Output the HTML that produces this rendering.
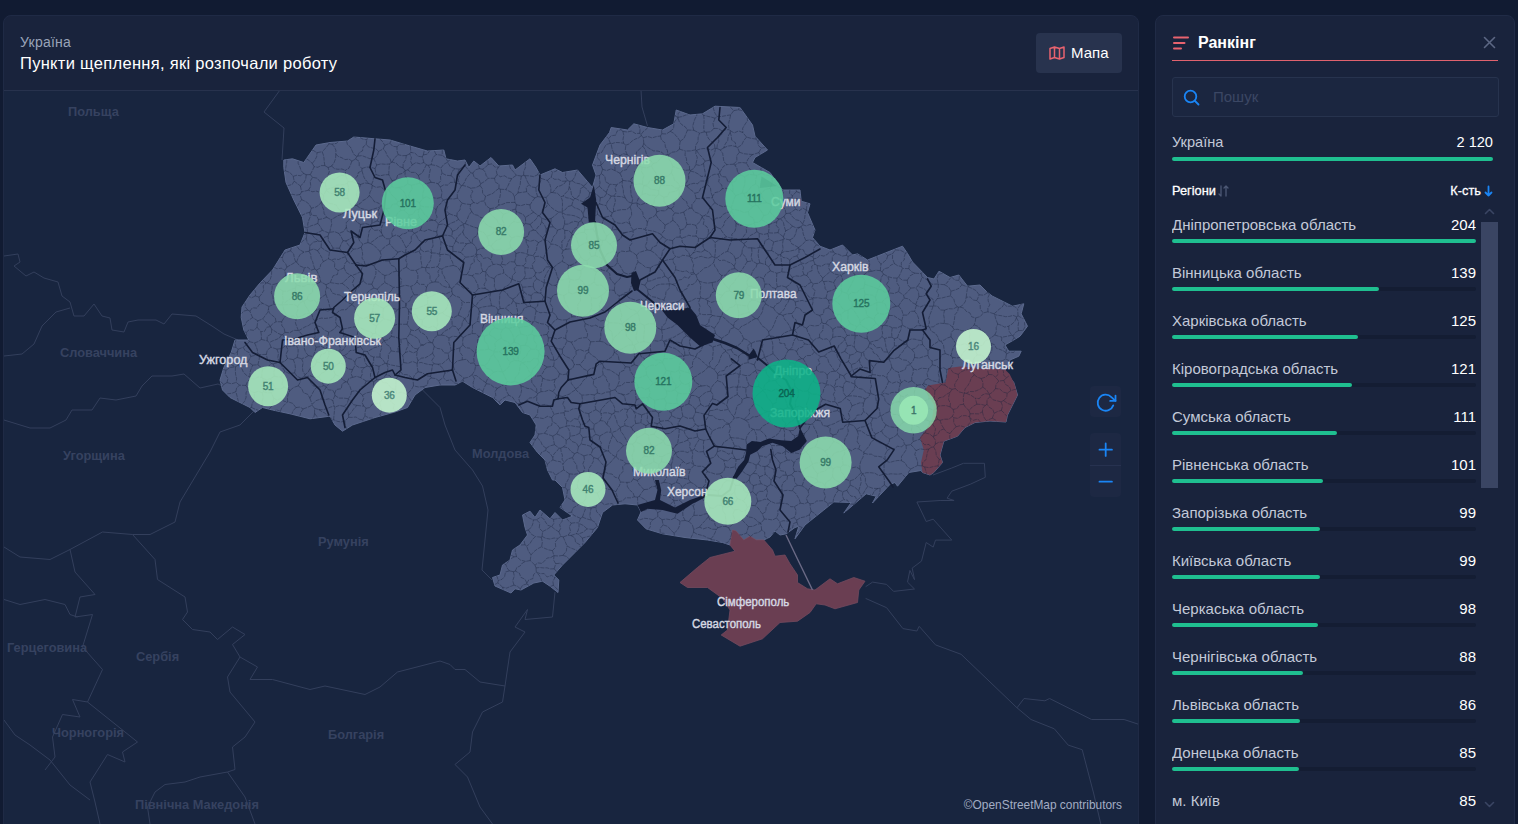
<!DOCTYPE html>
<html lang="uk"><head><meta charset="utf-8"><title>Пункти щеплення</title>
<style>
*{box-sizing:border-box;margin:0;padding:0}
html,body{width:1518px;height:824px;overflow:hidden;background:#111b32;font-family:"Liberation Sans",sans-serif;color:#fff}
.card{position:absolute;left:3px;top:15px;width:1136px;height:830px;background:#19233c;border:1px solid #1f2a45;border-radius:8px 8px 0 0;overflow:hidden}
.hdr{position:absolute;left:0;top:0;width:100%;height:75px;border-bottom:1px solid #27324d}
.hdr .sub{position:absolute;left:16px;top:17px;font-size:14px;letter-spacing:.25px;color:#9aa3b9;line-height:18px}
.hdr .ttl{position:absolute;left:16px;top:37px;font-size:16.5px;letter-spacing:.3px;color:#fff;line-height:20px}
.btn{position:absolute;left:1032px;top:17px;width:86px;height:40px;background:#28334e;border-radius:4px}
.btn svg{position:absolute;left:13px;top:13px}
.btn span{position:absolute;left:35px;top:11px;font-size:15px;line-height:18px;color:#fff}
.mapw{position:absolute;left:-1px;top:75px;width:1136px;height:734px;background:#18253f}
svg.map{position:absolute;left:0;top:0}
.map text{font-family:"Liberation Sans",sans-serif}
.ctry text{font-size:12.8px;font-weight:bold;fill:#364260}
.city text{font-size:12.3px;fill:#d6d9e3;stroke:#d6d9e3;stroke-width:.4px}
.bub text{font-size:10px;letter-spacing:-.15px;fill:#3b7468;stroke:#3b7468;stroke-width:.4px}
.attr{font-size:11.9px;fill:#a3adc4}
.ctl{position:absolute;left:1086px;width:31px;background:#1d2843;border-radius:4px}
.panel{position:absolute;left:1155px;top:15px;width:360px;height:830px;background:#19233c;border:1px solid #202b46;border-radius:8px 8px 0 0}
.panel .pt{position:absolute;left:42px;top:17px;font-size:16px;font-weight:bold;line-height:20px}
.panel .ul{position:absolute;left:16px;top:44px;width:326px;height:1.3px;background:#e0626e}
.search{position:absolute;left:16px;top:61px;width:327px;height:40px;border:1px solid #27334e;border-radius:3px;background:#1b2640}
.search span{position:absolute;left:40px;top:10px;font-size:15px;color:#3b4764;line-height:18px}
.tot{position:absolute;left:16px;top:117px;width:321px;font-size:14.6px;line-height:18px;color:#c3c9d8}
.tot b{position:absolute;right:0;top:0;font-weight:normal;color:#fff}
.totbar{position:absolute;left:16px;top:141px;width:321px;height:4px;border-radius:2px;background:#1fbf90}
.th{position:absolute;left:16px;top:167px;width:321px;font-size:12.8px;line-height:16px;color:#fff;-webkit-text-stroke:.3px #fff}
.th .r{position:absolute;right:12px;top:0}
.list{position:absolute;left:16px;top:199px;width:304px;height:598px;overflow:hidden}
.row{height:48px;position:relative}
.rl{position:absolute;left:0;top:0;width:304px;font-size:15px;line-height:18px;color:#c3c9d8}
.rn{position:absolute;left:0;top:1px;white-space:nowrap}
.rv{position:absolute;right:0;top:1px;color:#fff}
.bar{position:absolute;left:0;top:24px;width:304px;height:4px;border-radius:2px;background:#141d33}
.bar i{display:block;height:4px;border-radius:2px;background:#1fbf90}
.sb{position:absolute;left:325px;top:206px;width:17px;height:266px;background:#3a4563}
</style></head><body>
<div class="card">
 <div class="hdr">
  <div class="sub">Україна</div>
  <div class="ttl">Пункти щеплення, які розпочали роботу</div>
  <div class="btn"><svg width="16" height="14" viewBox="0 0 16 14" fill="none" stroke="#e8636f" stroke-width="1.5" stroke-linejoin="round"><path d="M1 2.5 L5.5 1 L10.5 2.5 L15 1 V11.5 L10.5 13 L5.5 11.5 L1 13 Z M5.5 1 V11.5 M10.5 2.5 V13"/></svg><span>Мапа</span></div>
 </div>
 <div class="mapw">
<svg class="map" width="1136" height="734" viewBox="3 91 1136 734">
<g fill="none" stroke="#333f5c" stroke-width="1" stroke-linejoin="round">
<path d="M280.0 90.0 L264.0 112.0 L284.0 128.0 L282.0 160.0"/>
<path d="M4.0 256.0 L18.0 254.0 L20.0 262.0 L14.0 266.0 L26.0 276.0 L34.0 272.0 L44.0 278.0 L58.0 282.0 L62.0 296.0 L70.0 302.0 L74.0 316.0 L84.0 316.0 L94.0 304.0 L102.0 316.0 L110.0 318.0 L112.0 330.0 L124.0 332.0 L128.0 322.0 L138.0 320.0 L156.0 320.0 L164.0 324.0 L172.0 314.0 L196.0 316.0 L212.0 326.0 L224.0 334.0 L238.0 340.0"/>
<path d="M70.0 308.0 L56.0 312.0 L42.0 326.0 L34.0 344.0 L22.0 354.0 L4.0 356.0"/>
<path d="M222.0 386.0 L218.0 384.0 L200.0 388.0 L184.0 374.0 L172.0 376.0 L152.0 376.0 L142.0 386.0 L136.0 396.0 L116.0 400.0 L100.0 398.0 L92.0 410.0 L72.0 410.0 L66.0 420.0 L50.0 428.0 L30.0 428.0 L4.0 420.0"/>
<path d="M253.0 412.0 L240.0 425.0 L220.0 432.0 L210.0 452.0 L195.0 477.0 L180.0 502.0 L175.0 522.0 L150.0 534.5 L132.5 534.5"/>
<path d="M132.5 534.5 L102.5 532.0 L70.0 549.5 L50.0 559.5 L20.0 557.0 L4.0 547.0"/>
<path d="M132.5 534.5 L155.0 559.5 L157.5 579.5 L185.0 597.0 L187.5 612.0 L182.5 619.5 L192.5 629.5 L210.0 632.0 L217.5 639.5 L232.5 627.0 L245.0 634.5 L232.5 644.5 L240.0 657.0"/>
<path d="M240.0 657.0 L257.5 667.0 L250.0 679.5 L272.5 679.5 L310.0 689.5 L325.0 686.0 L365.0 694.5 L380.0 687.0 L397.5 672.0 L440.0 661.0 L450.0 664.5 L455.0 669.5 L465.0 669.5 L480.0 682.0 L505.0 686.0"/>
<path d="M505.0 686.0 L510.0 652.0 L525.0 632.0 L515.0 627.0 L527.5 609.5 L525.0 619.5 L552.5 617.0 L555.0 592.0"/>
<path d="M505.0 686.0 L502.5 702.0 L482.5 712.0 L472.5 732.0 L470.0 752.0 L455.0 764.5 L467.5 777.0 L480.0 807.0 L492.5 824.0"/>
<path d="M240.0 657.0 L227.5 677.0 L230.0 692.0 L255.0 722.0 L245.0 737.0 L232.5 747.0 L235.0 769.5 L227.5 772.0"/>
<path d="M227.5 772.0 L200.0 777.0 L185.0 782.0 L165.0 784.5 L155.0 792.0 L147.5 807.0 L150.0 824.0"/>
<path d="M227.5 772.0 L245.0 797.0 L255.0 824.0"/>
<path d="M70.0 549.5 L75.0 572.0 L95.0 594.5 L80.0 597.0 L75.0 617.0 L92.5 614.5 L82.5 647.0 L102.5 669.5 L87.5 702.0 L72.5 699.5 L80.0 717.0 L62.5 714.5 L52.5 737.0 L55.0 757.0 L45.0 770.0"/>
<path d="M4.0 599.5 L20.0 604.5 L45.0 599.5 L65.0 604.5 L70.0 614.5 L77.5 617.0"/>
<path d="M87.5 702.0 L110.0 720.0 L137.5 742.0 L122.5 752.0 L125.0 762.0 L107.5 754.5 L90.0 782.0 L95.0 802.0 L100.0 824.0"/>
<path d="M4.0 720.0 L15.0 735.0 L30.0 745.0 L50.0 760.0 L70.0 785.0 L90.0 800.0"/>
<path d="M422.5 390.0 L440.0 407.5 L445.0 425.0 L455.0 450.0 L472.5 470.0 L482.5 486.0 L488.0 510.0 L485.0 540.0 L482.0 570.0 L492.0 580.0"/>
<path d="M641.0 90.0 L642.0 107.0 L647.5 126.0"/>
<path d="M933.0 475.0 L951.8 468.0 L963.4 463.3 L984.4 463.3 L985.3 477.3 L970.4 484.2 L951.8 491.2 L947.1 498.2 L954.1 500.5 L940.1 500.5 L916.9 502.0 L926.2 521.5 L933.2 519.2 L951.8 540.1 L935.5 540.1 L933.2 547.1 L926.2 542.5 L921.5 561.1 L912.2 568.1 L914.5 579.7 L909.9 570.4 L907.5 582.1 L914.5 589.0 L893.6 591.4 L886.6 584.4 L872.6 582.1 L865.6 586.7"/>
<path d="M865.6 598.4 L886.6 607.7 L902.9 628.6 L916.9 631.0 L919.2 626.3 L935.5 644.9 L961.1 654.3 L1017.0 707.8 L1024.0 698.5 L1044.9 700.8 L1049.6 698.5 L1091.5 719.5 L1124.1 719.5 L1138.0 724.1"/>
<path d="M1017.0 707.8 L1031.0 719.5 L1054.3 728.8 L1068.2 745.1 L1082.2 749.7 L1093.8 794.0 L1100.8 824.0"/>
</g>
<g class="ctry">
<text x="68" y="116">Польща</text>
<text x="60" y="357">Словаччина</text>
<text x="63" y="460">Угорщина</text>
<text x="318" y="546">Румунія</text>
<text x="472" y="458">Молдова</text>
<text x="136" y="661">Сербія</text>
<text x="328" y="739">Болгарія</text>
<text x="7" y="652">Герцеговина</text>
<text x="52" y="737">Чорногорія</text>
<text x="135" y="809">Північна Македонія</text>
</g>
<path d="M283.8 160.0 L292.5 158.8 L303.8 162.5 L316.0 145.0 L330.0 142.5 L347.5 141.0 L353.8 137.0 L375.0 138.8 L390.0 140.0 L410.0 146.0 L427.5 151.0 L443.8 150.0 L446.0 158.8 L457.5 161.0 L465.0 160.0 L468.8 167.5 L473.8 161.0 L480.0 166.0 L491.0 157.5 L498.8 166.0 L512.5 165.0 L515.0 170.0 L530.0 158.8 L536.0 167.5 L540.0 175.0 L555.0 168.8 L562.5 172.5 L577.5 170.0 L592.5 187.5 L596.0 175.0 L592.5 165.0 L600.0 145.0 L609.5 132.5 L611.2 127.5 L627.5 130.0 L633.8 123.8 L647.5 127.5 L662.5 130.0 L673.8 123.8 L676.2 110.0 L690.0 115.0 L702.5 113.8 L715.0 106.2 L740.0 107.5 L752.5 125.0 L755.0 136.2 L767.5 150.0 L755.0 157.5 L752.5 162.5 L770.0 172.5 L782.5 190.0 L800.0 190.0 L801.2 201.2 L810.0 203.8 L807.5 212.5 L815.0 230.0 L812.5 237.5 L820.0 246.2 L830.0 250.0 L842.5 245.0 L852.5 255.0 L857.5 253.8 L867.5 260.0 L902.5 246.2 L907.5 253.5 L912.5 262.0 L927.5 277.5 L934.0 279.0 L939.0 271.2 L950.0 277.5 L958.8 275.0 L967.5 286.2 L980.0 285.0 L987.5 292.5 L992.5 296.2 L1012.5 306.2 L1023.8 303.8 L1021.2 313.8 L1027.5 326.2 L1020.0 336.2 L1013.8 340.0 L1005.0 345.0 L1008.8 351.2 L1021.2 351.2 L1018.8 356.2 L1010.0 360.0 L1005.0 371.0 L1013.8 382.5 L1017.5 395.0 L1012.5 405.0 L1007.5 415.0 L1006.0 422.0 L990.0 421.0 L975.0 422.5 L965.0 427.5 L957.5 436.2 L943.8 441.2 L940.0 455.0 L942.5 462.5 L933.8 472.5 L930.0 475.0 L922.5 472.5 L921.0 470.5 L908.8 472.5 L897.5 486.2 L895.0 482.5 L890.0 484.4 L872.5 503.0 L876.2 496.2 L866.2 493.8 L843.8 513.0 L851.2 502.5 L833.8 501.9 L823.8 510.0 L805.0 525.0 L795.0 538.8 L798.8 526.2 L795.0 527.5 L786.2 533.8 L780.0 535.0 L775.0 531.0 L770.0 537.0 L763.8 540.0 L756.2 540.0 L750.0 536.2 L743.8 540.0 L736.0 531.0 L732.5 530.0 L730.0 545.0 L722.5 542.5 L707.5 540.0 L685.0 537.5 L662.5 533.8 L646.0 528.8 L637.5 520.0 L641.0 512.0 L637.5 505.0 L625.0 503.8 L612.5 505.0 L602.5 512.5 L597.5 527.5 L585.0 542.5 L575.0 552.5 L562.5 565.0 L553.8 575.0 L558.8 580.0 L558.0 592.5 L550.0 586.2 L542.5 581.2 L533.8 583.0 L521.0 590.0 L515.0 588.8 L511.0 593.0 L495.0 586.0 L492.5 577.5 L500.0 575.0 L502.5 565.0 L510.0 560.0 L512.5 550.0 L520.0 545.0 L527.5 535.0 L525.0 527.5 L522.5 515.0 L530.0 511.2 L535.0 517.5 L540.0 510.0 L550.0 518.8 L555.0 512.5 L562.5 520.0 L572.5 516.2 L560.0 507.5 L565.0 500.0 L562.5 487.5 L555.0 480.0 L552.5 480.0 L547.5 470.0 L545.0 460.0 L537.5 452.5 L530.0 442.5 L535.0 435.0 L536.2 425.0 L530.0 415.0 L522.5 412.5 L515.0 402.5 L505.0 400.0 L500.0 405.0 L492.5 397.5 L482.5 392.5 L472.5 387.5 L462.5 381.2 L455.0 385.0 L440.0 385.0 L425.0 387.5 L415.0 395.0 L407.5 407.5 L395.0 412.0 L375.0 417.5 L352.5 425.0 L342.5 431.2 L335.0 425.0 L330.0 416.2 L310.0 418.8 L290.0 413.8 L272.5 410.0 L262.5 407.5 L255.0 412.5 L250.0 407.5 L240.0 402.5 L230.0 397.5 L222.5 390.0 L220.0 380.0 L223.8 367.5 L231.2 352.5 L235.0 340.0 L248.8 340.0 L243.8 330.0 L241.2 317.5 L242.0 307.0 L250.0 295.0 L260.0 283.0 L272.5 270.0 L285.0 250.0 L300.0 245.0 L305.0 232.5 L302.5 217.5 L293.8 200.0 L286.0 182.5 L283.8 167.5Z" fill="#4f5c80" stroke="#5c6a8e" stroke-width="1" stroke-linejoin="round"/>
<path d="M1005.0 369.5 L1009.6 374.0 L1014.5 384.0 L1017.5 395.0 L1012.5 405.0 L1007.5 415.0 L1006.0 422.0 L990.0 421.0 L975.0 422.5 L965.0 427.5 L957.5 436.2 L943.8 441.2 L940.0 455.0 L942.5 462.5 L933.8 472.5 L930.0 475.0 L922.5 472.5 L921.0 462.5 L923.8 450.0 L920.0 437.5 L926.0 430.0 L932.0 420.0 L934.0 405.0 L925.0 390.0 L928.0 385.5 L945.5 382.6 L948.4 368.0 L960.0 366.5 L985.0 368.5Z" fill="#6a3e52"/>
<path d="M732.5 530.0 L736.0 531.0 L743.8 540.0 L750.0 536.2 L756.2 540.0 L763.8 540.0 L772.5 550.0 L775.0 556.2 L785.0 555.0 L790.0 563.8 L797.5 575.0 L797.5 582.5 L807.5 588.8 L815.0 590.0 L830.0 578.8 L837.5 583.8 L853.8 577.5 L865.0 581.2 L858.8 590.0 L857.5 602.5 L835.0 608.8 L825.0 605.0 L816.2 603.8 L810.0 612.5 L797.5 621.2 L780.0 622.5 L762.5 638.8 L740.0 646.2 L721.2 635.0 L727.5 630.0 L730.0 610.0 L722.0 598.0 L707.5 587.5 L687.5 587.5 L680.0 582.5 L697.5 567.5 L710.0 557.5 L735.0 551.2 L730.0 545.0Z" fill="#6a3e52" stroke="#744a5e" stroke-width="0.8"/>
<path d="M786 535 L797 558 L812.5 590" fill="none" stroke="#6b6a86" stroke-width="1.4"/>
<path d="M1015.9 389.6L1015.2 389.3L1010.9 390.7M1003.6 400.6L1006.7 397.5L1007.2 393.1M1003.6 400.6L1007.6 403.4L1012.0 405.0L1012.5 405.0M1010.9 390.7L1007.2 393.1M869.7 317.3L866.6 314.9L866.2 311.2L864.8 307.9M869.7 317.3L874.0 319.5M876.8 302.4L872.9 304.5L869.0 306.3L864.8 307.9M876.8 302.4L876.9 306.0L876.6 309.7L878.0 313.2M878.0 313.2L875.1 315.8L874.0 319.5M822.8 278.0L819.7 274.4L817.6 270.3L817.2 265.5M822.8 278.0L826.5 274.6L830.5 271.4M817.2 265.5L821.4 266.3L825.2 264.1L829.3 264.0M830.5 271.4L828.6 267.9L829.3 264.0M308.4 355.6L305.6 352.3L304.3 348.4L304.7 343.8L302.0 340.6M308.4 355.6L305.2 357.6L301.6 358.7M297.1 357.5L301.6 358.7M297.1 357.5L298.1 353.4L298.1 349.4L296.4 345.4M296.4 345.4L299.8 343.7L302.0 340.6M992.3 418.2L995.8 420.1L996.3 421.4M992.3 418.2L994.1 413.3M994.1 413.3L997.6 411.5L1001.3 410.4M1001.3 410.4L1003.9 412.8L1006.2 415.7L1007.3 416.0M1003.6 400.6L1001.0 401.9M1001.0 401.9L1002.6 406.1L1001.3 410.4M871.6 271.3L867.8 271.9L864.7 273.9L862.5 277.1M871.6 271.3L875.9 270.2L880.3 270.7M862.5 277.1L864.9 280.3L864.7 284.2M864.7 284.2L869.1 285.7L873.5 287.1L877.7 288.9M882.0 272.0L880.3 270.7M882.0 272.0L883.5 274.1M883.5 274.1L881.2 277.5L880.6 281.5L880.2 285.6L877.7 288.9M862.3 256.8L861.9 256.7L858.0 254.6L855.9 254.1M871.6 271.3L869.1 268.4L869.7 264.3L868.9 260.6L868.1 259.8M848.1 256.4L847.7 261.1L848.1 265.7L849.7 270.1M848.1 256.4L852.0 254.5M862.5 277.1L858.4 277.3L854.9 274.9M849.7 270.1L852.9 271.9L854.9 274.9M846.2 255.3L848.1 256.4M846.2 255.3L847.7 251.6L845.4 248.1L845.4 247.9M876.8 256.3L876.8 256.5M885.2 253.0L887.8 255.5M887.8 255.5L886.6 259.3L884.0 261.9L880.9 264.2M876.8 256.5L878.2 260.7L880.9 264.2M876.6 256.4L876.8 256.5M880.3 270.7L880.9 264.2M813.4 283.7L812.0 287.3L815.1 290.8L814.1 294.4L813.5 298.0M813.4 283.7L811.2 282.3M798.4 290.3L802.7 291.2L806.3 293.4L809.1 297.1L813.2 298.3M798.4 290.3L798.4 288.7M811.2 282.3L808.1 284.0L805.4 286.7L801.3 286.4L798.4 288.7M236.1 347.4L235.0 343.5L236.0 340.0M236.1 347.4L232.9 346.9M226.9 361.2L228.4 362.8L231.8 364.9L235.3 366.8M226.0 370.1L230.3 367.5L235.3 366.8M226.0 370.1L223.1 369.6M342.8 329.2L343.6 335.5M342.8 329.2L347.1 328.3L351.3 327.3L355.7 326.8M355.7 326.8L357.9 330.5L357.3 334.7L358.9 338.6L358.6 342.8M343.6 335.5L348.2 337.6L351.0 341.7M358.6 342.8L354.6 343.5L351.0 341.7M259.9 283.2L262.6 282.8L266.3 283.0M262.9 280.0L266.3 283.0M406.4 267.2L407.1 263.7L405.8 260.3L406.7 256.7L405.2 253.3M406.4 267.2L402.6 269.1L399.5 272.0M405.2 253.3L401.8 251.2L397.9 252.0M399.5 272.0L396.6 271.2M397.9 252.0L395.7 255.6L392.2 258.1L389.2 261.0M396.6 271.2L395.2 267.0L390.8 265.0L389.2 261.0M326.9 179.7L330.6 178.7L334.6 179.4L338.1 177.0L341.6 175.3L345.7 176.0M326.9 179.7L325.2 183.0M345.7 176.0L348.1 181.7M325.2 183.0L326.5 189.7M326.5 189.7L329.9 188.3L333.4 187.3L336.6 185.2L340.3 184.8L344.1 184.7L347.4 183.1M348.1 181.7L347.4 183.1M670.3 131.3L673.5 128.7L673.9 124.6L674.9 120.8L678.1 118.3M670.3 131.3L673.4 133.1L676.0 135.6L678.2 138.3L680.2 141.3M678.1 118.3L679.4 122.0L681.9 124.8L685.3 126.9L687.5 130.0M680.2 141.3L684.0 138.4L685.8 134.2L687.5 130.0M675.3 115.2L675.8 116.3M675.8 116.3L677.8 117.4M680.2 111.4L678.3 113.4L677.8 117.4M572.2 180.8L575.7 183.1L580.0 183.8L583.6 186.0M572.2 180.8L574.7 177.0L576.1 172.6L577.6 170.1M583.6 186.0L586.8 183.3L587.6 181.8M1020.2 304.5L1020.3 304.7M1022.3 304.1L1020.3 304.7M1004.1 304.0L1007.0 306.5L1011.1 306.0L1014.7 306.7L1017.7 308.9M1004.1 304.0L1003.8 301.9M1020.3 304.7L1017.7 308.9M994.0 313.8L996.7 311.5L999.3 309.1L1002.2 307.0L1004.1 304.0M994.0 313.8L994.6 314.6M1016.8 316.8L1013.2 315.4L1009.4 316.4L1005.6 316.7L1002.0 315.8L998.3 315.3L994.6 314.6M1016.8 316.8L1018.0 315.8M1018.0 315.8L1017.7 308.9M968.9 329.6L971.8 327.6L974.2 324.8M968.9 329.6L969.7 333.7L969.4 337.7L970.1 341.8L968.9 345.9M974.2 324.8L978.2 326.5L980.8 329.9L984.4 332.1L986.9 335.5L989.5 338.8M989.3 339.3L985.1 340.7L982.9 345.3L978.3 346.1L974.8 348.7M968.9 345.9L974.8 348.7M968.9 329.6L965.2 331.0L961.5 330.7L957.8 329.3L954.1 329.5M960.1 307.0L958.4 307.2M960.1 307.0L963.9 308.2L966.3 311.4L969.9 312.9L971.8 316.9L975.7 317.9M958.4 307.2L957.7 311.3L954.9 314.8L954.5 319.0L953.8 323.1L952.6 327.1M975.7 317.9L975.3 321.4L974.2 324.8M954.1 329.5L952.6 327.1M896.1 306.3L892.1 307.5L889.1 310.3M896.1 306.3L898.5 306.0M889.1 310.3L888.4 312.2M888.4 312.2L888.8 315.4M888.8 315.4L893.8 315.6L897.7 318.3L901.8 320.7M901.8 320.7L903.2 315.0M898.5 306.0L901.8 310.0L903.2 315.0M877.9 289.4L881.5 289.7L884.6 292.4L888.4 292.1M877.9 289.4L876.7 293.4L875.4 297.3M875.4 297.3L876.9 302.2M887.9 296.9L884.5 299.3L881.7 302.5M887.9 296.9L889.1 292.9M876.9 302.2L881.7 302.5M889.1 292.9L888.4 292.1M883.5 274.1L887.9 276.6M887.9 276.6L888.9 280.5L886.5 284.4L889.8 288.2L888.4 292.1M865.0 294.1L868.6 294.8L872.3 295.1L875.4 297.3M865.0 294.1L863.8 288.2M864.7 284.2L863.8 288.2M865.0 294.1L863.9 298.4L860.8 301.7L859.1 305.7M864.8 307.9L859.1 305.7M896.1 306.3L893.4 303.2L890.2 300.5L887.9 296.9M889.1 310.3L886.3 308.0L885.3 304.0L881.7 302.5M888.4 312.2L885.1 314.2L881.6 314.0L878.0 313.2M897.0 278.1L896.7 282.7L899.6 286.9L898.6 291.6M897.0 278.1L892.4 277.9L887.9 276.6M898.6 291.6L894.0 293.5L889.1 292.9M863.8 288.2L859.7 289.3L856.7 293.0L851.8 292.3L848.5 295.2M854.9 274.9L854.0 278.9L852.2 282.5L850.5 286.1L848.5 289.5L847.0 293.2M848.5 295.2L847.0 293.2M859.1 305.7L852.3 306.7M848.5 295.2L848.6 299.4L852.3 302.4L852.3 306.7M869.7 317.3L865.7 318.0L862.5 319.9L860.0 323.1M860.0 323.1L859.7 319.3L857.6 316.4L855.9 313.4L853.9 310.5L851.3 307.9M852.3 306.7L851.3 307.9M882.0 272.0L884.3 268.7L888.2 267.8L890.9 265.1L894.4 263.6M887.8 255.5L892.6 253.6M894.4 263.6L892.5 258.7L892.6 253.6M895.0 249.2L895.4 249.9M892.6 253.6L895.4 249.9M951.7 277.0L954.6 280.1L959.0 280.4M951.5 277.1L949.1 279.4L947.3 282.6L944.4 284.7M944.4 284.7L948.6 287.0L950.9 291.2M950.9 291.2L955.1 290.0L959.0 288.3L961.9 284.8M961.9 284.8L959.0 280.4M959.5 276.0L959.4 276.4L959.0 280.4M942.7 273.3L938.2 274.4M944.4 284.7L938.3 284.2M938.2 274.4L937.2 279.2L938.2 284.0M957.2 306.8L954.8 303.3L953.8 298.9L950.5 295.9M957.2 306.8L953.3 308.9L948.7 308.7L944.5 310.2M950.5 295.9L946.1 296.9L941.8 298.0L937.4 298.5M944.5 310.2L940.3 310.0L937.6 306.1L933.5 305.9M937.4 298.5L933.9 303.0M933.5 305.9L933.9 303.0M958.4 307.2L957.2 306.8M952.6 327.1L949.0 324.1L944.2 323.5M944.2 323.5L944.4 319.0L943.6 314.6L944.5 310.2M950.9 291.2L950.5 295.9M938.3 284.2L938.2 287.8L936.6 291.3L938.8 295.0L937.4 298.5M944.2 323.5L940.3 323.2L936.6 324.3L933.4 326.8L929.5 327.1M929.5 327.1L928.1 326.5M933.1 306.2L931.7 310.2L930.2 314.1L928.8 318.1L929.4 322.5L928.1 326.5M994.0 313.8L987.9 311.8M975.7 317.9L980.3 316.6L983.3 312.9M994.8 335.0L989.5 338.8M994.8 335.0L996.3 331.5L996.2 327.5L997.7 324.0M997.7 324.0L995.9 319.4L994.6 314.6M987.9 311.8L983.3 312.9M987.9 311.8L987.9 308.2L989.8 304.8L988.2 301.0L988.0 297.4L989.5 294.0M989.1 293.7L987.5 292.8M987.5 292.8L986.7 291.7M938.2 274.4L937.3 273.9M1016.8 316.8L1016.4 317.8M997.7 324.0L1001.3 325.3L1004.7 327.1L1008.7 326.2M1016.4 317.8L1014.8 321.5L1012.0 324.0L1008.7 326.2M1010.9 390.7L1009.4 386.7L1005.4 384.4L1003.8 380.4M1007.2 393.1L1003.1 392.1L999.8 389.0L995.5 388.6M995.5 388.6L996.0 384.4L998.8 381.1M1003.8 380.4L998.8 381.1M846.2 255.3L842.3 256.1L838.8 254.4L835.2 253.5M835.2 253.5L833.6 252.1M832.0 249.2L833.6 252.1M822.1 280.4L818.3 283.3L813.4 283.7M822.1 280.4L822.8 278.0M817.2 265.5L815.0 264.2M811.2 282.3L809.6 278.7L806.9 275.7M806.9 275.7L808.0 272.2L812.1 270.7L811.7 266.2L815.0 264.2M816.1 244.9L813.5 248.5L814.2 253.0L813.0 257.0M816.1 244.9L819.2 245.3M833.6 252.1L829.8 251.9L827.0 254.5L823.9 256.1L819.8 255.2L817.2 258.2L813.7 258.8M813.0 257.0L813.7 258.8M835.2 253.5L832.3 256.5L832.3 261.1L829.3 264.0M815.0 264.2L813.4 260.4M813.7 258.8L813.4 260.4M798.6 247.5L802.6 244.4L805.9 240.6M798.6 247.5L795.1 245.6L791.6 243.7L789.8 239.9M789.8 239.9L793.7 237.7L795.6 233.9L796.7 229.4L800.4 227.0M805.9 240.6L804.4 237.2L803.2 233.8L802.7 230.1L801.2 226.8M800.4 227.0L801.2 226.8M798.4 288.7L796.3 284.0L792.0 281.2M806.9 275.7L804.0 274.7M804.0 274.7L800.3 276.4L796.1 275.9L792.2 277.3M792.0 281.2L792.2 277.3M763.4 278.6L759.2 276.8L754.6 278.4L750.4 277.1M763.4 278.6L764.9 284.1M764.9 284.1L764.2 287.8L761.5 290.4M761.5 290.4L758.1 289.6L754.8 288.3L751.8 286.1L748.0 286.5M748.0 286.5L746.6 282.1L748.6 277.8M748.6 277.8L750.4 277.1M770.4 270.9L776.8 273.2M770.4 270.9L765.9 273.9L763.4 278.6M775.7 288.5L771.9 287.5L769.2 284.0L764.9 284.1M775.7 288.5L777.3 287.0M776.8 273.2L776.6 277.8L776.5 282.4L777.3 287.0M729.6 290.9L735.0 294.0M729.6 290.9L729.2 288.9M729.2 288.9L730.6 285.1L734.0 282.6L735.8 278.9L738.6 276.0L740.3 272.3M740.3 272.3L744.7 274.7L748.6 277.8M735.0 294.0L738.5 292.3L742.4 291.5L746.0 290.2M746.0 290.2L748.0 286.5M747.2 261.7L752.2 260.9M747.2 261.7L744.9 265.2L742.7 268.8L740.1 272.1M757.1 263.8L756.0 267.4L753.2 270.1L751.7 273.6L750.4 277.1M757.1 263.8L752.2 260.9M729.6 290.9L725.3 291.6L722.7 295.2M729.2 288.9L725.8 285.9L723.3 282.2L720.9 278.4M722.7 295.2L718.1 294.4L715.1 290.9M715.1 290.9L712.6 287.0L712.2 282.5M712.2 282.5L717.1 281.6L720.9 278.4M735.0 268.7L740.1 272.1M735.0 268.7L731.0 269.2L728.0 271.5L725.7 275.2L721.6 275.5M720.9 278.4L721.6 275.5M620.2 303.5L624.1 304.5L627.3 306.7L630.3 309.3L634.4 309.9L637.2 312.9M620.2 303.5L619.5 307.6L620.7 311.5L621.8 315.5L620.5 319.6L622.3 323.5M637.2 312.9L633.9 314.6L630.9 316.6L628.1 319.0L625.1 321.0L622.3 323.5M608.8 310.4L608.5 314.2L608.4 318.1L608.4 322.0M608.8 310.4L612.4 307.9L616.1 305.4L619.1 302.1M608.4 322.0L608.7 322.8M619.1 302.1L620.2 303.5M608.7 322.8L613.2 322.8L617.7 323.1L622.1 324.2M734.1 266.1L735.0 268.7M734.1 266.1L735.7 262.7L735.3 258.9M747.2 261.7L745.5 256.9L741.9 253.4M735.3 258.9L739.6 257.3L741.9 253.4M751.6 247.8L747.7 247.8L744.7 245.1M751.6 247.8L752.0 252.1L751.2 256.5L752.2 260.9M741.9 253.4L742.4 249.0L744.7 245.1M647.5 281.3L651.1 280.8L654.5 279.3L657.9 278.0L661.6 277.7L664.9 276.1M647.5 281.3L647.7 276.7L650.0 272.5L650.4 267.9M664.9 276.1L663.5 271.9L659.9 268.8L658.3 264.6M658.3 264.6L654.0 265.5L650.4 267.9M734.1 266.1L731.2 263.2L727.6 261.8L724.1 260.1L719.6 260.6L716.7 257.8M721.6 275.5L718.7 272.9L717.2 269.3L714.8 266.3L713.6 262.6M713.6 262.6L714.9 258.0M716.7 257.8L714.9 258.0M735.3 258.9L733.8 255.4L730.9 253.0L727.6 251.3M716.7 257.8L720.2 255.4L723.5 252.8L727.6 251.3M744.7 245.1L743.8 243.6M743.8 243.6L741.2 241.6M741.2 241.6L737.2 238.6L732.2 238.4M727.6 251.3L729.0 247.0L730.9 242.8L732.2 238.4M532.6 446.0L533.5 443.2L535.7 439.3M535.7 439.3L532.3 439.0M227.0 382.6L231.6 383.8L236.2 382.4M227.0 382.6L223.8 384.4M223.8 384.4L221.8 387.0M235.9 391.7L231.8 393.3L227.3 393.8L226.7 394.2M235.9 391.7L236.6 387.8L239.5 385.2M239.5 385.2L236.2 382.4M226.0 370.1L225.2 374.3L228.0 378.3L227.0 382.6M235.4 366.8L235.4 370.7L235.6 374.6L236.6 378.5L236.2 382.4M220.4 381.5L223.8 384.4M238.4 401.7L238.0 400.1L237.0 395.9L235.9 391.7M246.0 385.4L247.5 381.5L250.7 378.7M246.0 385.4L239.5 385.2M238.0 365.2L235.4 366.8M238.0 365.2L241.4 367.7L243.3 371.9L246.1 375.1L250.1 377.1M250.1 377.1L250.7 378.7M238.0 349.3L243.1 347.3M238.0 349.3L237.6 351.3M243.1 347.3L245.2 350.7L249.2 352.6L250.8 356.4M237.6 351.3L237.2 355.5L239.6 359.3L239.1 363.5M239.1 363.5L243.4 361.8L248.1 362.1M248.1 362.1L250.8 356.4M236.1 347.4L238.0 349.3M246.1 332.6L244.4 331.3M246.1 332.6L246.8 336.1M248.5 340.0L249.4 341.7M249.4 341.7L246.5 344.7L243.1 347.3M231.0 353.0L234.6 353.9L237.6 351.3M238.0 365.2L239.1 363.5M250.1 377.1L249.8 372.9L251.1 369.0L252.7 365.1M252.7 365.1L248.1 362.1M250.7 378.7L254.5 379.1L258.1 376.9L261.9 377.5M252.7 365.1L257.9 364.8M257.9 364.8L262.8 368.8M262.8 368.8L261.8 373.1L261.9 377.5M297.1 357.5L293.3 359.6M296.4 345.4L291.4 346.2L286.3 346.1M293.3 359.6L287.5 358.5M287.5 358.5L285.9 354.5L288.0 350.2L286.3 346.1M284.9 332.3L284.2 328.6L281.8 325.5L281.7 321.7M284.9 332.3L282.8 334.7M282.8 334.7L281.5 334.8M281.5 334.8L278.0 333.3L274.8 331.2L271.6 329.2M270.4 326.5L272.8 323.6L276.0 321.8M271.6 329.2L270.4 326.6M281.7 321.7L276.0 321.8M254.5 289.6L255.7 292.0L255.3 296.0M255.3 296.0L251.8 297.7L249.0 296.6M246.1 332.6L249.2 329.7L254.1 330.4L257.0 327.1M257.0 327.1L257.8 320.8M243.0 326.2L245.1 325.2L246.7 321.7L249.6 319.6L252.6 317.6M257.8 320.8L252.6 317.6M257.0 327.1L260.8 331.7M270.4 326.5L268.2 323.6L265.1 321.7L262.8 318.9M270.4 326.6L266.7 327.3L264.6 331.3L260.8 331.7M257.8 320.8L262.8 318.9M276.0 321.8L275.3 317.9L272.2 315.3L269.1 312.7L268.5 308.7M262.8 318.9L265.1 315.7L267.5 312.6L268.5 308.7M254.6 342.9L256.0 346.2L257.3 349.6L257.7 353.2M254.6 342.9L258.2 341.6L261.4 339.4M261.4 339.4L267.2 340.9M266.3 354.4L259.7 354.6M266.3 354.4L267.4 350.0L271.0 347.2M271.0 347.2L269.3 342.6M259.7 354.6L257.7 353.2M269.3 342.6L267.2 340.9M249.4 341.7L254.6 342.9M250.8 356.4L254.6 355.5L257.7 353.2M260.8 331.7L261.4 335.5L261.4 339.4M271.6 329.2L271.5 333.7L267.2 336.5L267.2 340.9M257.9 364.8L259.1 359.8L259.7 354.6M262.8 368.8L267.7 367.2L271.2 363.5M271.2 363.5L267.5 359.6L266.3 354.4M282.8 334.7L284.9 338.1L285.0 342.0L285.6 345.7M281.5 334.8L279.3 338.1L276.0 339.6L272.5 340.9L269.3 342.6M276.9 349.1L281.7 348.6L285.6 345.7M276.9 349.1L271.0 347.2M295.9 407.6L293.0 410.9L291.8 414.2M295.9 407.6L299.8 407.1L303.2 408.9M303.2 408.9L300.8 412.5L299.8 416.2M250.3 407.8L251.5 407.5M242.5 403.7L244.8 401.1L246.1 397.2L246.0 392.8L248.2 389.2M251.5 407.5L252.1 403.7L254.0 400.3L254.3 396.4L254.5 392.6M248.2 389.2L251.1 391.3L254.5 392.6M246.0 385.4L248.2 389.2M251.5 407.5L254.9 409.1L258.3 410.3M254.5 392.6L258.4 391.2L262.2 392.8M262.2 392.8L263.3 397.2L262.1 401.5L262.1 405.9L262.1 407.7M280.4 411.3L280.5 411.7M280.4 411.3L276.5 409.9L275.0 410.5M308.4 355.6L313.1 356.6M302.0 340.6L302.4 339.7M313.7 340.3L314.3 344.0L316.1 347.2M313.7 340.3L312.7 339.7M312.7 339.7L307.6 339.0L302.4 339.7M316.1 347.2L314.8 352.0L313.1 356.6M316.7 361.9L320.6 362.8L323.7 364.9L326.6 367.4M316.7 361.9L314.8 366.0L310.3 367.9L308.3 371.9L305.0 374.8M326.6 367.4L325.3 371.6L321.1 373.5L318.6 376.8M318.6 376.8L314.5 377.5L310.4 375.7L306.3 376.8M306.3 376.8L304.5 376.2M304.5 376.2L305.0 374.8M301.6 358.7L303.1 362.6L302.4 367.0L302.8 371.1L305.0 374.8M313.1 356.6L316.1 360.2M316.1 360.2L316.7 361.9M337.0 325.4L334.9 328.4L332.0 330.4L328.8 332.1M337.0 325.4L342.8 329.2M328.8 332.1L327.6 337.3M343.6 335.5L341.4 340.0L338.5 344.2M327.6 337.3L330.9 340.1L334.3 342.8L338.5 344.2M328.8 332.1L324.6 330.3L321.2 327.0L316.8 325.8M313.7 340.3L318.1 339.0L322.5 337.6L327.2 337.8M312.7 339.7L315.1 336.6L314.8 332.8L314.5 328.9L316.8 325.8M316.1 347.2L321.5 346.5L326.3 348.9M327.2 337.8L325.5 341.4L326.9 345.2L326.3 348.9M316.1 360.2L319.7 358.6L321.1 354.6L324.9 353.3L327.0 350.1M326.3 348.9L327.0 350.1M247.8 310.1L249.9 311.1M247.8 310.1L243.7 311.1L241.5 313.7M252.6 317.6L251.2 314.4L249.9 311.1M511.9 279.4L507.8 276.4L503.9 273.0M512.3 279.3L512.4 275.6L515.3 272.7L514.2 268.7L516.6 265.6M503.9 273.0L503.2 268.6L500.5 265.1M514.6 262.0L509.9 261.6L505.9 265.0L501.2 264.2M514.6 262.0L516.6 265.6M500.5 265.1L501.2 264.2M515.9 253.5L513.8 250.1L510.8 247.4M515.9 253.5L515.6 257.8L514.6 262.0M504.0 251.7L507.4 249.5L510.8 247.4M504.0 251.7L501.5 255.5L502.8 260.2L501.2 264.2M309.0 251.2L310.7 254.5L311.1 258.4L312.7 261.8L313.6 265.4L314.8 269.0M309.0 251.2L304.0 252.1M296.6 262.1L298.1 258.0L300.2 254.4L304.0 252.1M296.6 262.1L299.7 265.9L304.3 267.8M314.8 269.0L311.1 270.2L307.9 267.3L304.3 267.8M285.5 275.5L287.6 279.0L292.3 279.0L294.9 282.0M285.5 275.5L284.9 270.3M284.9 270.3L286.9 267.1M286.9 267.1L291.3 264.6L295.7 262.0M295.7 262.0L296.6 262.1M304.3 267.8L303.2 272.2L299.9 275.1L297.1 278.4L294.9 282.0M406.4 267.2L410.7 270.3L416.0 270.4M405.5 252.9L409.8 250.9L414.6 252.6L419.0 251.3M416.0 270.4L422.0 267.4M419.0 251.3L421.0 255.1L420.7 259.4L421.5 263.4L422.0 267.4M396.6 271.2L392.5 272.1L389.0 274.6L384.9 275.5M384.9 275.5L381.5 273.8L378.9 271.1L375.7 269.1M389.2 261.0L384.3 261.0L379.6 259.4M375.7 269.1L373.9 265.7M379.6 259.4L376.8 262.6L373.9 265.7M371.8 284.2L367.0 284.1L363.3 281.2M371.8 284.2L373.3 280.5L375.0 276.9L376.0 273.2L375.7 269.1M363.3 281.2L362.2 276.3L361.0 271.4M361.0 271.4L361.8 267.8L364.4 265.3M364.4 265.3L365.1 264.8M365.1 264.8L369.7 263.9L373.9 265.7M380.3 294.7L384.5 295.8M380.3 294.7L377.3 289.2M384.5 295.8L388.1 293.6L391.3 291.0L393.3 287.3M377.3 289.2L380.7 285.5L384.8 282.6M384.8 282.6L389.1 284.7L393.3 287.3M388.3 299.5L384.5 295.8M388.3 299.5L391.5 296.2L395.5 294.6L399.9 293.9M399.9 293.9L399.9 287.5M399.9 287.5L393.3 287.3M371.8 284.2L373.9 288.1M373.9 288.1L377.3 289.2M384.9 275.5L384.6 279.0L384.8 282.6M399.5 272.0L398.5 275.7L401.3 279.2L401.0 282.8L400.6 286.5M400.6 286.5L399.9 287.5M389.5 243.9L385.9 246.0L382.8 248.5L380.0 251.5M389.5 243.9L389.8 238.9M389.8 238.9L385.7 238.7L383.0 235.6M383.0 235.6L379.0 236.4L376.0 238.8L373.0 241.1L369.8 243.1M369.8 243.1L373.8 245.2L376.9 248.3L380.0 251.5M397.9 252.0L394.7 249.7L392.2 246.8L389.5 243.9M379.6 259.4L381.3 255.5L380.0 251.5M347.4 183.1L348.4 186.9L348.8 190.7L347.0 194.5L348.0 198.3M326.3 190.4L329.5 192.9L333.3 193.9L336.9 195.3L341.0 195.2L343.9 198.3L348.0 198.3M354.8 205.6L351.8 206.7M354.8 205.6L355.8 202.1L357.8 198.9L356.4 194.7L357.1 191.2L359.4 188.0L360.5 184.5M348.1 181.7L352.1 181.7M360.5 184.5L356.3 183.0L352.1 181.7M348.0 198.3L349.8 202.6L351.8 206.7M381.5 233.1L381.2 229.2L382.3 225.7L384.7 222.6M381.5 233.1L383.0 235.6M384.7 222.6L388.6 221.1L392.7 220.2M389.8 238.9L392.3 236.5M392.3 236.5L391.8 232.5L394.0 228.6L394.3 224.6L393.3 220.5M405.5 252.9L406.1 247.8M406.1 247.8L404.1 243.9L402.1 240.0L399.4 236.4M392.3 236.5L395.8 235.1L399.4 236.4M419.0 251.3L420.8 249.6M422.0 267.4L425.6 267.6M426.0 267.4L427.9 264.0L430.3 260.8L431.0 256.9L431.5 253.0M420.8 249.6L424.0 251.9L428.2 251.0L431.5 253.0M515.9 253.5L519.9 252.4L523.7 253.0L527.6 254.2M510.8 247.4L509.7 242.6L511.7 238.1M511.7 238.1L516.3 236.1L521.2 236.9M525.9 239.5L526.4 243.2L528.4 246.7L527.6 250.5L527.6 254.2M525.9 239.5L524.3 237.8M521.2 236.9L524.3 237.8M590.7 341.8L595.2 341.5L599.7 341.3M590.7 341.8L587.1 337.7M585.2 323.5L584.7 327.2L586.3 330.6L587.6 334.0L587.1 337.7M585.2 323.5L588.4 325.0L591.8 326.2L595.7 325.2L598.9 327.1L602.4 327.8M602.4 327.8L600.8 332.1L600.8 336.8L599.7 341.3M625.4 198.1L627.8 201.7L631.9 203.2M625.4 198.1L623.5 194.0L623.3 189.7L622.2 185.5L622.3 181.1M631.9 203.2L632.7 199.0L631.1 194.9L630.8 190.8L630.4 186.7L631.9 182.6M622.3 181.1L622.7 180.3M622.7 180.3L626.3 180.9L630.0 181.2M631.9 182.6L630.0 181.2M620.1 173.3L621.6 176.7L622.7 180.3M620.1 173.3L622.5 170.6L626.5 169.7L628.4 166.4L630.9 163.7L633.6 161.3M633.6 161.3L635.7 165.0L639.8 166.4M639.8 166.4L638.4 169.8L634.5 171.4L635.1 176.0L631.7 178.0L630.0 181.2M642.5 184.3L639.0 183.7L635.2 184.8L631.9 182.6M642.5 184.3L642.6 180.0L643.9 175.7L641.5 171.5L642.1 167.2M642.1 167.2L639.8 166.4M596.3 271.9L594.9 276.8L594.3 281.9M596.3 271.9L593.4 269.9L590.3 268.1L587.6 265.7M587.6 265.7L583.7 267.3L581.0 270.6M594.3 281.9L590.1 284.9L585.1 286.4M585.1 286.4L583.2 281.8L579.0 279.1M581.0 270.6L580.9 275.1L579.0 279.1M693.8 130.3L699.6 133.1M693.8 130.3L692.7 126.2L693.7 122.5L695.0 118.8L696.8 115.2L696.8 114.3M703.6 115.2L701.7 113.8M703.6 115.2L704.1 119.3L704.0 123.5L703.7 127.7L704.3 131.9M704.3 131.9L699.6 133.1M678.1 118.3L677.9 117.4M687.5 130.0L693.8 130.3M677.9 117.4L681.7 116.6L685.4 115.2L688.4 114.4M706.2 132.2L710.7 131.8L713.8 128.4M706.2 132.2L704.3 131.9M715.1 118.3L713.0 123.2L713.8 128.4M715.1 118.3L711.3 117.1L707.4 116.3L703.6 115.2M695.5 149.8L695.6 145.4L698.0 141.6L698.2 137.2L699.6 133.1M696.5 150.3L700.1 149.0L703.8 148.5L707.6 149.0L711.5 149.9L715.0 148.2M706.2 132.2L707.1 135.9L708.9 139.1L711.7 141.7L714.5 144.4L715.0 148.2M690.2 170.6L689.6 170.0M690.2 170.6L693.9 168.4L695.8 164.6M695.5 149.8L690.5 150.9L685.4 151.0M696.0 150.2L695.8 153.8L697.3 157.4L696.6 161.0L695.8 164.6M689.6 170.0L689.4 166.1L686.7 162.7L686.5 158.8L685.0 155.1L685.4 151.0M680.2 141.3L679.6 145.2L679.5 149.1M679.5 149.1L685.4 151.0M642.2 194.3L646.1 193.5L649.7 195.3L653.4 195.2L657.2 195.7M642.2 194.3L638.5 198.0L636.6 202.9M636.8 203.0L640.5 204.9L644.8 203.3L648.8 203.8L652.4 206.0M657.2 195.7L654.5 198.7L654.1 202.6L652.4 206.0M534.9 197.9L530.2 195.7L526.7 191.7M534.9 197.9L537.7 196.6M526.7 191.7L526.2 187.7L528.9 184.7M537.7 196.6L536.2 192.2L535.9 187.6M535.9 187.6L532.0 187.0L528.9 184.7M602.6 169.3L601.0 165.4M602.6 169.3L601.2 173.5M601.0 165.4L596.7 165.8L592.8 164.3M595.7 176.2L595.8 176.2L599.6 175.5M601.2 173.5L599.6 175.5M770.1 188.4L765.0 189.5L761.5 193.5M770.1 188.4L772.4 181.8M771.7 178.6L772.4 181.8M760.5 193.4L761.5 193.5M760.5 193.4L758.9 190.2L758.5 186.4L755.6 184.0M761.7 173.1L764.9 175.0L768.9 175.5L771.5 178.4M761.7 173.1L756.9 175.4M755.6 184.0L755.6 179.6L756.9 175.4M760.5 193.4L756.5 196.2M756.5 196.2L752.8 195.8L749.7 193.4L746.0 192.9M755.6 184.0L751.5 186.0L749.1 189.8L746.0 192.9M715.1 118.3L717.0 116.4M713.2 107.3L713.6 109.1L714.8 112.9L717.0 116.4M938.5 467.0L938.1 465.8M939.2 459.4L938.1 465.8M939.2 459.4L941.3 459.0M901.8 320.7L902.4 325.2M902.4 325.2L905.9 327.1L909.4 328.8M903.2 315.0L907.5 315.2L910.4 311.3L914.6 311.3M914.6 311.3L917.1 314.5L918.5 318.2L918.4 322.6L921.1 325.7M909.4 328.8L913.4 328.3L916.9 325.6L921.1 325.7M933.1 306.2L928.9 306.2L924.8 305.0L920.5 306.9L916.4 305.4M928.1 326.5L925.7 327.1M916.4 305.4L914.6 311.3M925.7 327.1L921.1 325.7M954.1 329.5L951.1 332.5L951.1 336.8M929.5 327.1L931.1 331.1L935.4 333.3L937.7 336.7L939.2 340.8M951.1 336.8L947.6 337.9L944.4 339.9L941.0 341.3M939.2 340.8L941.0 341.3M874.0 319.5L876.0 323.2M876.0 323.2L872.4 327.0L868.9 330.9M868.9 330.9L866.3 328.1L862.7 326.5L859.9 323.8M918.9 296.5L918.5 291.7L915.7 287.7M918.9 296.5L917.2 300.4L915.8 304.4M915.8 304.4L911.9 302.4L908.8 298.9L904.2 298.1M910.8 288.1L907.6 292.0L903.7 295.3M910.8 288.1L915.7 287.7M903.7 295.3L904.2 298.1M916.4 305.4L915.8 304.4M927.0 294.2L929.4 297.0L932.9 299.1L933.9 303.0M927.0 294.2L923.2 296.3L918.9 296.5M898.5 306.0L901.1 301.9L904.2 298.1M907.3 280.2L902.4 280.2L898.5 277.2M907.3 280.2L907.7 284.8L910.8 288.1M898.5 277.2L897.0 278.1M898.6 291.6L903.7 295.3M857.2 430.9L856.5 429.6M857.2 430.9L858.4 434.4L857.6 438.1L857.2 441.8L859.8 445.3L858.8 449.0M856.5 429.6L853.9 425.7L849.5 424.1M849.5 424.1L847.5 427.3L848.3 431.1L847.4 434.6L845.4 437.7L844.4 441.1L844.6 444.8L842.8 447.9M844.3 450.2L847.8 448.3L851.6 450.8L855.1 448.4L858.8 449.0M842.8 447.9L844.1 450.0M843.1 465.0L842.6 461.2L842.2 457.4L844.8 453.9L844.3 450.2M843.1 465.0L840.4 467.3M827.6 457.6L831.5 457.2L833.8 453.6L837.0 452.0L840.8 451.5L844.1 450.0M827.6 457.6L827.3 459.4M840.4 467.3L836.7 466.9L833.3 468.6M833.3 468.6L832.4 468.0M827.3 459.4L829.6 463.8L832.4 468.0M816.9 420.3L821.0 420.9L822.7 425.5L826.8 426.2M816.9 420.3L819.9 417.8L824.4 418.5L827.5 416.3L830.0 412.7L833.5 411.4L837.4 410.6M837.4 410.6L840.6 412.6L843.4 415.0L844.5 418.8M826.8 426.2L830.4 424.9L834.1 423.7L837.4 421.8L840.9 420.2L844.5 418.8M827.3 459.4L823.7 461.0L820.3 462.9L816.2 462.9L812.4 464.0M832.4 468.0L828.1 467.9L825.1 471.2L821.1 471.9L817.5 473.6M817.5 473.6L815.1 470.9L813.2 467.9L812.4 464.3M758.9 152.6L759.9 154.6M758.9 152.6L761.1 148.1M761.1 148.1L765.2 147.5M761.4 167.6L760.8 169.3L761.7 173.1M771.5 178.4L773.1 176.9M813.5 241.1L814.4 239.7M813.5 241.1L816.1 244.9M771.7 178.6L774.1 178.2M780.9 187.8L778.0 187.1L775.8 183.5L772.4 181.8M905.4 253.0L904.4 256.4L904.2 260.0L901.2 262.7L901.5 266.5M905.4 253.0L906.9 252.7M911.9 260.9L911.7 261.1L909.3 264.4L908.9 268.7M908.9 268.7L902.4 268.4M902.4 268.4L901.5 266.5M894.4 263.6L897.6 265.7L901.5 266.5M895.4 249.9L900.7 250.4L905.4 253.0M915.0 273.2L911.3 271.7L908.9 268.7M915.0 273.2L921.2 273.6M921.2 273.6L922.3 272.1M907.3 280.2L910.2 275.7L915.0 273.2M898.5 277.2L900.7 273.0L902.4 268.4M926.8 291.4L929.6 288.0L932.0 284.2M926.8 291.4L924.2 288.9L920.9 287.6L917.7 286.2M932.0 284.2L929.2 281.2L925.7 279.0L922.0 277.2M917.7 286.2L920.3 282.0L922.0 277.2M927.0 294.2L926.8 291.4M938.2 284.0L932.0 284.2M915.7 287.7L917.7 286.2M921.2 273.6L922.0 277.2M976.9 300.6L979.1 294.8M976.9 300.6L973.2 300.0L970.2 297.0L966.2 297.2M979.1 294.8L976.3 290.8L972.4 288.5L968.0 286.8M966.2 297.2L966.8 292.1L967.7 286.9M983.3 312.9L980.3 309.3L980.2 304.1L976.9 300.6M987.5 292.8L983.6 295.2L979.1 294.8M960.1 307.0L963.4 304.5L965.4 301.3L966.2 297.2M969.4 286.1L968.0 286.8M961.9 284.8L967.7 286.9M974.2 374.8L971.3 370.7M974.2 374.8L977.4 377.2L981.2 378.5M971.3 370.7L975.3 369.6L979.1 368.1L982.6 366.2L986.1 364.0L989.7 362.2M981.2 378.5L985.3 377.2L988.6 374.5M988.6 374.5L987.6 370.3L989.2 366.3L989.7 362.2M785.6 450.7L789.4 452.9L793.7 452.8L797.8 453.4L801.8 454.3M785.6 450.7L785.4 444.5M785.4 444.5L790.2 442.9L795.3 443.2M795.3 443.2L798.5 445.0L800.8 448.0L804.1 449.6M804.1 449.6L805.5 452.0M801.8 454.3L805.5 452.0M770.6 336.0L771.5 339.4L772.6 342.9L772.9 346.4L772.6 350.1L773.1 353.6M770.6 336.0L776.2 336.9M788.4 350.0L785.7 347.6L784.7 343.6L779.9 343.2L779.3 338.9L776.2 336.9M788.4 350.0L786.3 353.9L784.7 358.0M784.7 358.0L779.3 360.5M773.1 353.6L776.2 357.1L779.3 360.5M773.1 353.6L768.9 355.6L764.6 357.5M779.3 360.5L776.8 365.5M776.8 365.5L772.7 365.4L769.0 367.1M764.6 357.5L766.6 360.4L768.2 363.6L769.0 367.1M735.0 294.0L735.3 298.8L736.0 303.6M746.0 290.2L746.7 294.3L750.8 296.3L752.0 300.1M736.0 303.6L737.2 304.7M737.2 304.7L742.4 305.4L747.6 306.0M752.0 300.1L748.9 302.4L747.6 306.0M761.5 290.4L762.2 294.1L762.8 297.8L763.9 301.4M752.0 300.1L755.9 300.4L759.7 302.4L763.9 301.4M798.4 290.3L796.7 293.5L794.5 296.4L793.3 299.9M786.0 287.1L789.6 284.7L792.0 281.2M786.0 287.1L788.5 290.7L789.8 294.6L789.3 299.0M789.3 299.0L793.3 299.9M775.7 288.5L775.1 292.3M763.9 301.4L765.1 302.3M775.1 292.3L773.2 295.5L769.2 296.4L767.0 299.3L765.1 302.3M804.0 274.7L802.7 271.2L803.6 267.1L801.2 263.8M813.4 260.4L809.4 261.3L805.8 263.7L801.4 263.1M813.5 241.1L809.7 239.9L805.9 240.6M813.0 257.0L809.2 255.5L805.3 254.2L803.2 249.7L798.9 249.1M798.5 247.6L798.9 249.1M801.4 263.1L799.1 259.6L797.0 255.9M798.9 249.1L799.0 252.8L797.0 255.9M766.7 202.8L764.5 200.0L762.1 197.2L761.5 193.5M766.7 202.8L770.9 204.3M770.1 188.4L772.1 192.6L774.0 196.8L775.4 201.2M770.9 204.3L775.4 201.2M782.3 200.7L781.6 196.5L783.6 192.2L782.7 190.0M782.3 200.7L781.6 201.4M781.6 201.4L775.4 201.2M770.4 270.9L768.7 266.8M757.1 263.8L759.9 263.0M768.7 266.8L765.5 264.5M759.9 263.0L765.5 264.5M751.6 247.8L755.4 248.3L759.1 247.6M759.9 263.0L758.9 259.2L758.2 255.4L758.4 251.5L759.1 247.6M789.8 239.9L783.9 238.7M783.9 238.7L783.2 239.6M798.5 247.6L795.5 249.9L791.9 250.6L788.4 251.5L784.5 251.3L781.3 253.3M783.2 239.6L782.5 244.2L783.1 248.9L781.3 253.3M632.8 158.7L635.8 156.0L636.8 151.6L639.8 148.9L642.8 146.2M632.8 158.7L633.6 161.3M642.8 146.2L645.2 149.5L646.3 153.6L648.0 157.2L650.5 160.4L653.2 163.5M642.1 167.2L646.9 167.9L651.3 166.0M651.3 166.0L653.2 163.5M642.8 146.2L643.8 143.4M643.8 143.4L646.6 146.6L649.9 148.8L653.4 150.8L657.9 151.1L661.8 152.2L664.7 155.4M653.2 163.5L656.7 162.5L659.2 159.9L661.6 157.1L664.7 155.4M643.8 143.4L643.3 137.8M643.3 137.8L647.5 136.4L652.1 137.9L656.3 136.6L660.5 136.0M660.5 136.0L661.4 139.9L664.9 142.8L665.4 146.8L667.3 150.3L668.0 154.3M664.7 155.4L668.0 154.3M689.6 170.0L685.2 170.3L681.0 169.2L676.9 168.0L672.8 166.4M679.5 149.1L676.3 151.7L672.1 152.2L668.7 154.5M672.8 166.4L671.3 162.5L668.7 159.0L668.7 154.5M670.3 131.3L666.4 133.9L661.7 133.8M661.7 133.8L660.5 136.0M642.5 184.3L643.7 185.6M632.2 203.5L636.6 202.9M642.2 194.3L642.7 190.0L643.7 185.8M651.3 166.0L653.4 169.5L655.8 172.9L656.9 176.9M643.7 185.6L647.8 184.6L649.9 180.6L654.4 180.4L656.9 176.9M671.4 172.8L668.0 176.1L663.2 176.4L659.2 178.4M671.4 172.8L672.8 166.4M656.9 176.9L659.2 178.4M743.8 243.6L746.6 241.5L748.1 237.9L750.6 235.3L754.0 233.7L756.9 231.6M741.2 241.6L742.2 238.1L744.5 235.2L746.6 232.2L746.1 228.0L748.7 225.3M748.7 225.3L754.1 223.2M756.9 231.6L755.8 227.3L754.1 223.2M756.5 196.2L755.0 200.6L755.7 205.2M746.0 192.9L743.8 193.3M743.8 193.3L745.2 197.2L748.8 199.6L749.2 204.1L752.7 206.6M752.7 206.6L755.7 205.2M766.7 202.8L761.8 203.2L757.6 205.7M757.6 205.7L755.7 205.2M748.7 225.3L744.6 224.3L740.0 225.5L736.0 223.4M736.0 223.4L735.9 227.3L735.0 231.1L731.8 234.3L732.1 238.4M546.1 448.2L545.8 450.5M546.1 448.2L550.0 445.9L554.5 444.7M554.5 444.7L559.1 448.1M559.1 448.1L556.9 451.1L554.0 453.8L552.8 457.5M552.8 457.5L550.0 453.3L545.8 450.5M546.1 448.2L542.4 445.4L540.6 441.0L537.3 437.8M537.3 437.8L535.7 439.3M540.1 455.1L541.8 452.0L545.8 450.5M520.4 588.8L520.2 589.8M520.4 588.8L522.6 585.2L526.7 584.0M529.2 585.5L526.7 584.0M593.7 429.0L594.2 424.4M593.7 429.0L595.7 434.3M594.2 424.4L597.4 422.8L600.2 420.6M595.7 434.3L599.9 435.9M606.8 424.5L604.4 421.1L600.2 420.6M606.8 424.5L610.4 427.6L611.0 432.3M599.9 435.9L603.3 434.0L606.8 432.0L611.0 432.3M591.8 437.1L592.9 442.0L590.7 446.4M591.8 437.1L587.3 436.9L582.8 437.6M590.7 446.4L586.0 444.9L581.1 444.1M582.8 437.6L581.1 444.1M593.3 529.4L591.5 534.7M593.3 529.4L597.1 526.5M597.1 526.5L597.9 526.4M588.7 413.6L589.6 420.0M588.7 413.6L584.0 412.7L580.2 409.8M589.6 420.0L585.7 423.6L580.5 424.4M580.2 409.8L579.6 414.7L578.1 419.4M580.5 424.4L578.1 419.4M486.3 383.7L490.4 384.3L493.6 387.0L497.4 388.3M486.3 383.7L484.3 387.4L482.9 391.4M482.9 391.4L483.2 392.9M497.4 388.3L495.2 391.4L495.8 395.4L493.9 398.6M493.9 398.6L493.7 398.7M476.6 389.6L479.7 389.1L482.9 391.4M475.2 388.8L473.3 386.4L473.2 382.6L474.4 378.5L472.4 375.1M486.3 383.7L485.9 382.6M485.9 382.6L482.6 380.5L479.6 378.1L476.5 375.7L472.4 375.1M293.3 359.6L294.9 363.9L295.5 368.3L294.6 372.8M304.5 376.2L301.2 378.2M301.2 378.2L297.1 376.4L294.6 372.8M284.9 332.3L289.6 332.8L293.8 330.3L298.4 330.5M302.4 339.7L302.0 334.6L298.7 330.7M286.3 346.1L285.6 345.7M316.8 325.8L315.1 322.6M298.7 330.7L301.8 328.8L305.0 326.9L308.4 325.6L311.4 323.4L315.1 322.6M249.9 311.1L252.4 307.8L256.9 308.1L259.2 304.6L262.8 303.4M268.5 308.7L268.9 306.4M268.9 306.4L262.8 303.4M255.3 296.0L259.1 297.1M247.8 310.1L245.5 307.1L245.0 303.3L244.8 302.8M259.1 297.1L259.6 301.1L262.8 303.4M259.1 297.1L261.7 294.0L263.7 290.6L263.2 285.9L266.3 283.0M271.7 270.8L271.5 275.3L270.2 279.5L267.2 283.0M267.2 283.0L266.3 283.0M314.6 413.5L313.8 417.3L312.0 418.5M314.6 413.5L317.0 416.7L317.5 417.8M303.2 408.9L307.7 407.3L312.1 405.2M314.6 413.5L314.5 408.3M312.1 405.2L314.5 408.3M380.7 415.9L379.9 414.6L381.9 410.4L380.7 406.7L379.7 402.9M366.0 408.2L369.7 407.6L372.3 404.1L376.1 403.8L379.7 402.9M366.0 408.2L365.1 411.9L364.9 415.8M373.0 418.2L368.9 417.9L364.9 415.8M309.9 398.3L312.2 404.4M309.9 398.3L311.9 394.4L314.0 390.6L316.7 387.1M312.2 404.4L315.8 400.7L320.8 399.1M320.8 399.1L322.9 395.1L324.1 390.8L326.3 386.9M316.7 387.1L320.3 387.0L323.6 385.6M323.6 385.6L326.2 386.5M306.3 376.8L309.4 378.9L310.8 382.7L313.0 385.7L316.7 387.1M298.2 385.9L300.2 382.2L301.2 378.2M298.2 385.9L301.7 388.5L303.4 392.7L307.9 394.4L309.9 398.3M318.6 376.8L321.6 380.9L323.6 385.6M334.6 393.5L332.7 390.2L328.4 389.9L326.3 386.9M334.6 393.5L336.3 389.5L341.3 388.7L342.1 383.7L346.0 381.8M335.2 374.6L339.2 376.3L342.3 379.4L346.0 381.8M335.2 374.6L333.5 378.0L330.3 380.2L329.0 383.9L326.2 386.5M332.5 420.5L332.5 420.5M314.5 408.3L318.8 409.6M318.8 409.6L321.7 411.5L324.9 413.1L327.4 415.6L329.0 416.4M330.5 417.1L330.6 417.2L332.5 420.5M345.0 420.9L341.1 422.0L337.3 421.3L333.6 419.7M345.0 420.9L345.1 425.1L346.6 428.7M332.5 420.5L333.6 419.7M338.5 344.2L340.3 347.6L339.8 351.4M327.0 350.1L328.7 351.1M328.7 351.1L332.4 352.3L336.1 350.1L339.8 351.4M328.7 351.1L329.2 355.3L327.1 359.2L328.8 363.4L327.4 367.4M351.0 341.7L347.5 343.4L345.4 346.5L343.3 349.7L340.1 351.7M335.2 374.6L333.4 369.6M327.4 367.4L333.4 369.6M348.7 417.3L345.0 420.9M348.7 417.3L352.3 417.4L356.0 417.0L359.2 419.2L362.7 419.8M362.7 419.8L363.1 421.5M520.4 588.8L517.5 586.4L514.0 585.1M514.0 585.1L510.3 586.5L506.7 588.1L502.6 587.2M503.2 589.6L502.6 587.2M286.8 159.6L286.7 162.1L286.0 166.4L285.2 170.7M285.2 170.7L289.9 172.5L293.2 176.3M293.2 176.3L296.7 175.3L300.6 175.7L303.7 173.5M303.7 173.5L301.0 170.5L299.9 166.9L298.2 163.5L298.1 160.6M285.2 170.7L284.4 171.6M478.2 231.0L483.3 232.1L486.7 236.0M478.2 231.0L477.0 235.5L472.8 238.4L472.1 243.1M472.1 243.1L475.4 246.0L476.8 250.3M476.8 250.3L480.7 248.4L485.3 247.8L488.9 245.2M486.7 236.0L488.7 240.4L488.9 245.2M504.0 251.7L500.7 249.5L496.9 250.1L493.4 249.3M511.7 238.1L509.2 235.1L506.5 232.2M493.4 249.3L491.1 246.1M491.1 246.1L493.6 242.7L496.9 240.2L501.0 238.6L502.8 234.3L506.5 232.2M478.2 231.0L477.5 228.1M477.5 228.1L480.3 224.4L483.4 220.9M486.7 236.0L490.7 235.2L493.5 232.3L496.6 230.0M496.6 230.0L493.2 227.8L489.3 226.4L486.0 224.2L483.4 220.9M465.1 223.6L467.2 219.5L468.8 215.2L471.6 211.5M465.1 223.6L469.2 225.3L473.3 226.9L477.5 228.1M471.6 211.5L474.0 214.5L477.7 215.3L480.6 217.4L484.0 218.6M483.4 220.9L484.0 218.6M544.3 282.9L548.4 282.8L552.0 285.4L556.1 285.3M544.3 282.9L544.3 278.4L546.0 274.5L548.2 270.8L550.7 267.3M550.7 267.3L553.6 267.5M553.6 267.5L555.8 271.3L556.9 275.5L558.6 279.5M558.6 279.5L556.1 285.3M522.6 287.2L526.2 287.0L529.7 286.6L533.3 286.6M522.6 287.2L519.9 281.9M519.9 281.9L523.5 279.0M533.3 286.6L533.5 282.1L536.8 278.9M536.8 278.9L534.8 275.5M523.5 279.0L527.5 278.5L531.5 278.0L534.8 275.5M549.6 266.8L550.7 267.3M549.6 266.8L545.6 267.0L543.2 271.1L539.8 272.8L535.6 272.7M544.2 283.0L540.6 280.8L536.8 278.9M535.6 272.7L534.8 275.5M551.1 298.6L553.6 295.0L557.9 293.9M551.1 298.6L547.5 297.2L543.6 297.0M557.9 293.9L558.1 289.3L556.1 285.3M544.2 283.0L543.4 286.6L540.8 289.6L541.0 293.4M543.6 297.0L541.0 293.4M533.3 286.6L534.9 290.4L538.2 292.8M538.2 292.8L541.0 293.4M522.8 290.3L522.6 287.2M522.8 290.3L519.2 292.9L516.6 296.7L512.9 299.1M511.9 279.4L510.6 282.9L508.0 285.4L504.4 287.1L503.1 290.6M512.3 279.3L516.0 280.9L519.9 281.9M512.9 299.1L509.0 297.0L506.7 293.0L503.1 290.6M494.2 278.6L494.6 282.5L494.3 286.4L496.0 290.1M494.2 278.6L496.6 275.3L500.2 274.1L503.9 273.0M496.0 290.1L501.5 291.1M503.1 290.6L501.5 291.1M494.2 278.6L489.2 276.9L486.1 272.7M486.1 272.7L485.5 276.7L486.2 280.7L484.1 284.5L485.3 288.6M496.0 290.1L491.2 291.7M485.3 288.6L491.2 291.7M462.2 359.9L466.6 359.2L469.8 363.4L474.3 362.8M462.2 359.9L457.1 361.0L453.4 364.6M453.4 364.6L453.4 366.5M453.4 366.5L454.9 370.4L457.5 373.4L460.8 375.7L463.9 378.2M463.9 378.2L468.3 377.3L472.1 374.8M472.1 374.8L474.7 370.7L475.6 365.9M474.3 362.8L475.6 365.9M459.9 347.8L459.7 352.0L462.4 355.7L462.2 359.9M459.9 347.8L462.9 344.9M462.9 344.9L465.5 347.6L469.6 348.2L472.4 350.6L475.1 353.2M475.1 353.2L473.6 357.9L474.3 362.8M459.9 347.8L455.5 349.2L451.1 350.7M448.8 358.3L450.5 361.8L453.4 364.6M448.8 358.3L448.2 353.2M448.2 353.2L451.1 350.7M448.8 358.3L445.5 360.9L442.3 363.7L437.9 364.3M453.4 366.5L451.4 369.9L448.1 371.6L444.8 373.2M444.8 373.2L443.4 369.5L441.2 366.5L437.9 364.3M423.7 386.6L418.5 387.0L413.5 385.8M423.7 386.6L427.5 384.9L428.1 380.1L431.4 378.0M418.1 371.8L414.6 374.7L413.0 379.0M418.1 371.8L422.5 372.7L426.2 375.7L430.6 376.4M413.5 385.8L413.0 379.0M431.4 378.0L430.6 376.4M463.9 378.2L463.1 379.5M463.1 379.5L464.0 382.2M440.3 385.0L440.4 384.9L438.8 380.8M457.8 383.6L454.5 383.1L451.3 379.8L446.5 380.6L443.2 377.6M438.8 380.8L443.2 377.6M423.7 386.6L424.2 388.1M431.4 378.0L435.5 378.5L438.8 380.8M463.1 379.5L459.9 382.6M444.8 373.2L443.2 377.6M448.2 353.2L444.1 352.8L441.6 349.0L437.6 348.5L434.2 346.5M434.2 346.5L432.6 353.2M437.9 364.3L433.8 363.7M432.6 353.2L434.4 356.5L431.8 360.4L433.8 363.7M430.6 376.4L431.3 372.6L431.9 368.7L432.6 364.9M433.8 363.7L432.6 364.9M388.3 299.5L389.0 305.0M405.9 307.2L401.6 307.7L397.7 309.5M405.9 306.6L405.4 302.9L401.9 300.7L400.7 297.4L399.9 293.9M389.0 305.0L392.7 308.4L397.7 309.5M385.2 363.3L386.7 363.6M385.2 363.3L379.0 366.3M386.7 363.6L388.0 367.4L387.5 371.1L385.9 374.6M379.0 366.3L378.7 371.0L377.1 375.4L376.5 380.0M385.9 374.6L383.9 377.7L380.6 379.3M380.6 379.3L376.5 380.0M400.5 371.5L400.0 366.7M400.5 371.5L398.5 375.4L396.1 379.1M400.0 366.7L395.5 365.8L391.1 365.0L386.8 363.6M396.1 379.1L392.4 378.4L389.5 375.6L385.9 374.6M395.7 389.4L391.8 388.7L389.4 385.7L386.9 382.9L382.8 382.5L380.6 379.3M395.7 389.4L395.9 384.2L396.1 379.1M405.9 306.6L406.7 302.8L409.9 300.7L411.0 297.1L414.1 294.9M400.6 286.5L405.7 285.3L410.8 286.4M414.1 294.9L412.1 290.8L410.8 286.4M416.0 270.4L417.9 274.2L417.9 278.1L416.9 282.0M416.9 282.0L414.3 284.9L410.8 286.4M348.7 417.3L348.6 415.3M348.6 415.3L347.8 410.2L344.3 406.4M333.6 419.7L334.0 415.5L334.4 411.2L334.9 407.0M344.3 406.4L339.5 405.4L334.9 407.0M334.6 393.5L334.9 395.4M320.8 399.1L324.8 399.7L328.9 398.8L332.8 400.4M334.9 395.4L332.8 400.4M318.8 409.6L322.9 409.8L326.6 408.7L330.3 407.2L334.1 406.0M332.8 400.4L334.1 406.0M334.9 407.0L334.1 406.0M293.2 176.3L294.2 181.2M294.2 181.2L292.1 184.5L287.9 185.6L287.6 186.1M303.7 173.5L306.2 174.7M294.2 181.2L297.3 183.6L300.4 186.0M306.2 174.7L305.7 179.2L303.7 183.0L300.4 186.0M324.8 165.6L324.3 162.1L324.0 158.5L323.4 155.0L322.1 151.7M324.8 165.6L321.2 165.6L317.8 167.3L314.1 166.7M314.1 166.7L312.3 163.3M312.3 163.3L314.9 160.2L316.6 156.8L317.0 152.7M317.0 152.7L322.1 151.7M326.9 179.7L327.7 175.7L329.3 171.7L328.1 167.5M325.2 183.0L320.5 182.2L317.2 178.2L312.5 177.3M328.1 167.5L324.8 165.6M312.5 177.3L310.3 174.6M310.3 174.6L312.3 170.7L314.1 166.7M306.4 158.8L309.1 160.5L312.3 163.3M306.2 174.7L310.3 174.6M312.2 150.4L313.4 150.5L317.0 152.7M329.0 143.8L325.8 148.0L322.1 151.7M329.0 143.8L328.2 142.8M335.8 154.2L335.6 158.6L334.1 162.6L331.6 166.1M335.8 154.2L338.6 156.6L341.9 157.8L345.0 159.6L349.0 159.1L351.9 161.1M331.6 166.1L334.6 168.7L338.1 169.3L341.9 169.0L345.3 170.3M351.9 161.1L350.5 164.8L348.9 168.2L345.3 170.3M328.1 167.5L331.6 166.1M332.0 144.2L329.0 143.8M332.0 144.2L334.6 147.1L335.9 150.4L335.8 154.2M345.7 176.0L345.3 170.3M398.8 187.5L395.2 187.9L391.8 186.6M398.8 187.5L403.6 186.6L407.7 183.9M391.8 186.6L392.1 180.8M407.7 183.9L407.8 179.3L405.0 175.3L405.1 170.7M392.1 180.8L396.3 179.4L397.8 174.7L402.1 173.5L405.1 170.7M418.3 175.4L419.6 179.2L419.6 183.2M418.3 175.4L415.4 172.4L411.0 172.4L407.8 169.9M419.6 183.2L415.5 184.4L411.3 185.2M411.3 185.2L407.7 183.9M407.8 169.9L405.2 170.5M346.6 141.1L347.4 144.5L350.4 147.0L352.0 150.5L353.6 154.1L356.8 156.5M338.1 141.8L336.6 143.3L332.0 144.2M351.9 161.1L355.6 159.0M355.6 159.0L356.8 156.5M314.8 269.0L316.6 270.1M294.9 282.0L296.4 284.9M316.6 270.1L318.3 273.9L319.9 277.8L320.8 281.9M320.8 281.9L315.4 284.5M315.4 284.5L311.6 284.9L307.8 284.4L304.1 286.4L300.3 286.0L296.4 284.9M281.7 321.7L283.8 318.2L286.4 314.9M298.4 330.5L296.8 326.7L295.4 322.9L296.4 318.6M286.4 314.9L289.4 316.8L293.6 315.8L296.4 318.6M325.9 294.4L325.4 290.8L326.7 287.4M325.9 294.4L322.4 296.7L319.2 299.3L316.9 302.9M326.7 287.4L326.0 284.7M326.0 284.7L320.8 281.9M315.4 284.5L312.5 287.7L312.6 292.5L308.4 294.9L307.2 299.0M316.9 302.9L314.3 300.1L310.1 301.2L307.2 299.0M295.7 262.0L294.4 258.1L293.6 253.9L290.5 250.8M304.0 252.1L299.3 249.6L296.8 246.1M290.5 250.8L291.4 247.9M309.0 251.2L309.6 250.4M309.6 250.4L313.6 249.0L317.5 250.6M316.6 270.1L319.9 268.1L320.8 264.3L323.3 261.7M317.5 250.6L319.8 254.1L321.9 257.8L323.3 261.7M455.8 240.9L459.1 243.2L463.1 242.9L466.7 243.8M455.7 240.6L457.3 237.0L460.0 234.5L462.8 231.9M462.8 231.9L464.5 236.2L468.3 239.1L470.8 242.9M466.7 243.8L470.8 242.9M463.4 224.5L464.2 228.3L462.8 231.9M463.4 224.5L459.4 226.2L456.6 229.8L452.5 231.3M452.5 231.3L451.8 236.1M451.8 236.1L455.7 240.6M463.7 223.8L465.1 223.6M472.1 243.1L470.8 242.9M438.4 236.1L442.8 235.0L447.3 235.3L451.8 236.1M438.4 236.1L440.9 241.6M455.8 240.9L452.8 246.7M452.8 246.7L448.4 246.0L444.5 244.1L440.9 241.6M426.0 267.4L429.9 267.8L433.8 267.4L437.6 266.7M437.6 266.7L439.4 262.9L440.1 258.8L439.9 254.6M431.7 252.9L435.6 253.1L439.4 254.2M486.1 272.7L485.6 271.8M500.5 265.1L496.8 264.1L493.1 264.5M485.6 271.8L488.3 267.0L493.1 264.5M493.4 249.3L491.9 252.5L491.9 256.1L490.9 259.5M493.1 264.5L490.9 259.5M396.9 204.0L399.2 206.9L400.9 210.3M396.9 204.0L397.6 201.5M397.6 201.5L402.5 201.2L406.7 198.4M404.0 210.1L407.0 207.3L409.8 204.3L410.7 200.1M404.0 210.1L400.9 210.3M406.7 198.4L410.0 199.4M410.0 199.4L410.7 200.1M386.2 208.6L390.3 208.2L392.7 204.0L396.9 204.0M386.2 208.6L388.7 212.3L389.5 217.0L392.7 220.2M393.2 220.4L395.7 217.0L397.5 213.1L400.9 210.3M386.2 208.6L382.0 206.0M389.0 189.3L390.2 193.1L392.7 195.8L395.5 198.4L397.6 201.5M382.0 206.0L383.7 202.9L385.2 199.7L385.0 195.8L387.1 192.8L388.5 189.5M398.8 187.5L402.7 190.3L405.2 193.9L406.7 198.4M389.0 189.3L391.8 186.6M419.5 202.7L415.4 200.6L410.7 200.1M419.5 202.7L420.2 205.7M420.2 205.7L419.9 207.6M419.9 207.6L419.2 209.1M409.0 215.0L413.1 214.2L415.3 210.3L419.2 209.1M409.0 215.0L404.0 210.1M411.3 185.2L412.2 188.9L409.9 192.2L408.7 195.7L410.0 199.4M419.5 202.7L422.9 198.4M422.9 198.4L422.6 194.0L424.1 189.4L422.4 185.0M422.4 185.0L419.6 183.2M369.4 195.6L372.1 198.5L374.5 201.8L378.7 203.1L381.3 206.2M369.4 195.6L366.6 198.6L362.9 200.5L360.2 203.5L356.5 205.4M356.5 205.4L360.1 208.1L364.4 209.4L368.7 210.7M368.7 210.7L372.7 209.3L376.8 208.1L380.8 206.6M372.2 185.4L376.1 187.4L380.6 186.7L384.2 189.6L388.5 189.5M372.2 185.4L371.8 189.0L370.0 192.1L369.4 195.6M377.0 221.0L371.9 223.2M377.0 221.0L378.6 217.6L379.3 213.9L378.3 209.8L380.8 206.6M371.9 223.2L372.0 218.7L368.3 215.2L368.7 210.7M384.7 222.6L380.8 222.3L377.0 221.0M323.6 195.2L323.4 199.4M323.6 195.2L320.3 192.5L316.5 191.2L312.2 191.7L308.5 190.2M323.4 199.4L321.8 201.6M321.8 201.6L319.1 205.0L315.5 207.2L311.3 208.2M311.3 208.2L309.1 204.1L305.7 201.5L301.6 199.7M308.5 190.2L301.7 191.9M301.6 199.7L300.0 194.5M300.0 194.5L301.7 191.9M326.3 190.4L323.6 195.2M351.8 206.7L349.0 211.0M349.0 211.0L345.0 211.3M345.0 211.3L341.2 210.9L338.3 208.8L336.3 205.1L332.9 204.0L329.3 203.3L326.6 200.9L323.4 199.4M312.5 177.3L310.2 181.3L310.8 186.2L308.5 190.2M297.0 206.4L297.5 205.8L299.3 202.6L301.6 199.7M301.3 215.2L302.4 215.1L305.9 213.4L309.5 212.3M310.4 211.5L309.5 212.3M310.4 211.5L311.3 208.2M300.4 186.0L301.7 191.9M291.3 194.5L292.5 194.3L296.2 195.1L300.0 194.5M431.1 182.3L426.7 183.6L422.4 185.0M431.1 182.3L428.9 178.3L429.4 173.9L430.4 169.3L428.2 165.3M418.3 175.4L422.3 172.9L424.3 168.9L426.3 164.8M426.3 164.8L428.2 165.3M442.3 150.1L442.2 155.3M447.8 161.5L446.2 158.8M445.9 158.2L445.6 157.8L442.2 155.3M447.8 161.5L450.2 159.6M399.4 236.4L402.2 234.1L405.8 233.2L408.8 231.0M393.3 220.5L398.5 222.0M398.5 222.0L402.9 223.9L406.2 227.0L408.8 231.0M409.0 215.0L408.7 216.9M398.5 222.0L401.7 220.0L405.9 219.7L408.7 216.9M419.2 209.1L418.1 213.5L419.4 217.8M408.7 216.9L411.7 219.8L412.8 223.7M419.4 217.8L415.8 220.5L412.8 223.7M408.8 231.0L412.1 231.2M412.8 223.7L412.9 227.5L412.1 231.2M406.1 247.8L409.0 244.6L411.4 241.1L411.2 236.2L414.4 233.2M414.4 233.2L412.1 231.2M463.7 223.8L458.5 219.4M452.5 231.3L450.6 227.9L447.3 225.8M447.3 225.8L450.8 223.2L454.9 221.7L458.5 219.4M420.2 205.7L424.2 206.8L428.4 206.9L432.6 207.1L436.2 209.7M419.9 207.6L422.1 210.6L424.0 213.9L426.7 216.3L429.3 218.8L433.0 220.2M436.2 209.7L435.6 213.3L437.1 217.1L435.3 220.6M435.3 220.6L433.0 220.2M419.4 217.8L424.5 222.1M433.0 220.2L428.7 220.8L424.5 222.1M447.3 225.8L443.0 224.0L438.3 224.7M449.2 213.7L453.0 215.1L456.9 216.2M449.2 213.7L446.6 216.4L444.0 219.1L440.8 221.2L438.1 223.7M458.5 219.4L456.9 216.2M438.1 223.7L438.3 224.7M471.6 211.5L470.1 208.2L470.5 204.5M456.9 216.2L457.2 212.6L460.0 209.9L460.5 206.3L461.9 203.1M461.9 203.1L466.2 204.1L470.5 204.5M490.1 208.7L486.1 205.7L484.4 200.9M490.1 208.7L489.0 212.5M484.4 200.9L480.8 201.3L477.4 203.5L473.6 202.5M489.0 212.5L486.7 215.7L484.0 218.6M473.6 202.5L470.5 204.5M480.0 185.5L482.4 188.8L482.6 193.2L485.5 196.3M480.0 185.5L475.6 187.7L470.7 188.1M485.5 196.3L484.4 200.9M473.6 202.5L471.4 199.2L470.7 195.6L472.6 191.5L470.7 188.1M436.2 209.7L437.8 205.9L441.1 203.3L443.2 199.9M449.2 213.7L446.3 210.9L447.9 206.2L445.8 203.1L443.5 200.0M435.3 220.6L438.1 223.7M422.9 198.4L426.5 196.6L430.3 198.9L433.9 197.9L437.6 198.3L441.2 197.3M443.2 199.9L441.2 197.3M461.9 203.1L457.4 198.1M443.5 200.0L446.9 199.1L450.4 198.8L454.0 199.0L457.4 198.1M431.1 182.3L434.6 182.7L438.0 183.8M438.0 183.8L440.3 186.9M441.2 197.3L442.0 192.0L440.3 186.9M470.7 188.1L466.6 186.4L462.4 185.4M462.4 185.4L461.4 185.7M457.4 198.1L457.2 193.5L459.4 189.6L461.4 185.7M533.6 212.1L529.5 214.8L525.4 217.5M533.6 212.1L538.1 215.5M530.1 224.4L533.2 221.8L536.2 219.1L538.1 215.5M530.1 224.4L525.7 223.5M525.4 217.5L525.7 223.5M521.2 236.9L523.7 233.0L521.9 228.0L524.6 224.1M524.3 237.8L528.1 236.1L529.4 231.5L533.5 230.1M530.1 224.4L533.5 230.1M524.6 224.1L525.7 223.5M630.1 206.8L632.2 203.5M630.1 206.8L626.5 209.6L622.0 209.6L617.8 210.3L613.7 211.7M625.4 198.1L621.8 196.7L618.0 196.4L614.2 196.4M613.7 211.7L613.4 207.8L614.7 204.1L615.4 200.3L614.2 196.4M644.9 285.2L647.5 281.3M644.9 285.2L638.3 283.3M650.4 267.9L645.6 267.3L642.0 264.2L638.0 261.9M638.0 261.9L636.1 265.5L635.0 269.4L632.6 272.7M638.3 283.3L635.1 280.5L635.5 275.7L632.6 272.7M644.2 301.6L640.8 299.3L636.3 300.5L632.5 299.2L628.8 297.6L625.6 294.6L621.3 295.1M644.2 301.6L647.0 298.0L648.2 293.7M644.9 285.2L647.3 289.1M648.2 293.7L647.3 289.1M638.3 283.3L634.0 284.3L630.6 286.7L629.0 291.7L624.8 292.9L621.3 295.1M608.8 310.4L604.2 311.2L600.3 308.8M619.1 302.1L619.3 295.7M606.5 290.5L604.3 293.7L600.9 295.6M606.5 290.5L610.4 290.0L614.3 290.4M600.3 308.8L599.0 304.3L602.1 300.0L600.9 295.6M614.3 290.4L615.9 294.0L619.3 295.7M644.2 301.6L644.0 307.0M644.0 307.0L640.1 309.3L637.4 312.9M621.3 295.1L619.3 295.7M596.3 271.9L601.1 269.8M587.6 265.7L587.0 260.8M587.0 260.8L591.1 256.5M602.4 258.9L601.6 262.5L600.6 266.1L601.1 269.8M602.4 258.9L599.0 256.9L595.2 255.7M595.2 255.7L591.1 256.5M581.0 270.6L576.9 269.9L573.9 266.9L570.2 265.3M587.0 260.8L583.2 259.8L580.7 256.8M580.7 256.8L578.0 260.7L574.6 263.6L570.2 265.3M569.4 278.9L568.0 274.5L567.8 269.9L568.5 265.3M569.4 278.9L565.8 279.1L562.2 279.8L558.6 279.5M553.6 267.5L557.5 264.1L562.0 261.4M562.0 261.4L565.4 263.0L568.5 265.3M579.0 279.1L574.5 280.3L570.0 279.3M568.5 265.3L570.2 265.3M566.7 319.8L562.1 320.1L557.6 319.0M566.7 319.8L571.9 316.9M551.1 298.6L550.0 303.3L552.7 307.6L552.4 312.2M557.9 293.9L563.8 295.6M552.4 312.2L555.9 314.9L557.6 319.0M563.8 295.6L564.4 299.5L565.9 303.0L567.5 306.4L569.3 309.8L570.9 313.2L571.9 316.9M570.0 279.3L569.3 283.7L568.8 288.1L568.9 292.5M563.8 295.6L568.9 292.5M557.5 230.0L556.4 233.7L553.6 236.5L552.3 240.0L550.7 243.4M557.5 230.0L563.1 228.5M564.7 230.4L564.8 234.2L565.0 238.1L561.8 241.5L562.0 245.4L562.0 249.3M564.7 230.4L563.1 228.5M562.0 249.3L559.0 246.3L555.3 244.6L551.1 244.0M543.5 258.4L546.9 262.4L549.6 266.8M543.5 258.4L544.9 254.5L546.7 250.9L549.2 247.6L551.1 244.0M563.1 250.3L561.9 253.9L563.5 257.8L562.0 261.4M563.1 250.3L562.0 249.3M564.5 224.2L564.7 220.1L562.9 216.5L562.1 212.6M564.5 224.2L568.1 224.1L571.4 222.3L574.9 221.3L578.6 222.2M562.1 212.6L565.8 214.7L570.0 215.0L574.2 215.7L578.0 217.3L581.7 219.2M578.6 222.2L581.3 220.6M581.3 220.6L581.7 219.2M571.6 233.6L573.5 229.5L577.5 226.7L578.6 222.2M571.6 233.6L568.9 230.6L564.7 230.4M563.1 228.5L564.5 224.2M588.9 196.6L590.7 201.4L594.5 204.7M588.9 196.6L585.5 198.6L583.7 201.9M594.5 204.7L591.2 205.9L588.1 207.7L584.9 209.0M584.9 209.0L584.0 205.5L583.7 201.9M592.0 217.5L587.7 218.0L583.5 216.8M592.0 217.5L597.6 214.4M594.5 204.7L597.7 205.5M597.6 214.4L597.0 209.9L597.7 205.5M583.5 216.8L583.1 213.9M584.9 209.0L583.1 213.9M583.8 186.7L587.2 189.4L589.7 192.8M583.8 186.7L580.4 188.7L580.2 192.9L578.7 196.2L575.6 198.5M588.9 196.6L589.7 192.8M583.7 201.9L579.5 200.5L575.6 198.5M551.1 218.5L555.1 215.6L558.6 212.1M551.1 218.5L546.3 219.8L541.7 218.2M541.7 218.2L539.4 215.8M539.4 215.8L541.6 212.8L542.7 209.1L546.4 207.0L547.7 203.4M547.7 203.4L550.8 207.0L554.4 209.8L558.6 212.1M534.9 197.9L532.3 201.3L530.0 204.9M537.7 196.6L541.9 197.2L546.2 197.4M530.0 204.9L530.5 209.2L533.6 212.1M538.1 215.5L539.4 215.8M547.7 203.4L546.2 197.4M553.2 226.9L557.5 230.0M553.2 226.9L551.0 223.0L551.1 218.5M561.8 212.1L558.6 212.1M675.8 116.3L675.1 116.2M661.7 133.8L661.7 129.9M643.3 137.8L641.4 135.6M647.6 127.5L647.0 128.6L643.6 131.2L641.0 134.5M641.4 135.6L641.0 134.5M696.5 150.3L699.0 154.1L702.3 157.4L705.0 161.1M695.8 164.6L699.9 165.5L703.5 163.6M703.5 163.6L705.0 161.1M690.4 171.1L694.3 172.0L697.9 173.8L701.2 176.4L705.5 176.1M703.5 163.6L704.2 167.8L705.0 171.9L705.5 176.1M713.8 128.4L718.3 128.5L722.2 131.0M722.2 131.0L721.6 134.6L718.5 137.5L718.8 141.4L717.3 144.8L716.9 148.5M715.4 148.4L716.9 148.5M705.0 161.1L709.3 160.3M715.4 148.4L714.7 153.1L712.5 156.9L709.3 160.3M523.7 175.3L523.7 171.5L525.3 167.9L525.5 164.1L525.7 162.0M523.7 175.3L521.4 176.0M509.4 165.2L510.6 169.0L513.8 171.9L516.3 175.3M521.4 176.0L516.3 175.3M526.7 191.7L522.4 192.3L518.0 192.9M523.7 175.3L524.9 175.7M524.9 175.7L526.8 180.3L528.9 184.7M521.4 176.0L520.6 180.3L520.2 184.6L518.7 188.7L518.0 192.9M541.4 178.5L537.8 174.7M541.4 178.5L547.3 180.4M547.3 180.4L551.2 177.1M537.8 174.7L538.6 172.3M551.2 177.1L552.6 172.3M552.6 172.3L550.7 170.6M535.9 187.6L538.5 185.0L540.3 181.9L541.4 178.5M524.9 175.7L529.2 175.8L533.6 176.6L537.8 174.7M546.2 197.4L550.8 192.5M550.8 192.5L550.9 188.1L549.8 184.0L547.3 180.4M566.1 181.0L562.1 181.3L558.6 179.3L554.6 179.3L551.2 177.1M566.1 181.0L564.0 184.0L560.7 185.6L557.0 186.8L554.9 189.8L552.4 192.5M550.8 192.5L552.4 192.5M556.8 169.6L556.6 171.0L552.6 172.3M565.7 172.0L565.9 172.1L565.3 177.0L567.7 180.6M566.1 181.0L567.7 180.6M589.7 192.8L592.9 192.5M599.6 175.5L599.4 179.0L600.0 182.6L599.4 186.2M592.9 192.5L595.8 189.0L599.4 186.2M756.9 175.4L754.0 175.0M742.1 193.1L743.2 189.1L744.5 185.1L745.0 181.0L744.7 176.8M742.1 193.1L743.8 193.3M754.0 175.0L749.0 174.3L744.7 176.8M758.9 152.6L752.8 154.5M752.8 154.5L749.9 156.7L747.7 159.6L746.4 163.1M754.0 175.0L752.9 171.5L749.8 169.3L748.2 166.2L746.4 163.1M761.1 148.1L758.2 145.3L757.9 141.4M757.9 141.4L759.0 140.6M572.2 180.8L569.8 181.4M569.8 181.4L567.7 180.6M440.3 186.9L443.6 184.9L447.5 185.1L450.6 182.4L454.5 182.4M461.4 185.7L459.5 184.1M454.5 182.4L459.5 184.1M639.8 133.3L641.0 134.5M639.8 133.3L640.0 129.4L639.0 125.9L638.5 125.1M1025.3 321.9L1024.5 322.8L1024.9 327.0L1023.1 330.4M1023.1 330.4L1023.7 331.3M1018.0 315.8L1022.3 318.3L1023.7 318.7M1016.4 317.8L1018.7 321.8L1018.0 326.3L1018.5 330.6M1018.5 330.6L1023.1 330.4M1014.0 337.8L1012.0 340.9L1011.9 341.1M1007.1 348.5L1006.3 350.5M1014.0 337.8L1013.0 335.9M1011.8 335.2L1013.0 335.9M1011.8 335.2L1006.9 336.3L1001.9 337.2M1001.9 337.2L1001.5 341.0L1004.8 343.6L1003.9 347.6L1006.3 350.5M1018.5 330.6L1015.2 332.6L1013.0 335.9M1015.6 338.9L1014.0 337.8M1008.7 326.2L1009.0 331.1L1011.8 335.2M994.8 335.0L998.4 336.2L1001.9 337.2M887.0 487.5L887.1 487.1M887.1 487.1L887.6 486.9M883.8 473.1L882.9 474.5M883.8 473.1L887.2 474.4L890.8 473.8L894.4 474.0L898.0 474.2L901.6 473.7L904.8 476.8L905.4 476.6M887.1 487.1L884.4 485.0M884.4 485.0L884.4 481.5L884.2 477.9L882.9 474.5M924.6 466.9L929.2 467.7L933.6 466.5L938.1 465.8M924.6 466.9L925.9 471.3L926.5 473.8M969.7 369.3L971.3 370.7M969.7 369.3L965.5 370.0L961.6 371.6L958.2 374.3M958.2 374.3L958.6 378.1L956.2 381.3L954.6 384.7L955.3 388.6M974.2 374.8L971.3 378.0L969.9 382.0L967.8 385.6L965.1 388.9L964.2 393.2M955.3 388.6L959.1 391.9L964.1 393.2M958.2 374.3L953.2 372.7L950.1 368.4M950.1 368.4L946.8 369.5M946.8 369.5L946.5 373.4L946.4 377.4L945.0 381.2L944.9 385.2M955.3 388.6L952.0 389.3M944.9 385.2L948.2 387.7L952.0 389.3M968.9 346.0L966.2 349.7L962.7 352.9L960.8 357.3M968.9 346.0L964.8 343.6L959.9 345.4L955.8 343.5M955.8 343.5L953.5 347.3L951.9 351.4L951.1 355.8M960.8 357.3L956.5 358.0L952.3 357.2M952.3 357.2L951.1 355.8M969.7 369.0L972.7 366.1L973.1 361.8L974.2 357.9L977.2 355.0M969.7 369.0L968.7 365.1L966.0 362.5L963.7 359.7L960.8 357.3M977.2 355.0L974.8 348.7M951.1 336.8L953.5 340.1L955.8 343.5M945.3 353.6L944.1 349.4L943.5 345.0L941.0 341.3M945.3 353.6L951.1 355.8M950.1 368.4L952.3 364.9L953.1 361.2L952.3 357.2M928.0 350.7L928.0 355.4M928.0 350.7L930.6 348.0L932.8 344.8L936.1 342.9L939.2 340.8M945.3 353.6L941.6 354.9L939.5 358.8L935.8 360.0L932.1 361.1M928.0 355.4L929.2 358.8L932.1 361.1M946.8 369.5L943.4 367.6L939.8 368.9M939.8 368.9L936.6 365.9L932.3 364.8M932.1 361.1L932.3 364.8M844.7 351.4L849.9 355.1M844.7 351.4L840.7 353.1L836.4 352.9M840.7 361.9L837.7 357.8L836.4 352.9M840.7 361.9L844.6 363.2L848.4 361.6M849.9 355.1L848.4 361.6M857.2 430.9L861.0 430.8L864.1 433.0L867.3 435.3L870.9 435.9L874.8 435.6M856.5 429.6L859.9 427.3L864.1 426.7L867.5 424.5L871.1 422.6M871.1 422.6L871.4 426.9L872.7 430.8L875.5 434.1M874.8 435.6L875.5 434.1M848.1 396.1L852.5 395.8L856.8 396.3L861.1 397.0L865.2 398.9M848.1 396.1L851.1 392.8L854.0 389.4L855.3 385.0M855.3 385.0L858.3 388.4L862.8 389.3L866.0 392.4L870.3 393.7M865.2 398.9L868.5 397.1L870.3 393.7M871.9 374.9L868.5 376.2L865.1 377.6L861.3 376.3L857.8 377.3M871.9 374.9L870.7 378.6L870.5 382.3L871.4 386.1L870.2 389.7L870.9 393.5M854.8 384.2L854.8 380.1L857.8 377.3M854.8 384.2L855.3 385.0M817.5 473.6L817.0 479.3M812.4 464.3L809.0 466.9L805.0 468.9L802.2 472.4M802.2 472.4L805.0 477.1M805.0 477.1L809.2 476.6L813.2 477.7L817.0 479.3M824.8 485.6L826.4 481.8L830.3 479.9L832.6 476.6M824.8 485.6L822.1 482.4L817.9 482.0M833.3 468.6L832.6 472.6L832.6 476.6M817.0 479.3L817.9 482.0M824.7 451.1L828.8 448.9L831.1 445.2L833.6 441.6M824.7 451.1L820.3 448.2L815.2 447.0M815.2 447.0L817.2 443.0L818.0 438.7M818.0 438.7L821.5 437.4L825.2 439.0L828.7 437.7L832.3 438.3M832.3 438.3L833.6 441.6M827.6 457.6L827.0 454.0L824.7 451.1M842.8 447.9L840.6 444.6L837.3 442.8L833.6 441.6M806.0 452.2L809.5 455.4L810.5 459.9L812.4 464.0M806.0 452.2L808.5 449.4L811.8 448.1L815.2 447.0M833.0 435.0L837.0 433.9L838.8 429.4L843.1 428.8L845.4 425.2L849.3 423.9M833.0 435.0L832.3 438.3M840.4 467.3L840.8 471.7L844.0 475.0L845.3 479.1M832.6 476.6L835.3 480.4L839.7 482.0M839.7 482.0L845.3 479.1M825.6 487.1L824.8 485.6M825.6 487.1L829.7 487.5L834.0 487.0L837.8 489.3M839.7 482.0L837.5 485.3L837.8 489.3M847.7 421.0L849.0 422.6M847.7 421.0L849.9 417.5L848.3 413.0L850.5 409.5L852.0 405.8M849.0 422.6L852.1 420.6L855.3 418.7L857.1 415.1L861.4 414.8L863.5 411.5M852.0 405.8L855.8 404.4L859.6 402.9L863.7 403.0M863.7 403.0L863.0 407.2L863.5 411.5M833.0 435.0L829.8 432.8L830.2 428.1L826.8 426.2M844.5 418.8L847.7 421.0M849.3 423.9L849.0 422.6M872.9 418.0L871.1 422.6M872.9 418.0L869.2 416.6L866.8 413.4L863.5 411.5M795.3 443.2L794.0 439.6L795.0 435.8M804.1 449.6L803.5 445.5L806.0 441.5L803.7 437.3L804.8 433.2M804.8 433.2L799.9 434.7L795.0 435.8M800.0 326.0L797.1 323.4L795.9 319.7L792.8 317.3L791.8 313.5M800.0 326.0L794.7 330.2M791.2 330.1L794.7 330.2M791.2 330.1L789.6 326.1L787.3 322.5L784.5 319.2L782.9 315.3M782.9 315.3L787.2 313.8L791.8 313.5M789.8 190.0L789.5 193.4L792.5 195.7M796.1 190.0L796.5 191.6M796.5 191.6L792.5 195.7M782.3 200.7L786.8 198.2L791.9 197.7M792.5 195.7L791.9 197.7M822.1 280.4L823.6 281.5M813.5 298.0L817.7 297.7L821.8 298.5L826.0 298.1M826.0 298.1L827.6 291.6M823.6 281.5L824.7 285.0L825.2 288.7L827.6 291.6M977.2 355.0L981.8 355.1L985.3 358.4L989.6 359.5M989.7 362.2L990.4 360.6M989.6 359.5L990.4 360.6M989.3 339.3L991.1 343.4M989.6 359.5L988.4 355.4L991.7 351.6L992.0 347.6L991.1 343.4M1006.3 350.5L1006.0 352.6M991.1 343.4L994.4 344.7L996.4 348.3L999.8 349.4L1003.1 350.7L1006.0 352.6M1014.5 351.2L1013.6 352.5L1009.7 352.2L1006.5 354.0M1006.0 352.6L1006.5 354.0M816.9 420.3L815.6 420.2M818.0 438.7L817.4 434.7L816.0 431.0L814.1 427.5L812.6 423.8M815.6 420.2L812.6 423.8M784.5 427.1L783.8 428.4M784.5 427.1L787.3 425.0L789.6 422.3L793.0 420.8L795.0 417.8M783.8 428.4L789.9 430.7M789.9 430.7L794.0 430.4L796.8 426.7L800.5 425.4L804.2 424.1L808.4 424.3M795.0 417.8L798.9 418.3L802.2 420.0L804.6 423.7L808.4 424.3M783.4 409.3L783.4 412.8L783.0 416.4L782.4 420.1L785.8 423.4L784.5 427.1M783.4 409.3L787.8 407.8M787.8 407.8L793.3 408.8M795.0 417.8L795.2 413.1L793.3 408.8M804.8 433.2L808.5 429.6L810.1 424.6M812.6 423.8L810.1 424.6M787.8 407.8L786.7 403.7L785.4 399.5L784.5 395.3L785.3 390.8M785.3 390.8L790.1 388.7L794.8 386.5M794.8 386.5L798.2 389.1M798.2 389.1L798.3 392.8L798.1 396.5L796.1 399.9L795.3 403.4L795.5 407.2M793.3 408.8L795.5 407.2M795.0 435.8L791.8 434.0L789.9 430.7M810.1 424.6L808.4 424.3M807.8 391.0L808.5 391.7M807.8 391.0L802.7 391.3L798.2 389.1M795.5 407.2L799.5 406.0L803.3 408.0L807.2 408.1M808.5 391.7L809.3 395.9L808.1 399.9L806.5 403.9L807.2 408.1M815.6 420.2L814.7 416.0M814.7 416.0L813.0 412.6L808.8 411.6L807.2 408.1M808.5 391.7L812.0 394.2L816.5 394.1L820.4 395.8M814.7 416.0L815.8 412.4L817.5 409.1L820.0 406.1L820.7 402.4L822.5 399.2M822.5 399.2L820.4 395.8M839.9 374.5L839.3 378.1L835.7 380.3L835.4 384.1L833.6 387.2M839.9 374.5L836.2 371.2M836.2 371.2L834.6 371.2M834.6 371.2L830.2 371.8L827.2 375.1M833.6 387.2L830.4 385.0L826.5 384.8M827.2 375.1L827.4 379.7L826.2 384.2M807.8 391.0L809.4 387.7L810.7 384.2L813.3 381.5M826.5 384.8L824.0 388.2L823.0 392.5L820.4 395.8M826.2 384.2L822.0 382.8L817.4 383.7L813.3 381.5M789.7 349.7L792.3 347.0L793.2 343.4L794.4 339.9L796.5 337.0M789.7 349.7L793.3 349.7L796.6 351.3M796.6 351.3L798.6 348.2L802.5 347.0L804.5 343.8M796.5 337.0L798.3 340.3L802.7 340.5L804.5 343.8M788.4 350.0L789.7 349.7M776.2 336.9L780.5 336.6L783.6 333.3L787.4 331.6L791.2 330.1M794.7 330.2L797.1 333.2L796.5 337.0M827.2 375.1L824.3 371.9L819.8 372.1L816.4 370.1M813.3 381.5L814.7 376.6L813.6 371.6M813.6 371.6L816.4 370.1M813.2 340.9L816.1 338.6L819.7 337.6M813.2 340.9L811.9 343.8M811.9 343.8L811.7 348.3L814.4 352.0M819.7 337.6L822.8 339.4L826.8 338.8L829.7 341.3M814.4 352.0L817.4 354.6L820.8 356.7M829.7 341.3L831.1 346.0L831.8 351.0M831.8 351.0L827.7 353.0L824.3 356.1M824.3 356.1L820.8 356.7M800.0 326.0L801.3 325.7M806.6 328.2L801.3 325.7M806.6 328.2L807.6 331.7L809.4 334.8L810.7 338.2L813.2 340.9M804.5 343.8L808.2 344.6L811.9 343.8M836.2 371.2L839.4 367.1L840.7 361.9M834.6 371.2L832.7 368.1L830.5 365.2L828.6 362.1L827.6 358.3L824.3 356.1M836.4 352.9L834.1 351.4M834.1 351.4L831.8 351.0M816.4 370.1L816.6 366.4L820.0 363.8L818.3 359.5L820.8 356.7M781.0 373.0L778.2 369.6L776.8 365.5M781.0 373.0L784.7 374.0L788.3 375.3M784.7 358.0L787.3 360.3L790.1 362.6M788.3 375.3L789.6 371.1L789.1 366.7L790.1 362.6M781.0 373.0L779.4 377.4L775.6 380.3M785.3 390.8L784.4 390.8M794.8 386.5L794.3 380.3M794.3 380.3L790.8 378.3L788.3 375.3M775.6 380.3L777.9 384.4L781.7 387.1L784.4 390.8M764.4 357.4L760.7 359.5L756.4 359.8M764.4 357.4L763.7 353.1L761.5 349.3L762.8 344.5L760.0 340.8M756.4 359.8L755.1 355.7L755.3 351.1L751.2 347.8L751.4 343.2M760.0 340.8L755.5 341.4L751.4 343.2M770.6 336.0L769.2 335.2M769.2 335.2L766.1 337.0L763.7 339.9L760.0 340.8M749.2 312.3L751.9 315.8L755.4 318.6M749.2 312.3L745.7 313.4L742.1 314.2L738.6 315.5M755.4 318.6L751.8 320.5L748.5 322.9L745.0 324.8L741.2 326.5L738.7 329.9M738.6 315.5L738.2 319.6L734.6 322.1L733.5 325.9M738.7 329.9L734.3 327.5M734.3 327.5L733.5 325.9M757.6 318.8L760.3 315.4L762.4 311.7L763.1 307.3L765.6 303.8M757.6 318.8L755.4 318.6M747.6 306.0L749.2 312.3M765.1 302.3L765.6 303.8M737.2 304.7L737.9 308.3L738.7 311.8L738.6 315.5M769.2 335.2L768.6 331.7M768.6 331.7L766.0 328.3L762.2 325.9L760.0 322.3L757.6 318.8M743.7 338.6L747.8 340.1L750.7 343.2M743.7 338.6L741.6 334.0L738.7 329.9M789.3 299.1L787.9 302.5L785.7 305.4L784.4 308.8L782.1 311.7L779.3 314.1M789.3 299.1L785.5 300.0L782.1 298.3M782.1 298.3L780.1 302.3L775.9 304.3L773.5 308.0M773.5 308.0L775.7 311.6L779.2 314.1M786.0 287.1L781.6 285.7L777.3 287.0M775.1 292.3L777.5 296.6L782.1 298.3M765.6 303.8L769.4 306.3L773.5 308.0M768.6 331.7L772.0 328.9L773.7 325.2L775.3 321.3L776.7 317.4L779.2 314.1M782.9 315.3L779.3 314.1M781.7 271.9L788.4 272.5M781.7 271.9L782.3 267.5L781.5 263.2L781.2 258.9L780.5 254.6M789.8 260.0L786.9 258.0L783.0 257.5L780.7 254.5M789.8 260.0L789.6 264.8L789.6 269.5M788.4 272.5L789.6 269.5M776.8 273.2L781.7 271.9M792.2 277.3L788.4 272.5M768.7 266.8L771.2 263.9L772.7 260.1L776.9 258.5L778.3 254.8M778.3 254.8L780.5 254.6M797.0 255.9L792.9 257.0L789.8 260.0M781.3 253.3L780.7 254.5M801.2 263.8L797.5 266.0L793.4 267.5L789.6 269.5M806.3 210.2L805.2 213.6L804.8 217.2L804.1 220.7L802.6 224.1M806.3 210.2L802.9 208.1L799.0 210.9L795.6 209.1M802.6 224.1L799.9 220.7L795.3 219.6L792.4 216.6L789.9 213.1M795.6 209.1L789.9 213.1M785.9 213.6L785.2 209.3L782.3 205.7L781.6 201.4M785.9 213.6L789.9 213.1M791.9 197.7L793.6 199.2M793.6 199.2L793.7 204.3L795.6 209.1M813.7 233.8L814.3 231.3L814.7 229.3M801.2 226.8L802.6 224.7M802.6 224.7L806.2 225.9L810.0 224.4L813.1 225.6M806.3 210.1L807.9 211.3M792.5 226.2L789.3 223.3L785.9 220.5L784.1 216.4M792.5 226.2L789.5 229.0L785.7 230.9M785.7 230.9L784.3 226.7L783.4 222.3L780.5 218.7M784.1 216.4L780.5 218.7M800.4 227.0L796.3 227.9L792.5 226.2M785.9 213.6L784.1 216.4M783.9 238.7L783.4 236.8M783.4 236.8L785.7 230.9M783.2 239.6L778.5 240.8L773.8 241.9M778.3 254.8L775.0 252.5L771.6 250.6M773.8 241.9L772.5 246.2L771.6 250.6M765.5 264.5L765.4 259.8L768.5 255.6L767.6 250.8M767.6 250.8L771.6 250.6M690.4 171.1L688.5 174.4L688.7 178.5L687.0 181.9L684.9 185.1M671.4 172.8L673.4 176.4L674.5 180.5L678.1 183.1L679.9 186.8M684.9 185.1L679.9 186.8M671.1 208.9L674.7 212.9M671.1 208.9L673.9 206.4L673.9 202.3L675.1 199.0L678.8 196.9L679.3 193.2M683.7 212.0L679.3 213.4L674.7 212.9M683.7 212.0L686.7 209.7L690.3 208.2M690.3 208.2L687.7 205.5L686.6 201.7L683.3 199.4L681.0 196.5L679.3 193.2M735.6 195.7L742.1 193.1M735.6 195.7L733.8 199.5L732.7 203.5L731.2 207.4M752.7 206.6L748.5 211.5M748.5 211.5L744.1 212.6L740.1 210.8L736.1 209.8L731.9 209.3M731.2 207.4L731.9 209.3M754.1 223.2L754.4 222.4M748.5 211.5L749.2 215.8L753.4 218.2L754.4 222.4M736.0 223.4L734.3 219.4L733.5 215.1L731.6 211.1M731.9 209.3L731.6 211.1M660.9 184.9L658.6 190.7M660.9 184.9L664.5 185.2L668.2 185.5L672.0 185.5L675.3 188.2L679.0 188.0M679.0 188.2L676.5 191.1L672.8 191.7L669.2 192.5L667.5 196.4L663.8 197.2M658.6 190.7L658.8 194.4M663.8 197.2L658.8 194.4M643.7 185.8L647.7 186.2L650.8 189.4L654.8 189.6L658.6 190.7M659.2 178.4L660.9 184.9M679.9 186.8L679.0 188.0M671.1 208.9L668.6 208.0M668.6 208.0L666.2 204.7L664.0 201.4L663.8 197.2M679.3 193.2L679.0 188.2M657.2 195.7L658.8 194.4M668.6 208.0L665.1 210.9L660.7 210.6L656.8 211.8M656.8 211.8L655.8 208.0L652.4 206.0M714.8 202.7L711.9 205.7L709.3 208.9L707.9 213.0L704.5 215.6M714.8 202.7L718.5 205.0L722.5 206.6L727.1 206.0L731.2 207.4M731.1 211.6L727.0 212.4L723.4 214.2L720.5 217.6L716.3 218.2L713.0 220.7M713.0 220.7L709.6 216.8L704.5 215.6M703.4 238.8L698.6 238.2M703.4 238.8L703.1 242.7L703.0 246.4L704.8 250.0M704.8 250.0L701.2 252.2L696.8 251.4L693.0 253.0M698.6 238.2L698.2 242.3L696.1 245.7L695.3 249.6L693.0 253.0M696.0 275.0L699.0 272.9L701.6 270.5L704.3 268.0L708.0 267.1L710.9 265.0L713.6 262.6M696.0 275.0L694.5 273.8M714.7 257.7L712.1 256.5M694.5 273.8L693.6 272.4M712.1 256.5L708.6 258.1L705.0 257.5L701.3 256.3L697.8 257.2L694.3 258.7L690.6 257.5M693.6 272.4L692.7 268.7L693.7 264.7L692.2 261.1L690.6 257.5M704.8 250.0L709.3 252.4L712.1 256.5M693.0 253.0L690.0 256.4M690.6 257.5L690.0 256.4M523.8 412.9L524.0 412.9M524.0 412.9L524.0 413.0M532.6 419.1L532.6 419.1M532.6 419.2L532.6 419.1M537.3 437.8L538.7 434.1M535.8 428.5L535.7 431.1L538.7 434.1M554.5 444.7L553.6 440.4L552.8 436.1M552.8 436.1L548.6 434.6L544.4 433.3M538.7 434.1L544.4 433.3M493.9 398.6L499.2 401.7M499.2 401.7L500.6 404.4M526.7 584.0L526.9 583.0M514.0 585.1L512.7 580.7L514.3 576.1L513.4 571.7M513.4 571.7L515.4 571.1M526.9 583.0L524.9 579.2L520.9 577.3L519.3 573.1L515.4 571.1M526.9 583.0L528.8 579.9L532.9 578.6L533.6 574.5L536.3 572.1M515.4 571.1L516.8 567.5L520.2 565.9L522.4 563.0L525.7 561.4M535.0 565.2L536.0 567.9M535.0 565.2L530.2 560.5M530.2 560.5L525.7 561.4M536.0 567.9L536.3 572.1M541.5 581.4L541.3 579.6L539.5 575.7L536.6 572.4M550.4 586.5L553.4 585.3M558.2 589.9L556.4 588.4L553.4 585.3M536.6 572.4L540.2 573.6L544.2 573.6L547.1 577.0L551.6 575.4L554.9 577.7M553.4 585.3L552.9 581.3L554.9 577.7M554.2 568.8L550.5 568.9L546.9 567.8L543.3 567.9L539.7 567.5L536.0 567.9M554.2 568.8L556.6 571.7M555.6 576.8L554.9 577.7M547.0 334.4L548.4 337.9M547.0 334.4L548.9 330.6L548.2 326.5M566.7 319.8L566.2 323.6L566.5 327.3L567.2 331.1L565.8 334.8L565.8 338.6M548.2 326.5L551.7 324.4L554.1 321.0L557.6 319.0M548.4 337.9L552.8 337.7L557.1 339.0L561.5 337.5L565.8 338.6M525.1 345.3L528.7 346.3L531.1 349.2M525.1 345.3L520.6 345.6M520.6 345.6L520.8 349.5L520.2 353.3L518.1 356.8L518.6 360.8M518.6 360.8L521.0 361.8M531.1 349.2L528.1 352.0L526.5 355.9L523.3 358.5L521.0 361.8M547.0 334.4L542.7 335.1L538.5 336.1L534.1 335.7M534.1 335.7L533.7 340.3L536.8 344.5L535.8 349.2M548.4 337.9L548.1 341.5L547.1 344.9M547.1 344.9L542.5 347.2L538.6 350.6M535.8 349.2L538.6 350.6M553.8 360.2L553.2 356.5L551.5 353.2L550.4 349.7L549.1 346.3M553.8 360.2L549.6 359.7L547.0 355.6L542.2 356.3L539.1 353.4M547.1 344.9L549.1 346.3M538.6 350.6L539.1 353.4M606.7 450.8L603.2 449.3L600.6 446.5M606.7 450.8L602.9 452.5L600.8 456.1L597.8 458.8M600.6 446.5L596.2 447.1L592.7 449.7M592.7 449.7L591.0 454.6M591.0 454.6L593.6 457.5M597.8 458.8L593.6 457.5M599.9 435.9L599.3 439.5L601.4 442.9L600.6 446.5M612.6 435.5L611.7 432.6M612.6 435.5L611.0 439.2L609.6 443.0L608.5 446.9L608.6 451.1M608.6 451.1L606.7 450.8M615.5 456.7L612.7 459.8L609.9 463.0L606.5 465.7L605.2 470.0M615.5 456.7L611.6 454.4L608.6 451.1M605.2 470.0L603.7 465.6L600.6 462.3L597.8 458.8M595.7 434.3L591.8 437.1M590.7 446.4L592.7 449.7M583.9 455.9L580.6 454.2L577.2 452.4M583.9 455.9L587.4 454.9L591.0 454.6M581.1 444.1L578.5 446.8M578.5 446.8L577.2 452.4M583.9 455.9L584.5 460.0L582.8 464.0L584.7 468.1L583.5 472.1M583.5 472.1L588.8 473.2M588.8 473.2L588.6 468.9L591.1 465.3L593.2 461.7L593.6 457.5M590.4 474.2L594.3 475.1L598.0 472.5L601.9 474.1M590.4 474.2L588.8 473.2M601.9 474.1L604.8 471.8M604.8 471.8L605.2 470.0M541.2 537.2L542.4 541.9L541.6 546.7M541.2 537.2L535.4 536.6M535.4 536.6L532.3 539.6L530.1 543.4L526.8 546.2M541.6 546.7L537.6 548.8L534.0 551.6L531.0 554.9M531.0 554.9L528.3 550.9L526.8 546.2M552.4 550.6L555.8 547.2L555.2 542.0L558.1 538.4M552.4 550.6L548.6 549.9L545.0 548.5L541.6 546.7M542.0 536.4L545.9 538.4L549.9 539.0L554.1 538.0L558.1 538.4M542.0 536.4L541.2 537.2M552.4 550.6L553.9 555.6M553.9 555.6L550.9 557.5L547.2 558.0L544.6 560.8L542.0 563.4L537.8 562.9L535.0 565.2M530.2 560.5L531.0 554.9M554.2 568.8L555.7 563.7M555.7 563.7L553.6 560.0L554.0 555.7M542.7 531.5L547.0 529.3L551.2 526.5M542.7 531.5L539.2 528.3L539.8 523.0L536.4 519.8M551.2 526.5L547.6 525.2L545.6 522.2L543.8 519.0L540.8 517.1M536.4 519.8L540.8 517.1M528.3 529.9L531.1 534.0L535.4 536.6M528.3 529.9L531.4 527.3L532.8 523.8L533.4 519.9M542.0 536.4L542.7 531.5M533.4 519.9L536.4 519.8M551.7 526.6L553.9 523.3L553.5 519.4M553.5 519.4L550.6 518.0M543.2 512.8L542.3 513.4L540.8 517.1M525.1 513.7L526.6 516.5L529.9 518.4L533.4 519.9M551.7 526.6L555.1 529.5L558.9 531.8M558.1 538.4L560.8 536.4M558.9 531.8L560.8 536.4M553.5 519.4L558.1 518.5L560.6 518.1M558.9 531.8L560.6 528.5L559.7 524.5L562.0 521.4L562.4 519.9M560.2 507.7L561.0 507.4M561.0 507.4L563.8 510.0L563.9 510.2M591.2 507.9L595.8 507.4M591.2 507.9L587.4 507.7L584.6 505.1M597.3 493.0L593.2 492.3L589.1 492.0M597.3 493.0L599.1 497.7L601.3 502.1M601.3 502.1L597.5 503.6L595.8 507.4M589.1 492.0L586.0 493.7M586.0 493.7L585.9 498.7L582.8 502.7M584.6 505.1L582.8 502.7M591.5 520.2L589.8 516.2L590.3 512.0L591.2 507.9M591.5 520.2L595.3 522.4L597.1 526.5M601.0 516.9L599.9 515.0L596.7 511.8L595.8 507.4M582.5 517.2L583.7 513.3L585.3 509.4L584.6 505.1M582.5 517.2L586.9 518.9L591.5 520.2M603.2 487.7L603.1 483.1L603.8 478.5L601.9 474.1M603.2 487.7L600.7 490.8L597.3 493.0M590.4 474.2L589.5 477.7L588.4 481.2L588.6 484.8L590.9 488.6L589.1 492.0M580.5 518.4L577.1 516.8L573.7 515.3L571.5 512.1M580.5 518.4L582.5 517.2M580.3 503.2L576.9 505.6L573.2 507.9L571.5 512.1M580.3 503.2L582.8 502.7M606.8 424.5L608.1 420.8L610.3 417.6L611.9 414.2M600.2 420.6L601.6 417.2L600.9 413.6M611.9 414.2L608.3 412.9L604.6 412.8L600.9 413.6M565.0 411.2L564.1 412.7M565.0 411.2L568.8 411.3L572.1 409.2L575.8 408.6L579.5 408.8M579.5 408.8L580.2 409.8M578.1 419.4L574.3 418.6L570.8 421.6L566.9 420.6M566.9 420.6L564.8 416.9L564.1 412.7M562.6 396.6L556.6 395.1M562.6 396.6L564.5 400.0L562.7 404.1L564.7 407.5L565.0 411.2M550.1 406.3L553.2 403.1L555.0 399.2L556.6 395.1M550.1 406.3L552.1 410.3L554.1 414.3M564.1 412.7L559.1 413.2L554.1 414.3M552.8 436.1L556.6 434.0M556.6 434.0L559.8 428.2M544.4 433.3L546.6 430.5L547.9 427.1L551.7 425.3L552.3 421.5M559.8 428.2L556.7 424.1L552.3 421.5M534.9 417.3L539.1 417.8L543.3 418.6L547.5 416.4L551.7 417.6M534.9 417.3L537.6 413.7L537.8 409.1L539.7 405.2M550.1 406.3L545.1 404.4L539.7 405.2M554.1 414.3L551.7 417.6M532.6 419.1L534.9 417.3M551.7 417.6L552.3 421.5M579.8 433.2L575.2 435.4L570.1 436.2M579.8 433.2L580.6 428.8M580.6 428.8L580.1 427.1M580.1 427.1L575.5 426.6L570.9 425.6L566.2 426.0M570.1 436.2L569.9 432.4L568.7 429.0L566.1 426.2M582.8 437.6L579.8 433.2M578.5 446.8L576.3 443.0L572.0 441.5L569.3 438.2M569.3 438.2L570.1 436.2M593.7 429.0L589.3 429.2L585.0 428.0L580.6 428.8M594.2 424.4L589.6 420.0M580.5 424.4L580.1 427.1M566.9 420.6L566.2 426.0M556.6 434.0L560.3 435.4L563.3 437.7L566.2 440.3M569.3 438.2L566.2 440.3M559.8 428.2L566.1 426.2M608.7 322.8L607.9 324.4M622.1 324.2L624.5 328.8M607.9 324.4L608.1 328.6L611.8 331.7L612.4 335.9L613.0 340.0M624.5 328.8L620.9 330.8L618.5 334.1L615.1 336.4L613.0 340.0M602.4 327.8L607.9 324.4M599.7 341.3L603.8 342.0L607.1 344.6L611.0 345.9M613.0 340.0L611.0 345.9M635.1 327.0L637.5 330.6L636.1 335.0L636.1 339.1L638.6 342.7M635.1 327.0L640.1 323.3M644.2 325.3L640.1 323.3M644.2 325.3L644.6 329.4L644.1 333.4L643.7 337.5L643.9 341.5M643.9 341.5L638.6 342.7M634.2 345.2L632.6 345.0M634.2 345.2L638.6 342.7M624.5 328.8L626.1 332.1L626.4 336.0L628.7 338.8L631.9 341.3L632.6 345.0M624.5 328.8L627.8 326.9L631.6 327.5L635.1 327.0M637.4 312.9L639.0 316.2L639.4 319.8L640.1 323.3M644.0 307.0L647.5 308.4L650.0 311.7L653.8 312.5M654.2 324.0L654.8 320.2L653.5 316.4L653.8 312.5M654.2 324.0L649.1 323.6L644.2 325.3M654.2 324.0L657.3 327.7L661.6 329.9M661.6 329.9L662.5 334.8L662.0 339.8M650.4 343.2L653.8 340.6L658.2 341.2L662.0 339.8M650.4 343.2L643.9 341.5M502.4 372.0L497.9 371.2L493.5 372.2M502.4 372.0L501.1 368.3L499.6 364.6L498.2 360.8L495.4 357.8L493.6 354.3M493.5 372.2L490.9 369.3L486.8 368.6L484.4 365.5M493.6 354.3L490.7 356.6L489.3 360.1L487.5 363.3L484.4 365.5M485.9 382.6L487.6 378.6L490.5 375.4L493.5 372.2M475.6 365.9L480.0 365.1L484.4 365.5M287.5 358.5L284.6 361.5L280.6 362.5M294.6 372.8L289.4 373.7L284.8 371.3M284.8 371.3L282.3 367.1L280.6 362.5M271.2 363.5L273.0 363.9M276.9 349.1L278.5 353.4L277.7 358.1L279.7 362.3M273.0 363.9L279.7 362.3M279.7 362.3L280.6 362.5M284.8 371.3L282.6 374.1L280.9 377.1M273.0 363.9L275.0 367.9L273.8 372.1L274.2 376.3M274.2 376.3L280.9 377.1M315.2 321.6L312.7 318.2L311.9 314.1M315.2 321.6L318.0 318.9L321.5 318.1L325.4 318.4L329.0 318.0L332.5 317.0L335.4 314.7M331.1 309.7L335.5 314.5M331.1 309.7L327.3 311.3L323.4 308.8L319.5 308.7L315.7 310.3M315.7 310.3L311.9 314.1M315.1 322.6L315.2 321.6M296.4 318.6L297.7 317.3M297.7 317.3L301.7 316.0L305.4 313.8L309.6 313.2M309.6 313.2L311.9 314.1M337.0 325.4L335.5 322.0L336.1 318.3L335.4 314.7M352.1 304.6L348.8 306.6L346.2 309.7L341.7 309.8L338.2 311.5L335.5 314.5M352.2 304.3L348.5 302.9L345.2 300.9L343.0 297.3L340.0 295.0L335.8 294.4L332.2 292.9L330.3 288.8L326.7 287.4M325.9 294.4L327.3 298.2L328.7 302.0L329.5 306.0L331.1 309.7M316.9 302.9L317.2 306.7L315.7 310.3M309.6 313.2L307.7 309.1L305.2 305.5L303.8 301.3M307.2 299.0L303.8 301.3M352.1 304.6L354.8 307.3L355.6 311.0L357.2 314.3L359.4 317.3M355.7 326.8L357.3 325.0M359.4 317.3L358.7 321.2L357.3 325.0M282.0 304.8L277.9 304.8L273.9 304.3M282.0 304.8L283.3 300.3L282.5 295.6L283.0 291.1M273.9 304.3L273.3 300.4L272.9 296.5L271.3 292.7L272.1 288.7L272.2 284.7M283.0 291.1L278.7 288.3L276.6 283.7M276.6 283.7L272.2 284.7M268.9 306.4L273.9 304.3M286.4 314.9L283.8 310.3L282.8 305.2M282.8 305.2L282.0 304.8M267.2 283.0L272.2 284.7M285.5 275.5L282.4 278.1L280.1 281.6L276.6 283.7M295.4 288.2L296.4 284.9M295.4 288.2L291.3 289.3L287.4 291.3L283.0 291.1M274.2 267.2L276.9 268.8L281.3 268.2L284.9 270.3M357.0 405.4L353.2 404.6L351.1 401.4L348.5 399.0M357.0 405.4L363.9 406.2M363.9 406.2L362.0 402.7L363.7 398.7L362.5 395.2M362.5 395.2L359.1 392.3M359.1 392.3L355.5 390.7L351.6 391.4M351.6 391.4L350.6 395.3L348.4 398.7M348.6 415.3L351.5 412.1L353.9 408.5L357.0 405.4M344.3 406.4L347.3 403.2L348.5 399.0M366.0 408.2L363.9 406.2M362.7 419.8L364.9 415.8M382.2 399.4L379.7 402.9M382.2 399.4L380.6 396.0L378.2 393.3L375.4 391.0M375.4 391.0L370.9 391.9L366.5 392.9L362.5 395.2M347.2 382.0L346.0 381.8M347.2 382.0L350.0 386.5L351.6 391.4M334.9 395.4L339.0 398.1L343.8 398.1L348.4 398.7M400.5 371.5L402.9 374.5L407.1 374.7L410.3 376.4L413.0 379.0M413.5 385.8L411.7 389.0L409.5 391.9L406.5 394.2M395.7 389.4L396.7 393.2M406.5 394.2L401.8 392.2L396.7 393.2M382.2 399.4L386.5 398.5L390.8 398.1M376.5 380.0L373.6 381.7M373.6 381.7L373.4 386.6L375.4 391.0M396.7 393.2L393.5 395.3L390.8 398.1M525.7 561.4L520.5 560.1L516.5 556.6M526.8 546.2L525.0 544.8M525.0 544.8L520.9 545.0L520.0 544.9M515.1 548.2L515.3 551.5L516.5 556.6M516.3 175.3L511.7 178.6M511.7 178.6L509.6 182.2L507.9 186.0L505.8 189.6M518.0 192.9L514.4 196.5M514.4 196.5L512.5 192.9L509.2 191.2L505.8 189.6M498.9 188.5L500.3 189.2M498.9 188.5L499.1 184.4L495.2 182.0L494.6 178.3M511.7 178.6L507.9 178.0L504.6 175.8L500.3 176.7L497.0 174.5M494.6 178.3L497.0 174.5M500.3 189.2L505.8 189.6M523.3 265.8L524.9 267.6M523.3 265.8L526.1 262.7L525.5 257.8L528.8 255.0M524.9 267.6L529.0 268.1L533.2 268.5M533.2 268.5L532.1 264.5L535.1 260.8L534.2 256.7M528.8 255.0L533.0 255.6M534.2 256.7L533.0 255.6M516.6 265.6L523.3 265.8M523.5 279.0L525.5 275.4L524.8 271.4L524.9 267.6M527.6 254.2L528.8 255.0M535.6 272.7L533.2 268.5M543.5 258.4L539.1 256.2L534.2 256.7M538.5 242.5L534.7 240.0L529.9 241.4L525.9 239.5M538.5 242.5L536.9 245.7L536.6 249.4L535.1 252.7L533.0 255.6M538.5 242.5L543.3 240.0M543.3 240.0L547.6 240.5L550.7 243.4M520.9 334.0L518.9 327.5M520.9 334.0L527.4 335.8M518.9 327.5L523.2 326.7L527.7 326.4L531.7 324.4M531.7 324.4L533.0 329.2L531.7 333.9M531.7 333.9L527.4 335.8M525.1 345.3L527.0 340.8L527.4 335.8M520.6 345.6L517.7 343.3L514.1 342.1M514.1 342.1L515.1 338.4L517.4 335.6L520.9 334.0M534.1 335.7L531.7 333.9M531.1 349.2L535.8 349.2M522.8 290.3L524.0 291.9M515.9 303.0L520.0 303.8L524.1 303.0M515.9 303.0L513.1 300.7M512.9 299.1L513.1 300.7M524.1 303.0L525.1 299.3L522.8 295.6L524.0 291.9M538.2 292.8L534.2 292.7L531.1 295.4M524.0 291.9L527.1 294.5L531.1 295.4M536.1 310.9L535.1 316.0L534.5 321.1M536.1 310.9L534.9 308.4M534.9 308.4L530.9 306.5M519.3 315.2L522.2 312.2L524.2 308.2L528.3 306.4M519.3 315.2L522.5 317.5L526.4 318.2L529.2 321.2L533.0 322.1M530.9 306.5L528.3 306.4M533.0 322.1L534.5 321.1M548.2 326.5L545.1 324.2L541.3 323.8L537.8 322.7L534.5 321.1M552.4 312.2L548.2 312.9L544.2 312.4L540.1 312.7L536.1 310.9M543.6 297.0L542.2 300.5L538.0 301.8L537.7 306.0L534.9 308.4M531.1 295.4L531.3 299.1L529.4 302.8L530.9 306.5M515.9 303.0L516.6 307.0L517.6 310.9L517.3 315.0M517.3 315.0L518.0 315.5M518.0 315.5L519.3 315.2M524.1 303.0L528.3 306.4M516.8 326.0L518.9 327.5M516.8 326.0L517.9 322.6L516.9 318.9L518.0 315.5M531.7 324.4L533.0 322.1M513.1 300.7L511.4 304.0L507.9 305.5L505.6 308.3M501.5 291.1L499.7 294.4L499.7 298.0L499.3 301.5L499.5 305.0L500.2 308.6M500.2 308.6L505.6 308.3M517.3 315.0L512.5 314.6M512.5 314.6L509.2 311.3L505.6 308.3M452.5 294.1L450.4 296.9L447.7 299.5L448.2 303.8L447.0 307.2L445.2 310.3L442.3 312.7M452.5 294.1L455.6 296.2L459.4 297.3L461.6 300.7M449.1 316.7L445.4 315.2L442.3 312.7M449.1 316.7L453.9 317.6L458.1 315.2M458.1 315.2L459.4 311.7L461.0 308.2L462.1 304.6L461.6 300.7M449.0 338.0L445.5 335.7L441.3 335.1M449.0 338.0L452.7 336.2L456.9 336.6L460.8 335.7M441.3 335.1L443.4 332.1L446.5 330.2L449.9 328.7L452.2 325.9M452.2 325.9L455.9 326.6L458.2 329.7M460.8 335.7L458.2 329.7M451.1 350.7L450.5 346.5L448.9 342.4L449.0 338.0M434.2 346.5L432.5 342.8M432.5 342.8L434.0 338.3L437.7 335.3M437.7 335.3L441.3 335.1M463.2 337.6L462.6 341.2L462.9 344.9M463.2 337.6L460.8 335.7M432.6 353.2L429.2 355.6L425.6 357.6L421.3 358.2L417.9 360.7M432.6 364.9L428.7 364.5L424.9 363.6L421.1 362.4L417.2 363.2M417.9 360.7L417.2 363.2M400.0 366.7L403.6 362.5M418.1 371.8L417.3 367.6L417.0 363.3M403.6 362.5L408.1 363.3L412.6 361.4L417.0 363.3M386.8 363.6L388.5 359.4L388.3 354.6L391.2 350.9M385.2 363.3L383.0 359.9L380.0 357.1M380.0 357.1L380.0 352.8L381.6 348.6L381.2 344.2M391.2 350.9L390.1 346.7L386.3 344.2L384.1 340.6M383.9 340.6L381.2 344.2M359.4 317.3L363.1 318.7L366.7 317.2M357.3 325.0L359.9 327.7L363.2 329.2L366.4 330.7L370.0 331.6L372.9 333.8M376.5 325.7L372.2 324.0L369.6 320.5L366.7 317.2M376.5 325.7L375.5 329.4L375.6 333.3M372.9 333.8L375.6 333.3M358.6 342.8L360.0 344.1M372.9 333.8L370.7 337.6L366.3 338.8L362.3 340.4L360.0 344.1M414.1 294.9L418.3 294.8L422.5 295.7L426.7 295.4M416.9 282.0L419.8 284.4L424.1 284.4L426.5 287.5M426.5 287.5L425.8 291.5L426.7 295.4M425.6 267.6L426.0 271.8L430.0 274.4L430.0 278.9L432.3 282.3M426.5 287.5L428.4 283.7L432.3 282.3M405.9 307.2L408.2 309.2M427.6 304.0L423.9 305.7L420.1 307.2L416.4 308.6L412.3 308.9L408.2 309.2M427.6 304.0L427.7 297.5M427.7 297.5L426.7 295.4M439.4 313.5L437.0 316.8L437.3 320.6L437.9 324.5L436.3 328.0M439.4 313.5L436.2 311.6L432.7 310.6M432.7 310.6L429.9 314.3L426.0 316.8L422.6 319.8M436.3 328.0L433.0 326.0L428.8 327.8L425.2 326.7L421.9 324.6M421.9 324.6L422.6 319.8M437.7 335.3L437.4 331.6L436.3 328.0M449.1 316.7L452.0 320.8L452.2 325.9M442.3 312.7L439.4 313.5M452.5 294.1L451.8 291.2M427.6 304.0L430.5 307.0L432.7 310.6M427.7 297.5L431.1 296.6L434.3 294.8L437.6 293.2L441.2 292.9L445.2 294.3L448.5 292.7L451.8 291.2M408.6 310.9L408.2 309.2M408.6 310.9L411.5 314.2L416.2 314.4L418.2 319.0L422.6 319.8M432.5 342.8L431.5 342.7M431.5 342.7L428.3 340.4L426.7 336.8L424.0 334.0L420.4 332.3L418.5 328.8M418.5 328.8L421.9 324.6M373.6 381.7L372.7 381.2M359.1 392.3L360.5 387.9L364.5 385.2L366.2 381.0M366.2 381.0L372.7 381.2M347.2 382.0L348.8 378.5L352.6 377.4M352.6 377.4L356.6 376.3L360.6 377.6M366.2 381.0L360.6 377.6M412.3 164.8L410.6 161.3L411.4 157.3L409.7 153.8M412.3 164.8L415.9 162.6L420.2 163.9L423.9 162.4M423.9 162.4L422.3 156.9M422.3 156.9L418.1 156.3L414.9 153.1L410.8 152.4M410.8 152.4L409.7 153.8M407.8 169.9L412.3 164.8M426.3 164.8L423.9 162.4M360.5 184.5L364.7 182.9L369.2 183.6M352.1 181.7L354.4 178.8L357.3 176.4L358.4 172.5L362.0 170.8M362.0 170.8L363.0 174.4L364.3 178.0L366.4 181.0L369.2 183.6M355.6 159.0L359.1 161.3L359.3 165.7L361.9 168.5M362.0 170.8L361.9 168.5M354.8 205.6L356.5 205.4M372.2 185.4L371.6 184.5M371.6 184.5L369.2 183.6M303.4 301.2L300.1 297.2L295.8 294.3M303.4 301.2L299.8 303.1L297.7 306.5M297.7 306.5L294.3 304.6L290.7 304.5L287.1 304.6L283.4 304.9M295.8 294.3L292.7 297.0L289.5 299.4L286.0 301.6L283.4 304.9M295.4 288.2L295.8 294.3M297.7 317.3L296.2 313.7L297.8 310.1L297.7 306.5M283.3 252.7L283.9 253.3M280.4 257.4L282.4 257.6M282.4 257.6L283.9 253.3M290.5 250.8L283.9 253.3M286.9 267.1L285.7 263.8L283.1 261.1L282.4 257.6M309.6 250.4L309.8 245.6M300.9 242.7L303.1 240.8L306.4 238.3M309.8 245.6L307.1 242.4L306.4 238.3M304.2 234.6L306.9 233.8M306.4 238.3L306.9 233.8M452.8 246.7L452.9 251.3M440.9 241.6L440.8 245.8L440.4 250.0L439.4 254.2M439.9 254.6L445.0 254.2L450.0 255.3M452.9 251.3L450.0 255.3M466.7 243.8L463.6 248.0L460.9 252.5M452.9 251.3L456.9 251.7L460.9 252.5M461.6 300.7L464.9 302.7L468.8 302.4L472.4 303.1M472.4 303.1L472.5 299.4L475.6 296.5L475.1 292.6M451.8 291.2L451.9 288.7M451.9 288.7L456.7 283.6M456.7 283.6L460.3 285.7L463.7 288.1L468.2 288.1L470.8 292.2L475.1 292.6M485.3 288.6L481.8 288.1L478.2 288.7M485.6 271.8L482.8 271.4M482.8 271.4L479.7 274.0L475.4 273.7L472.0 275.8M472.0 275.8L474.8 278.4L476.2 281.7L477.9 284.9L478.2 288.7M423.3 154.9L427.3 154.2L429.6 150.9M423.3 154.9L424.1 151.3L423.2 149.8M436.0 154.5L433.3 157.4L432.0 160.9L431.2 164.7M436.0 154.5L434.3 150.6M428.2 165.3L431.2 164.7M422.3 156.9L423.3 154.9M410.4 146.6L410.8 146.2M410.4 146.6L410.8 152.4M442.2 155.3L436.0 154.5M409.6 145.9L410.4 146.6M437.2 235.1L436.7 231.8M437.2 235.1L432.7 238.9M436.7 231.8L432.7 231.0L428.7 229.5L424.4 231.3L420.3 230.3M432.7 238.9L428.7 239.0L425.6 242.3L421.5 242.0M421.5 242.0L418.4 239.7L416.8 236.3L414.7 233.3M414.7 233.3L420.3 230.3M438.4 236.1L437.2 235.1M438.3 224.7L437.4 228.2L436.7 231.8M431.7 252.9L431.1 249.4L433.1 246.0L432.7 242.4L432.7 238.9M424.5 222.1L421.9 225.9L420.3 230.3M420.8 249.6L419.7 245.7L421.5 242.0M546.2 228.8L546.0 233.8L542.7 237.7M546.2 228.8L544.5 224.8L541.7 221.7M541.7 221.7L540.3 225.0L537.6 227.4L535.8 230.5M542.7 237.7L538.9 234.5L535.8 230.5M553.2 226.9L549.5 226.9L546.2 228.8M543.3 240.0L542.7 237.7M541.7 218.2L541.7 221.7M533.5 230.1L535.8 230.5M622.3 181.1L616.6 184.8M613.7 196.1L616.3 192.7L615.1 188.4L616.6 184.8M620.1 173.3L615.1 170.7M615.1 170.7L611.1 168.8L606.7 170.6L602.6 169.3M601.2 173.5L604.9 176.4L605.6 181.7L609.8 184.2M616.6 184.8L609.8 184.2M599.4 186.2L602.5 189.5L606.3 192.2M609.8 184.2L607.9 188.2L606.3 192.2M614.9 284.1L617.2 281.3L620.1 278.9L620.8 274.8L623.8 272.6M614.9 284.1L612.0 281.4L610.0 278.2L609.8 273.8L606.8 271.2M606.8 271.2L609.3 267.1L614.5 266.2L617.3 262.5M623.8 272.6L621.9 269.1L619.9 265.6L617.3 262.5M632.6 272.7L628.2 274.2L623.8 272.6M614.3 290.4L614.9 284.1M606.5 290.5L604.0 287.5L601.2 285.0L596.5 285.3L594.3 281.9M601.1 269.8L606.8 271.2M602.4 258.9L605.3 256.8L607.3 253.6L610.8 252.5L613.9 250.8M613.9 250.8L618.0 253.3M618.0 253.3L617.1 257.8L617.3 262.5M636.5 255.2L638.0 261.9M636.5 255.2L633.4 252.8L629.9 250.9M629.9 250.9L625.9 251.7L621.7 251.1L618.0 253.3M630.1 206.8L631.5 211.1L631.6 215.4L628.8 219.7L629.9 224.0M613.7 211.7L612.2 212.8M612.2 212.8L611.2 215.7M629.9 224.0L626.2 222.0L621.9 223.5L618.0 223.1L614.3 221.3M614.3 221.3L611.2 215.7M572.1 234.3L574.8 235.4M572.1 234.3L570.7 238.1L568.2 241.6L567.0 245.5L565.7 249.4M574.8 235.4L576.8 238.8L577.7 242.6L579.3 246.2M565.7 249.4L569.3 248.9L573.0 249.8L576.7 249.3M579.3 246.2L576.7 249.3M584.8 229.6L583.8 224.8L581.3 220.6M584.8 229.6L584.3 232.3M584.3 232.3L579.1 232.7L574.8 235.4M563.1 250.3L565.7 249.4M584.3 232.3L587.0 235.0L586.6 239.1L588.5 242.1M588.5 242.1L583.6 243.7L579.3 246.2M580.7 256.8L578.6 253.1L576.7 249.3M588.5 242.2L589.1 245.8L590.1 249.3L589.6 253.0L591.1 256.5M584.3 289.3L579.7 293.0M584.3 289.3L586.4 292.5L589.3 295.0L591.7 297.9M579.7 293.0L580.5 297.0L580.5 300.9L577.8 304.7L577.7 308.6L578.6 312.6L578.5 316.5M591.7 297.9L591.0 301.3L591.7 305.0L591.5 308.5L589.6 311.8M589.6 311.8L586.5 314.8M586.5 314.8L582.2 317.5M582.2 317.5L578.5 316.5M585.1 286.4L584.3 289.3M568.9 292.5L572.4 294.0L576.1 292.3L579.7 293.0M600.9 295.6L596.7 298.4L591.7 297.9M571.9 316.9L578.5 316.5M600.3 308.8L597.2 311.1L593.1 310.5L589.6 311.8M608.4 322.0L605.1 319.9L600.6 321.1L597.2 319.2L594.1 316.2L590.2 315.8L586.5 314.8M585.2 323.5L582.2 317.5M583.5 216.8L581.7 219.2M583.1 213.9L581.1 210.6L578.0 208.9L574.5 207.7L571.7 205.5M571.7 205.5L567.9 206.5L565.4 209.6L562.2 211.5M552.4 192.5L557.4 193.3L560.9 196.7M562.2 211.5L562.4 207.8L562.5 204.0L562.3 200.3L560.9 196.7M597.0 152.9L597.7 153.7M601.0 165.1L600.7 161.1L597.4 157.9L597.7 153.7M733.8 110.6L730.6 114.9M733.8 110.6L738.4 109.8M730.6 114.9L729.9 118.5L728.9 122.2L728.6 125.9L729.2 129.7M747.2 117.5L747.5 120.8L744.9 124.5L742.7 128.2L742.8 132.6M742.4 110.8L741.5 110.4M742.8 132.6L738.7 130.9L734.2 132.9L730.2 130.7M741.5 110.4L738.4 109.8M730.2 130.7L729.2 129.7M730.3 107.0L730.7 107.6L733.8 110.6M717.0 116.4L721.6 116.5L726.1 115.6L730.6 114.9M739.2 107.5L738.4 109.8M722.2 131.0L725.6 129.7L729.2 129.7M741.9 110.2L741.5 110.4M705.5 176.1L708.3 178.7M709.3 160.3L711.9 163.3L715.0 166.0L718.1 168.5L719.8 172.4M708.3 178.7L711.0 175.7L714.4 174.4L718.2 174.1M718.2 174.1L719.6 172.9M732.9 191.8L733.0 187.0L731.7 182.4M732.9 191.8L729.8 189.3L726.3 188.2L722.3 188.8M718.2 174.1L719.4 177.7L718.7 181.9L721.7 185.0L722.3 188.8M719.6 172.9L721.6 176.5L726.1 177.0L727.7 181.3L731.7 182.4M735.6 195.7L732.9 191.8M744.7 176.8L741.0 175.0M731.7 182.4L735.8 181.3L737.0 176.4L741.0 175.0M746.4 163.1L742.4 162.5L738.5 162.8L735.0 165.1M741.0 175.0L737.7 172.6L736.9 168.5L735.0 165.1M756.1 139.1L755.9 137.2M756.1 139.1L751.3 138.4L746.6 137.1M746.6 137.1L742.8 132.6M757.9 141.4L756.1 139.1M454.9 168.7L451.9 171.6L451.0 175.7M454.9 168.7L450.2 166.7L447.6 162.2M451.0 175.7L446.2 175.3L442.0 173.1M447.6 162.2L443.7 164.4L441.0 168.0M442.0 173.1L441.0 168.0M459.3 169.1L457.7 172.9L459.3 176.6L458.2 180.3L459.5 184.1M459.3 169.1L454.9 168.7M454.5 182.4L454.2 178.3L451.0 175.7M438.0 183.8L440.8 180.8L440.5 176.6L442.0 173.1M431.2 164.7L436.4 165.6L441.0 168.0M497.0 174.5L496.3 170.5L498.6 167.1M499.7 165.9L498.6 167.1M462.4 185.4L464.5 182.3L466.0 178.8L468.2 175.7L471.0 173.0M459.3 169.1L465.0 165.9M471.0 173.0L468.0 169.5L465.0 165.9M465.0 165.9L465.6 161.3M680.1 521.0L674.8 518.0M680.1 521.0L679.5 525.8L677.6 529.9L674.1 533.2M674.8 518.0L670.8 519.8L666.3 519.0L662.1 519.7M662.1 519.7L663.1 524.9M674.1 533.2L670.8 530.0L667.8 526.4L663.1 524.9M620.2 427.6L616.5 430.9L611.7 432.6M620.2 427.6L620.8 431.5L623.2 434.4L625.0 437.7L626.8 440.9L629.1 444.0M612.6 435.5L615.3 438.1L617.1 441.6L621.0 443.0L623.3 446.0M629.1 444.0L623.3 446.0M623.3 446.0L620.1 449.1L617.2 452.3L616.1 456.7M604.8 471.8L608.2 473.6L612.1 474.1L614.8 477.2L618.6 478.1M618.6 478.1L620.0 474.3L623.2 471.4L622.6 466.6L625.9 463.7M616.1 456.7L619.0 459.5L623.2 460.6L625.9 463.7M629.1 444.0L632.4 444.0M632.4 444.0L634.2 447.6L633.8 451.5L632.1 455.4L632.8 459.2L634.1 462.9M625.9 463.7L632.5 463.7M634.1 462.9L632.5 463.7M662.1 519.7L657.9 516.6M648.5 529.5L650.3 526.7L650.4 522.7L653.0 519.7M663.1 524.9L660.1 528.5L660.3 533.1M653.0 519.7L657.9 516.6M640.2 462.9L634.1 462.9M640.2 462.9L644.2 466.2M632.5 463.7L632.3 467.6L633.0 471.4L634.5 475.1L633.3 479.0M637.2 480.4L633.3 479.0M637.2 480.4L640.9 477.8L643.8 474.4L646.7 471.0M646.7 471.0L644.2 466.2M825.6 487.1L823.6 491.5L825.5 496.3L824.0 500.7M833.0 502.5L833.7 498.1L835.7 494.0L838.4 490.1M832.6 502.8L827.8 503.2M837.8 489.3L838.4 490.1M824.0 500.7L827.8 503.2M843.1 465.0L847.6 465.2L851.3 468.1L856.1 466.9L860.0 469.2M860.0 469.2L861.2 472.7M845.3 479.1L850.1 480.8M850.1 480.8L854.7 479.3L857.9 475.9L861.2 472.7M1001.0 401.9L997.0 400.8L993.0 399.8L990.0 396.6M994.1 413.3L992.8 409.4L989.3 407.3L987.0 404.2M987.0 404.2L987.0 399.8L990.0 396.6M995.5 388.6L992.9 391.9L989.3 394.2M990.0 396.6L989.3 394.2M964.1 393.2L963.4 396.9L963.4 400.6L963.6 404.3M952.0 389.3L950.1 392.4M963.6 404.3L959.5 404.8L957.0 408.6L953.1 409.4M953.1 409.4L950.1 406.9M950.1 406.9L950.4 403.3L948.6 399.7L948.8 396.0L950.1 392.4M939.8 368.9L938.2 373.3L939.3 377.8L939.0 382.3M932.3 364.8L929.0 368.7M929.0 368.7L927.0 373.5L928.1 378.5M928.1 378.5L931.5 380.4L935.2 381.4L939.0 382.3M944.9 385.2L941.2 384.6M941.2 384.6L939.0 382.3M928.0 355.4L923.6 356.6L919.2 358.1L914.5 357.5M914.5 357.5L912.9 361.0L910.4 364.0M913.3 368.9L917.2 370.0L921.1 368.2L925.0 368.5L929.0 368.7M913.3 368.9L910.5 364.6M907.4 346.2L911.8 349.5M907.4 346.2L906.8 343.9M906.8 343.9L907.0 342.2M911.8 349.5L915.5 348.0L918.5 345.0L922.7 344.6M907.9 340.5L911.4 339.0L915.0 339.2L918.5 340.2L922.0 340.6M907.9 340.5L907.0 342.2M922.7 344.6L922.0 340.6M914.5 357.5L914.6 353.0L911.8 349.5M910.4 364.0L907.3 360.4L902.4 359.8L898.5 357.4M898.5 357.4L900.4 354.3L902.8 351.7L904.7 348.5L907.4 346.2M928.0 350.7L925.3 347.6L922.7 344.6M909.4 328.8L910.0 332.8L908.7 336.6L907.9 340.5M925.7 327.1L925.7 330.7L923.7 333.8L923.1 337.3L922.0 340.6M876.0 323.2L878.9 325.6L882.6 325.8M888.8 315.4L888.0 318.9L886.6 322.2L884.4 325.2M882.6 325.8L884.4 325.2M898.5 357.4L894.1 358.7L889.5 358.0M889.5 358.0L888.8 353.6M906.8 343.9L902.7 345.0L898.6 345.9L894.4 345.9M888.8 353.6L891.4 349.6L894.4 345.9M901.2 382.6L900.4 383.5M901.2 382.6L900.0 379.2L899.2 375.7L898.4 372.2M900.4 383.5L896.7 381.6L892.4 383.2L888.7 381.3M898.4 372.2L894.4 370.6L891.8 367.2M891.8 367.2L890.1 370.7L887.4 373.8L886.8 377.9M886.8 377.9L888.7 381.3M911.8 380.8L908.4 382.3L904.4 380.4L901.2 382.6M911.8 380.8L911.7 376.8L913.1 372.9L913.3 368.9M910.5 364.6L906.8 365.4L905.2 369.6L901.8 371.0L898.4 372.2M889.5 358.0L889.0 358.8M889.0 358.8L890.7 362.9L891.8 367.2M848.0 310.1L845.3 310.9M848.0 310.1L848.0 314.7L847.9 319.3L850.2 323.6M845.3 310.9L840.8 314.2M841.1 327.2L841.0 322.9L841.4 318.5L840.8 314.2M841.1 327.2L843.9 329.2M843.9 329.2L847.0 326.4L850.2 323.6M848.0 310.1L851.3 307.9M859.9 323.8L857.0 326.6M850.2 323.6L853.6 325.1L857.0 326.6M872.1 374.6L872.0 370.9M872.1 374.6L875.9 374.9L879.6 375.8L883.4 375.7L886.8 377.9M881.4 361.5L876.4 363.3L873.6 367.7M881.4 361.5L885.2 360.3L889.0 358.8M872.0 370.9L873.6 367.7M881.4 361.5L879.2 358.1L877.1 354.7L873.5 352.8L872.0 348.8L868.1 347.1M868.1 347.1L863.5 352.1M873.6 367.7L871.3 364.7L870.0 361.1L866.2 359.1L864.2 356.0L863.5 352.1M858.8 449.0L863.6 452.2M874.8 435.6L874.9 439.3M874.9 439.3L871.2 441.7L869.3 445.8L866.5 449.1L863.6 452.2M860.0 469.2L859.8 464.9L860.9 460.9L863.0 457.1L864.0 453.1M863.6 452.2L864.0 453.1M939.2 459.4L936.3 455.7L935.8 450.9L933.6 446.9M943.6 441.9L942.8 442.1L938.9 442.2L935.3 444.2M933.6 446.9L935.3 444.2M718.0 491.0L718.5 494.9L721.6 497.5M718.0 491.0L721.5 488.0L723.2 483.3L727.2 480.6M721.6 497.5L725.0 496.4L728.0 494.2L732.0 494.4L734.6 491.4M734.6 491.4L735.6 485.5M735.6 485.5L732.0 481.2M727.2 480.6L732.0 481.2M729.2 424.4L730.4 428.6L728.9 433.1L730.5 437.3M729.2 424.4L725.2 424.2L722.7 427.7L718.9 427.9L715.6 429.3L712.3 431.0M712.3 431.0L710.8 434.8L710.4 439.0M710.4 439.0L713.3 441.6L715.4 444.9L717.8 448.0M717.8 448.0L721.7 446.3L723.8 442.2L727.4 440.1L730.5 437.3M838.4 490.1L842.9 491.7M850.1 480.8L850.2 485.0M850.2 485.0L846.9 490.3M846.9 490.3L842.9 491.7M812.6 310.4L806.6 313.4M812.6 310.4L811.9 306.5L812.9 302.6L813.0 298.7M806.6 313.4L802.6 312.2L800.0 308.5L796.0 307.2M813.0 298.7L809.5 299.6L806.2 301.5L802.2 300.4L798.7 301.1L795.2 302.0M795.2 302.0L796.0 307.2M791.8 313.5L794.4 310.7L796.0 307.2M801.3 325.7L803.7 321.9L804.8 317.5L806.6 313.4M793.3 299.9L795.2 302.0M807.8 203.1L807.0 203.6M807.0 203.6L806.6 202.8M796.5 191.6L800.4 193.2M806.3 210.1L807.0 203.6M793.6 199.2L797.8 198.5L801.0 199.0M835.9 288.4L833.7 282.6M835.9 288.4L839.5 289.2L842.1 291.9M842.1 291.9L841.0 287.7L841.5 283.4L842.5 279.1L841.0 274.9M833.7 282.6L836.1 278.2L840.0 275.1M840.0 275.1L841.0 274.9M823.6 281.5L828.7 281.2L833.7 282.6M827.6 291.6L831.9 290.4L835.9 288.4M826.0 298.1L828.3 300.2M828.3 300.2L833.3 299.7M833.3 299.7L837.0 298.0L840.0 295.5L842.1 291.9M847.0 293.2L842.1 291.9M833.3 299.7L836.9 301.9L839.9 304.6L842.2 308.2L845.3 310.9M849.7 270.1L845.5 272.7L841.0 274.9M830.5 271.4L834.9 274.1L840.0 275.1M1001.8 364.5L1002.1 361.0M1001.8 364.5L1002.3 368.1L1003.4 371.4L1003.7 375.1L1006.4 377.9M1002.1 361.0L1005.6 358.9M1005.6 358.9L1009.4 360.8L1009.6 360.9M1006.4 377.9L1008.8 376.0M988.6 374.5L992.4 374.7L995.4 377.1M995.4 377.1L998.1 374.5L997.2 370.1L999.7 367.4L1001.8 364.5M990.4 360.6L994.3 360.6L998.2 360.7L1002.1 361.0M1003.8 380.4L1006.4 377.9M998.8 381.1L995.4 377.1M1006.5 354.0L1005.6 358.9M785.4 444.5L784.6 443.6M783.5 428.6L784.7 432.3L784.4 436.1L784.7 439.8L784.6 443.6M843.1 387.7L838.5 386.2L833.9 387.4M843.1 387.7L843.4 392.6L846.1 396.7M833.9 387.4L835.1 390.9L833.4 394.6L834.9 398.1L834.8 401.7M846.1 396.7L845.3 397.9M845.3 397.9L841.7 401.6L836.7 403.2M836.7 403.2L834.8 401.7M839.9 374.5L843.6 375.9M843.6 375.9L846.1 381.2M846.1 381.2L843.8 384.1L843.1 387.7M846.1 381.2L850.6 382.4L854.8 384.2M848.1 396.1L846.1 396.7M822.5 399.2L826.5 400.3L830.5 401.7L834.8 401.7M865.2 398.9L863.7 403.0M852.0 405.8L849.9 400.8L845.3 397.9M837.4 410.6L838.4 406.8L836.7 403.2M821.9 322.3L821.3 318.7L819.6 315.4M821.9 322.3L823.2 323.4M823.2 323.4L825.7 323.7M825.7 323.7L827.9 320.1L831.9 318.8L836.1 318.0L838.3 314.3M819.6 315.4L823.4 314.0L824.1 309.2L828.1 307.9M828.1 307.9L831.5 310.0L834.0 313.6L838.3 314.3M806.6 328.2L809.8 325.2L814.5 326.0L818.7 325.4L821.9 322.3M812.6 310.4L815.3 314.1L819.6 315.4M819.7 337.6L819.5 333.8L822.7 330.8L823.1 327.2L823.2 323.4M832.6 337.4L829.7 341.3M832.6 337.4L833.0 333.4L832.7 329.4M832.7 329.4L829.7 326.0L825.7 323.7M841.1 327.2L836.5 327.0L832.7 329.4M840.8 314.2L838.3 314.3M828.3 300.2L829.5 304.1L828.1 307.9M801.8 358.6L803.2 358.9M801.8 358.6L797.7 359.9L795.0 363.3M803.2 358.9L805.3 362.4L807.2 366.0L807.4 370.2M795.0 363.3L794.9 367.6L795.8 371.6L798.3 375.2M807.4 370.2L802.2 371.5L798.3 375.2M796.6 351.3L798.3 355.6L801.8 358.6M814.4 352.0L811.3 355.5L806.3 355.6L803.2 358.9M790.1 362.6L795.0 363.3M813.6 371.6L807.4 370.2M794.3 380.3L798.3 375.2M664.3 343.2L665.1 347.1L665.4 350.9L664.6 354.8L664.0 358.6M664.3 343.2L667.3 345.6L670.9 347.3L674.8 348.4L678.1 350.6L681.0 353.3L683.8 356.0M664.0 358.6L668.0 358.7L672.1 358.8L675.8 356.5L679.8 356.2L683.8 356.0M693.3 377.5L688.9 372.9M693.3 377.5L696.7 375.9L699.5 373.6L702.9 372.0L705.8 369.6L708.3 366.8M688.9 372.9L688.9 369.0L692.5 366.8L692.5 362.9L693.6 359.6L696.2 357.0M708.3 366.8L705.5 364.0L702.5 361.6L699.7 358.8L696.2 357.0M736.0 303.6L733.6 306.9L729.6 307.7L727.1 310.9L723.0 311.4M722.7 295.2L720.3 298.1L719.5 301.7M719.5 301.7L722.3 306.2L723.0 311.4M733.5 325.9L730.5 323.6L727.5 321.2L724.9 318.4L721.8 316.2M723.0 311.4L721.8 316.2M664.3 343.2L664.0 342.1M684.9 355.3L683.8 356.0M684.9 355.3L684.5 351.0L683.1 347.0L681.4 343.1M681.4 343.1L677.1 342.1L672.7 343.5L668.5 340.8L664.0 342.1M681.4 343.1L682.6 338.6L686.4 335.9M664.0 342.1L663.4 341.1M663.4 341.1L667.1 339.9L670.5 338.4L674.1 337.1L677.3 335.0L680.6 333.2L683.9 331.2M686.4 335.9L683.9 331.2M661.6 329.9L665.3 329.3L668.7 328.0L672.2 327.1L675.1 324.7L678.5 323.3M662.0 339.8L663.4 341.1M678.5 323.3L680.4 327.2L683.8 329.9M683.8 329.9L683.9 331.2M661.6 329.9L662.1 326.1L665.4 323.4L666.5 319.9L667.6 316.4L667.6 312.5L668.9 309.0M678.5 323.3L679.0 316.9M679.0 316.9L675.1 314.9L671.9 312.1L668.9 309.0M766.0 369.9L761.1 371.0L756.2 369.7M766.0 369.9L766.5 373.8L769.3 377.1L768.9 381.3M768.9 381.3L764.9 384.3L763.3 389.1M756.2 369.7L755.6 370.7M755.6 370.7L757.5 374.4L755.8 378.8L758.9 382.3L758.7 386.5M758.7 386.5L762.8 389.5M769.0 367.1L766.0 369.9M754.2 364.8L756.4 359.8M754.2 364.8L756.2 369.7M775.6 380.3L768.9 381.3M784.2 391.0L779.9 391.4L775.9 388.8L771.5 391.5L767.5 389.7L763.3 389.1M759.4 247.4L760.8 247.4M759.4 247.4L760.3 243.9L758.8 240.4L759.3 236.8L759.1 233.3M760.8 247.4L764.2 245.2L765.0 240.6L768.9 238.9M759.1 233.3L763.5 234.5L767.9 233.5M767.9 233.5L768.9 238.9M767.6 250.8L764.0 249.6L760.8 247.4M756.9 231.6L759.1 233.3M773.8 241.9L768.9 238.9M783.4 236.8L778.0 232.6M778.0 232.6L773.2 233.1L768.4 232.8M768.4 232.8L767.9 233.5M665.1 225.1L664.4 230.3L661.1 234.4M665.1 225.1L661.9 221.7L658.3 218.7L655.9 214.6M661.1 234.4L657.4 232.5L653.6 231.2L649.5 230.5L645.5 229.8M655.9 214.6L653.0 217.1L649.1 218.5L647.4 222.3M647.4 222.3L646.9 226.0L645.0 229.4M656.8 211.8L655.9 214.6M674.7 212.9L672.6 216.3L672.9 220.3M672.9 220.3L669.2 223.0L665.1 225.1M636.8 203.0L637.6 206.8L640.6 209.3L642.7 212.3L643.3 216.2L645.7 219.0L647.4 222.3M633.5 230.3L631.2 227.4L629.9 224.0M633.5 230.3L637.2 228.5L641.1 228.5L645.0 229.4M636.5 255.2L639.5 252.3L643.4 251.2L647.2 250.0M629.9 250.9L629.4 246.7L632.1 243.0L630.5 238.6L633.2 235.0L633.1 230.9M647.2 250.0L645.2 246.1L647.0 241.8L647.1 237.8L646.7 233.7L645.5 229.8M693.6 272.4L689.8 273.2L686.5 270.9L682.7 271.6L679.1 270.7L675.6 269.7M675.6 269.7L675.7 265.9L673.5 262.6L672.9 259.0M690.0 256.3L686.3 255.7L682.7 255.3L679.1 257.4L675.5 256.5M672.9 259.0L675.5 256.5M664.9 276.1L668.1 278.5M658.3 264.6L660.5 259.4M668.1 278.5L671.3 276.2L673.9 273.3L675.6 269.7M672.9 259.0L668.8 259.6L664.7 260.7L660.5 259.4M692.0 208.1L691.9 204.3L694.6 201.6L696.2 198.5M692.0 208.1L694.5 211.9L698.9 213.5L702.3 216.2M714.8 202.7L712.5 197.9M704.5 215.6L702.3 216.2M696.2 198.5L700.3 198.7L704.3 198.0L708.4 197.7L712.5 197.9M722.3 188.8L719.3 191.6L714.9 192.7L712.5 196.3M712.5 197.9L712.5 196.3M768.9 224.9L772.7 223.0L776.7 221.8M768.9 224.9L765.6 221.8L761.5 219.7M769.9 211.5L772.3 214.8L775.2 217.4L779.0 219.1M769.9 211.5L767.6 214.8L763.7 215.5M779.0 219.1L776.7 221.8M763.7 215.5L761.5 219.7M778.0 232.6L779.1 228.8L776.4 225.5L776.7 221.8M768.4 232.8L769.0 228.9L768.9 224.9M754.4 222.4L758.5 222.4L761.5 219.7M770.9 204.3L771.3 208.0L769.9 211.5M780.5 218.7L779.0 219.1M757.6 205.7L759.6 209.0L761.9 212.1L763.7 215.5M715.2 242.4L718.7 240.0L722.4 238.2L726.4 236.9M715.2 242.4L711.6 238.9L706.8 237.8M706.8 237.8L708.2 234.1M708.2 234.1L711.2 232.0L713.0 228.6L716.4 227.2M726.4 236.9L723.1 233.0L720.4 228.8M720.4 228.8L716.4 227.2M714.7 257.7L715.1 253.9L715.5 250.1L715.2 246.2L715.2 242.4M732.1 238.4L726.4 236.9M703.4 238.8L706.8 237.8M713.0 220.7L714.3 224.2L716.4 227.2M702.3 216.2L702.0 217.0M702.0 217.0L704.3 220.0L703.2 224.3L707.0 226.8L708.5 230.1L708.2 234.1M731.1 211.6L730.2 215.8L727.3 218.7L724.6 221.8L723.5 225.9L720.4 228.8M695.8 225.3L697.0 228.9L696.5 232.5L696.0 236.1M695.8 225.3L691.4 224.2L686.8 224.5M696.0 236.1L692.4 236.1L688.7 235.3L685.4 236.9L681.9 237.9M686.8 224.5L684.6 228.6L680.3 230.2M680.3 230.2L680.1 237.1M680.1 237.1L681.9 237.9M702.0 217.0L699.8 221.9L695.8 225.3M698.6 238.2L696.0 236.1M683.7 212.0L684.9 216.1L686.2 220.2L686.8 224.5M690.3 208.2L692.0 208.1M690.0 256.3L688.7 252.5L685.7 249.4L685.2 245.3L682.2 242.2L681.9 237.9M672.9 220.3L676.2 223.0L678.6 226.3L680.3 230.2M672.6 240.6L672.7 244.7L672.6 248.8L673.2 252.8L675.5 256.5M672.6 240.6L675.7 237.3L680.1 237.1M552.8 457.5L552.9 459.9M545.2 460.9L547.3 464.3M547.3 464.3L549.9 461.8L552.9 459.9M547.2 367.1L544.5 369.5L542.9 372.8L540.8 375.7M547.2 367.1L553.7 366.3M559.5 373.7L556.9 369.8L553.7 366.3M559.5 373.7L558.4 377.3L555.2 379.2M555.2 379.2L550.9 380.5L546.8 379.9L542.7 378.2M540.8 375.7L542.7 378.2M555.2 379.2L554.0 383.2L555.4 387.7L553.0 391.5M553.0 391.5L549.0 390.0L545.0 391.5L541.0 391.7M542.7 378.2L541.9 382.7L540.9 387.1L541.0 391.7M524.0 412.9L521.7 408.3L519.1 403.8M516.4 404.4L517.4 403.7M519.1 403.8L517.4 403.7M499.2 401.7L501.9 398.8L505.4 397.0L508.8 395.2M517.4 403.7L514.9 400.6L512.6 397.2L508.8 395.2M497.4 388.3L501.8 385.8L506.2 383.3M508.8 395.2L506.6 391.5L505.7 387.5L506.2 383.3M502.7 372.1L504.8 376.8L507.2 381.5M506.2 383.3L507.2 381.5M555.7 563.7L560.3 563.2L562.6 564.9M562.4 349.2L565.0 345.3L567.0 340.9M562.4 349.2L562.5 353.7M562.5 353.7L565.6 356.4L569.5 358.1L572.6 360.9M571.1 342.1L567.0 340.9M571.1 342.1L573.6 346.4L575.9 350.8M575.9 350.8L576.2 354.6L573.6 357.5L572.6 360.9M565.8 338.6L567.0 340.9M549.1 346.3L553.7 346.6L557.8 348.7L562.4 349.2M554.3 360.7L557.5 358.8L559.1 355.3L562.5 353.7M574.3 364.5L572.6 360.9M574.3 364.5L572.6 368.4L568.3 370.2L566.6 374.0M566.6 374.0L563.0 374.7L559.5 373.7M553.7 366.3L554.3 360.7M587.1 337.7L582.8 337.8L578.7 338.6L575.1 341.1L571.1 342.1M590.7 341.8L589.7 345.8L588.6 349.8M588.6 349.8L584.5 351.4L580.0 349.4L575.9 350.8M588.6 349.8L588.9 352.2M588.9 352.2L585.5 354.5L584.9 358.8L582.3 361.7L579.9 364.7M579.9 364.7L574.3 364.5M522.1 362.8L526.1 361.6L530.3 361.8L533.7 358.4L538.1 358.9M522.1 362.8L525.2 364.9L527.5 367.6L528.9 371.1L531.4 373.8M531.5 373.7L532.7 369.0L536.7 366.1L538.9 362.0M538.9 362.0L538.1 358.9M539.1 353.4L538.1 358.9M521.5 362.4L519.9 366.1L519.5 370.3L518.5 374.3L515.3 377.4L514.7 381.5M530.8 374.8L531.4 373.8M530.8 374.8L527.9 376.9L525.1 379.0L522.8 381.8L519.3 383.0M519.3 383.0L514.7 381.5M547.2 367.1L543.0 364.6L538.9 362.0M540.8 375.7L535.8 376.2L531.5 373.7M577.2 452.4L574.6 453.7M566.2 440.3L566.1 444.2L563.4 446.9M574.6 453.7L570.9 451.4L568.0 447.7L563.4 446.9M559.1 448.1L560.7 448.1M560.7 448.1L563.4 446.9M569.3 473.8L574.2 474.3L579.0 473.6M569.3 473.8L563.7 469.9M563.7 469.9L563.0 464.2M580.2 472.8L577.0 469.7L576.7 465.0L574.1 461.6L572.5 457.6M580.2 472.8L579.0 473.6M572.5 457.6L567.6 458.9L564.2 462.6M563.0 464.2L564.2 462.6M583.5 472.1L580.2 472.8M574.6 453.7L572.5 457.6M577.7 487.7L577.2 484.1L578.4 480.6L579.0 477.2L579.0 473.6M577.7 487.7L581.3 491.3L586.0 493.7M560.7 448.1L561.2 451.8L562.4 455.4L562.1 459.3L564.2 462.6M552.9 459.9L556.4 461.1L560.1 461.6L563.0 464.2M554.0 555.7L558.4 556.0L562.8 555.4M562.8 555.4L566.7 556.5L568.7 558.8M561.0 507.4L561.6 505.0M577.7 487.7L574.6 489.9L570.8 489.0L567.4 490.2M569.3 473.8L569.1 477.5L567.5 480.7L565.7 483.9L565.4 487.5M565.4 487.5L567.4 490.2M580.3 503.2L576.4 502.8L573.0 501.2L569.8 499.0L566.6 497.0M567.4 490.2L566.6 497.0M571.5 512.1L567.8 513.0M566.6 497.0L564.8 498.9M588.7 413.6L592.2 411.5L595.9 409.7M600.9 413.6L600.0 412.2M595.9 409.7L600.0 412.2M628.0 409.5L623.4 408.8L619.3 411.9L614.8 411.6M628.0 409.5L626.4 413.4L627.8 417.9L624.7 421.4L624.8 425.6M620.5 427.3L617.5 424.4L616.6 420.5L615.1 416.9L613.9 413.2M620.5 427.3L624.8 425.6M613.9 413.2L614.8 411.6M611.9 414.2L613.9 413.2M600.0 412.2L601.7 408.5L604.4 405.7L606.9 402.7L610.4 400.6M610.4 400.6L613.0 403.8L614.5 407.5L614.8 411.6M632.6 345.0L628.5 345.1L625.1 346.9L621.9 349.1L618.1 349.7L615.2 352.6M611.0 345.9L614.1 348.4L614.3 352.3M614.3 352.3L615.2 352.6M662.7 362.0L662.7 363.0M662.7 362.0L659.6 359.7L655.3 360.1L652.5 357.1L648.9 355.9M662.7 363.0L658.9 362.6L656.1 365.6L652.2 365.0L648.8 366.2L645.8 368.4M648.9 355.9L644.8 358.7M644.8 358.7L642.3 364.4M642.3 364.4L645.8 368.4M650.4 343.2L650.3 347.5L650.9 351.8L648.9 355.9M664.0 358.6L662.7 362.0M657.7 382.3L653.0 383.1M657.7 382.3L659.4 379.0L662.2 376.6L664.8 373.9L666.0 370.3M666.0 370.3L664.7 366.5L662.7 363.0M646.7 375.0L649.7 379.2L653.0 383.1M646.7 375.0L645.8 368.4M634.6 346.4L634.2 345.2M634.6 346.4L636.0 350.4L640.0 352.3L641.1 356.6L644.8 358.7M634.3 364.7L633.6 361.0L634.6 357.4L634.3 353.7L633.1 350.1L634.6 346.4M634.3 364.7L638.4 366.1L642.3 364.4M670.8 371.3L674.9 372.2L678.6 370.3M670.8 371.3L670.6 375.1L672.2 378.3L673.1 381.7L676.0 384.6L675.6 388.4M678.6 370.3L680.3 374.3L679.1 378.9L681.5 382.8M675.6 388.4L679.1 386.2L681.5 382.8M666.0 370.3L670.8 371.3M679.1 370.0L679.5 366.2L680.2 362.6L683.9 359.9L683.8 356.0M666.4 390.8L670.8 391.4L675.0 389.8M666.4 390.8L663.5 388.0L660.6 385.1L657.7 382.3M675.0 389.8L675.6 388.4M693.2 378.1L689.0 383.3M689.0 383.3L685.1 384.7L681.5 382.8M688.9 372.9L684.0 371.6L679.1 370.0M678.0 392.9L675.0 389.8M678.0 392.9L681.8 393.8L685.7 393.7L689.6 393.6M689.0 383.3L689.5 388.5L689.6 393.6M261.9 377.5L262.9 378.4M274.2 376.3L270.3 378.7M262.9 378.4L266.5 379.8L270.3 378.7M262.2 392.8L263.3 391.9M262.9 378.4L263.5 382.9L263.4 387.4L263.3 391.9M333.4 369.6L335.2 365.6L338.9 363.4M352.6 377.4L351.0 373.4L352.7 369.5M352.7 369.5L348.7 369.1L345.5 367.0L342.9 363.6L338.9 363.4M340.1 351.7L342.1 355.4M338.9 363.4L341.1 359.7L342.1 355.4M360.5 346.6L360.0 344.1M360.5 346.6L357.0 347.9L354.1 350.3L350.0 350.5L347.5 353.6L344.3 355.6M344.3 355.6L342.1 355.4M525.9 530.3L526.5 530.7M526.5 530.7L526.2 531.1M528.3 529.9L526.5 530.7M525.0 544.8L523.9 539.9M504.5 563.7L504.6 563.8M511.2 555.3L514.3 556.8M514.3 556.8L510.9 558.7L510.1 559.6M509.3 560.5L508.3 561.6L505.9 564.8M504.6 563.8L505.9 564.8M516.5 556.6L514.3 556.8M513.4 571.7L509.4 570.9M509.4 570.9L507.2 568.1L505.9 564.8M525.4 217.5L523.1 214.3L519.6 212.9L516.2 211.5M524.6 224.1L521.3 222.1L517.4 222.5L513.9 221.5M516.2 211.5L516.1 216.7L513.9 221.5M506.5 232.2L505.8 230.5M513.9 221.5L510.6 223.9L508.5 227.5L505.8 230.5M489.0 212.5L491.6 214.9L494.1 217.5L497.0 219.7L498.2 223.6L501.8 225.0L503.9 228.0M496.6 230.0L500.7 231.5L504.6 229.7M503.9 228.0L504.6 229.7M488.9 245.2L491.1 246.1M505.8 230.5L504.6 229.7M516.5 204.9L515.7 209.0M516.5 204.9L515.0 202.4M515.0 202.4L510.8 202.5L506.7 202.6L502.8 204.2L498.8 205.1M515.7 209.0L511.4 210.3L507.6 212.8L503.3 214.3M503.3 214.3L499.7 210.8L495.7 207.7M495.7 207.7L498.8 205.1M530.0 204.9L525.5 204.2L521.0 205.7L516.5 204.9M516.2 211.5L515.7 209.0M514.4 196.5L515.0 202.4M500.3 189.2L500.6 193.2L499.9 197.2L498.5 201.0L498.8 205.1M503.9 228.0L504.0 223.4L501.9 218.9L503.3 214.3M490.1 208.7L495.7 207.7M498.9 188.5L495.8 190.7L492.8 193.4L489.2 194.8L485.5 196.3M499.7 351.9L502.6 348.9L506.3 347.1L509.9 345.1M499.7 351.9L502.6 354.3L506.1 356.0L507.8 359.5L510.2 362.3M509.9 345.1L509.5 349.4L513.5 352.4L512.8 356.8L514.5 360.5M510.2 362.3L514.5 360.5M502.7 372.1L506.2 369.6L508.9 366.5L510.2 362.3M493.6 354.3L494.1 351.9M494.1 351.9L499.7 351.9M518.6 360.8L514.5 360.5M514.7 381.5L510.9 382.4L507.2 381.5M516.8 326.0L512.8 327.4L508.7 328.5M514.0 342.2L513.6 338.4L512.8 334.8L510.9 331.6L508.7 328.5M514.0 342.2L510.1 344.8M475.7 352.6L479.7 349.9L484.4 349.9L488.8 349.1M475.7 352.6L475.1 353.2M488.8 349.1L493.8 351.5M491.2 291.7L490.8 292.8M500.2 308.6L498.1 310.0M490.8 292.8L489.7 297.2L490.7 301.5L491.5 305.8M498.1 310.0L495.7 306.6L491.5 305.8M417.9 360.7L416.6 356.0L417.2 351.2M431.5 342.7L427.2 342.6L423.7 345.0M423.7 345.0L420.0 345.9L418.0 349.1M418.0 349.1L417.2 351.2M423.7 345.0L420.0 344.0L418.9 339.5L416.2 337.3L413.0 335.5L409.7 333.9M418.5 328.8L415.0 330.8L411.0 330.0M409.7 333.9L411.0 330.0M390.4 320.3L392.7 316.6L394.9 312.9L397.7 309.5M390.4 320.3L393.7 325.6M408.6 310.9L408.6 315.4L408.2 319.9L407.1 324.3M407.1 324.3L402.6 324.3L398.0 324.0L393.7 325.6M407.1 324.3L411.0 330.0M390.4 320.3L383.7 318.9M384.1 340.6L388.4 339.7L391.1 336.4M376.5 325.7L380.1 322.3L383.7 318.9M383.9 340.6L382.1 337.1L378.8 335.3L375.6 333.3M393.7 325.6L391.8 328.9L391.9 332.7L391.1 336.4M383.4 308.3L382.9 312.8L383.1 317.4M383.4 308.3L379.4 306.4L375.6 304.0M383.1 317.4L378.9 316.8L376.7 312.3L372.4 311.9M372.4 311.9L373.1 308.2L374.0 304.6M374.0 304.6L375.6 304.0M389.0 305.0L383.4 308.3M383.7 318.9L383.1 317.4M380.3 294.7L376.7 298.7L375.6 304.0M366.7 317.2L370.4 315.4L372.4 311.9M352.2 304.3L355.7 299.3M355.7 299.3L360.1 298.8M360.1 298.8L363.9 299.4L366.5 303.0L369.9 304.5L374.0 304.6M373.9 288.1L369.9 290.1L366.7 293.1L362.9 295.3L360.1 298.8M435.0 281.9L439.2 282.2L442.1 285.7L445.8 287.1L449.9 287.3M435.0 281.9L436.4 278.7L438.9 275.8L437.9 271.7L439.8 268.7M449.9 287.3L448.6 283.5L445.5 280.6L444.4 276.7L442.2 273.3L441.9 269.1M439.8 268.7L441.9 269.1M432.3 282.3L435.0 281.9M451.9 288.7L449.9 287.3M437.6 266.7L439.8 268.7M450.0 255.3L450.6 258.8L452.5 261.9L453.3 265.4M453.3 265.4L449.4 266.2L445.4 267.0L441.9 269.1M351.7 275.6L350.9 275.4M351.7 275.6L354.4 278.4L352.5 282.8L353.6 286.1L356.0 289.0M350.9 275.4L347.8 277.9L345.1 280.8L342.2 283.4M342.2 283.4L345.4 285.8L348.4 288.4L350.6 292.1L354.6 293.5M356.0 289.0L354.6 293.5M361.0 271.4L356.5 273.8L351.7 275.6M364.4 265.3L361.1 264.0L357.7 262.5L353.8 263.6L350.1 263.4L347.0 260.9M347.0 260.9L344.6 264.0L344.1 267.8M344.1 267.8L346.3 272.7L350.9 275.4M363.3 281.2L360.0 283.0L359.0 286.9L356.0 289.0M330.3 282.6L331.6 279.2L333.1 275.8L337.5 274.4L338.1 270.5M330.3 282.6L334.2 283.2L338.2 283.8L342.2 283.4M344.1 267.8L338.1 270.5M355.7 299.3L354.6 293.5M326.0 284.7L330.3 282.6M358.3 237.6L359.8 241.4L362.9 244.1M358.3 237.6L359.0 233.2L360.0 228.8L360.6 224.4M360.6 224.4L365.7 223.6L370.7 225.0M367.9 242.6L362.9 244.1M367.9 242.6L368.0 238.7L368.6 234.9L369.2 231.1L371.6 227.8M371.6 227.8L370.7 225.0M371.9 223.2L370.7 225.0M350.5 216.0L349.0 211.0M350.5 216.0L354.3 218.2L356.8 222.1L360.6 224.4M365.1 264.8L364.3 261.3L362.0 258.1L362.6 254.3L362.2 250.7L361.1 247.2M369.8 243.1L367.9 242.6M361.1 247.2L362.9 244.1M381.5 233.1L379.0 229.9L374.5 230.4L371.6 227.8M339.5 248.2L333.0 248.1M339.5 248.2L342.3 252.3L345.6 256.0M345.5 256.7L342.0 257.9L338.6 259.5L334.7 259.0L331.1 259.9M333.0 248.1L329.5 252.4M329.5 252.4L328.4 258.8M328.4 258.8L331.1 259.9M347.0 260.9L345.5 256.7M361.1 247.2L357.5 248.8L353.5 249.1M353.5 249.1L350.1 253.1L345.6 256.0M338.1 270.5L334.5 267.8L334.8 262.5L331.1 259.9M317.5 250.6L321.1 247.3M321.1 247.3L325.1 250.2L329.5 252.4M323.3 261.7L328.4 258.8M345.8 240.9L349.7 239.1L353.0 236.3M345.8 240.9L343.0 240.7M343.0 240.7L341.2 236.9L338.8 233.4M353.0 236.3L351.4 232.8L347.3 231.1L346.4 227.1M346.4 227.1L343.6 231.5L338.8 233.4M353.5 249.1L350.4 246.9L347.7 244.3L345.8 240.9M358.3 237.6L353.0 236.3M339.5 248.2L341.0 244.4L343.0 240.7M350.5 216.0L349.1 219.7L346.2 222.8L346.4 227.1M360.6 377.6L362.2 374.4L361.9 370.5L364.3 367.6M352.7 369.5L355.2 365.0M364.3 367.6L359.3 367.6L355.2 365.0M344.3 355.6L347.5 358.3L351.7 359.3L354.9 362.0M354.9 362.0L355.2 365.0M403.1 167.9L399.2 166.5L396.3 163.2L392.1 162.1M403.1 167.9L403.1 163.5L405.7 159.7L406.3 155.5M392.1 162.1L394.5 157.9L398.2 154.7M406.3 155.5L402.2 155.7L398.2 154.7M405.2 170.5L403.1 167.9M409.7 153.8L406.3 155.5M376.7 165.0L375.1 168.6M376.7 165.0L380.9 163.9L385.3 164.3L389.6 164.0M375.1 168.6L375.9 174.6M375.9 174.6L380.2 175.8L384.5 174.8L388.8 174.7M388.8 174.7L388.9 171.1L389.1 167.5L389.6 164.0M356.8 156.5L357.7 156.1M357.7 156.1L361.9 155.6L365.8 157.1L369.6 158.6L373.8 158.7M373.8 158.7L376.7 165.0M361.9 168.5L366.3 167.1L370.7 167.2L375.1 168.6M371.6 184.5L372.9 181.1L373.6 177.5L375.9 174.6M392.1 180.8L388.8 174.7M391.1 162.3L392.1 162.1M391.1 162.3L389.6 164.0M321.1 247.3L321.4 241.6M309.8 245.6L313.5 242.1L318.5 241.1M321.4 241.6L318.5 241.1M333.0 248.1L331.0 244.3L328.5 240.7L328.0 236.2M321.4 241.6L323.6 237.6L328.0 236.2M459.8 270.1L461.0 266.8L463.2 263.9L463.3 260.1L465.5 257.2M459.8 270.1L462.1 274.7M466.8 274.6L462.1 274.7M466.8 274.6L468.8 271.5L470.0 268.1L470.9 264.4L474.4 262.2L473.8 257.8L476.7 255.2M465.5 257.2L469.4 256.8L473.1 256.2L476.3 253.8M476.3 253.8L476.7 254.6M460.9 252.5L465.5 257.2M453.3 265.4L457.2 266.8L459.8 270.1M456.7 283.6L460.7 279.9L462.1 274.7M472.0 275.8L466.8 274.6M478.2 288.7L475.1 292.6M482.8 271.4L481.3 267.4L481.0 262.8L477.3 259.6L476.7 255.2M476.8 250.3L476.3 253.8M490.9 259.5L487.6 257.5L483.3 258.4L480.7 254.5L476.7 254.6M379.9 139.2L382.0 140.9L384.8 145.3M367.4 138.1L366.8 139.9M378.5 151.4L375.9 148.8L372.3 148.0L368.8 147.0L366.1 144.6M378.5 151.4L383.3 148.9M366.1 144.6L366.8 139.9M383.3 148.9L384.8 145.3M354.3 137.0L355.0 137.3L356.4 137.2M360.0 137.5L362.9 139.1L366.8 139.9M357.7 156.1L359.1 152.8L362.5 150.8L363.1 146.9L366.1 144.6M373.8 158.7L377.2 155.7L378.5 151.4M391.1 162.3L390.0 158.5L387.1 155.7L385.8 152.0L383.3 148.9M611.2 196.0L606.6 193.5M611.2 196.0L609.5 199.2L607.1 202.0L606.1 205.6M606.6 193.5L604.3 197.0L600.3 197.7M600.3 197.7L599.6 204.0M599.6 204.0L606.1 205.6M613.7 196.1L611.2 196.0M606.3 192.2L606.6 193.5M612.2 212.8L608.2 210.0L606.1 205.6M592.9 192.5L596.9 194.7L600.3 197.7M597.7 205.5L599.6 204.0M597.6 214.4L600.9 216.9L605.1 217.2M605.1 217.2L611.2 215.7M592.0 217.5L592.4 221.8L595.5 224.7M605.1 217.2L602.9 221.2L601.6 225.6M601.6 225.6L595.5 224.7M584.8 229.6L589.0 229.5L593.2 228.9M595.5 224.7L593.2 228.9M588.5 242.2L592.8 242.5L596.7 241.1L600.7 240.1M593.2 228.9L595.2 233.0L597.9 236.6L600.7 240.1M595.2 255.7L595.8 251.3L598.3 247.8L601.9 244.8L602.6 240.4M600.7 240.1L602.6 240.4M626.5 232.4L622.7 232.6L619.3 230.4L615.7 229.5L611.8 230.1M626.5 232.4L622.5 233.8L620.8 238.4L617.5 240.8L613.0 241.5L609.9 244.2M611.8 230.1L609.9 233.7L606.7 236.1M606.7 236.1L605.6 240.1M609.9 244.2L605.6 240.1M633.1 230.9L626.5 232.4M614.3 221.3L613.3 225.8L611.8 230.1M613.9 250.8L612.8 246.9L609.9 244.2M601.6 225.6L603.0 229.3L604.6 232.8L606.7 236.1M602.6 240.4L605.6 240.1M574.7 198.7L573.3 200.0M574.7 198.7L571.5 195.3L570.9 190.7L569.3 186.6M573.3 200.0L570.0 198.4L566.5 197.7L563.2 196.0M569.3 186.6L568.3 190.4L565.6 193.1L563.2 196.0M575.6 198.5L574.7 198.7M571.7 205.5L573.3 200.0M569.8 181.4L569.3 186.6M560.9 196.7L563.2 196.0M613.9 153.5L612.1 148.9L611.1 144.0M613.9 153.5L620.0 155.7M611.1 144.0L615.2 142.5L619.4 142.6L623.6 143.3M627.2 154.7L625.3 150.1L625.8 145.2M627.2 154.7L623.4 153.7L620.0 155.7M625.8 145.2L623.6 143.3M610.3 143.3L606.1 144.6L603.9 148.4L601.8 152.3L597.7 153.7M610.3 143.3L611.1 144.0M601.0 165.1L604.0 162.0L606.6 158.3L610.8 156.5L613.9 153.5M615.1 170.7L614.8 166.5L617.8 163.3L618.9 159.5L620.0 155.7M632.8 158.7L627.2 154.7M641.4 135.6L638.5 137.9L635.0 139.2L631.9 141.1L629.3 143.9L625.8 145.2M622.9 131.4L623.8 135.3L623.0 139.3L623.6 143.3M622.9 131.4L627.1 132.0L631.5 131.1L635.5 133.5L639.8 133.3M733.6 164.2L726.9 164.6M733.6 164.2L736.9 160.8L736.7 155.8L739.4 152.2M726.9 164.6L723.8 161.6L723.3 157.3L722.6 153.3L720.3 149.9M739.4 152.2L737.6 147.5M720.3 149.9L723.7 148.0M723.7 148.0L727.6 146.1L731.6 145.6L735.8 146.7M737.6 147.5L735.8 146.7M719.8 172.4L721.6 169.3L723.5 166.3L726.9 164.6M735.0 165.1L733.6 164.2M752.8 154.5L748.3 154.2L743.7 153.7L739.4 152.2M716.9 148.5L720.3 149.9M746.6 137.1L743.7 140.6L741.7 144.9L737.6 147.5M730.2 132.4L728.2 136.2L727.7 140.5L725.2 144.1L723.7 148.0M730.2 132.4L730.2 130.7M730.2 132.4L731.3 136.1L731.7 140.1L735.4 142.7L735.8 146.7M488.1 164.5L492.0 163.9L494.9 167.1L498.6 167.1M488.1 164.5L487.8 160.0M482.6 169.3L485.2 171.8L486.1 175.4L488.2 178.3M482.6 169.3L479.4 168.6M479.4 168.6L475.4 169.8L472.9 173.1M472.9 173.1L474.2 177.6L478.9 179.6L480.6 183.8M480.6 183.8L484.7 181.4L488.2 178.3M494.6 178.3L488.2 178.3M488.1 164.5L485.6 167.2L482.6 169.3M478.4 164.8L479.4 168.6M471.0 173.0L472.9 173.1M480.0 185.5L480.6 183.8M703.8 440.4L699.4 439.2M703.8 440.4L703.3 444.1L703.6 447.9L703.4 451.6M699.4 439.2L697.3 442.4L695.3 445.7L694.2 449.5M703.4 451.6L698.5 452.0L694.2 449.5M621.4 394.0L625.4 394.9L628.9 393.7L631.9 390.1L635.9 390.8M621.4 394.0L624.7 396.5L625.5 400.8L627.2 404.4L630.5 406.8M636.2 400.0L635.7 395.4L635.9 390.8M636.2 400.0L635.0 404.2L631.2 406.4M618.4 501.8L622.5 500.8L625.9 497.7L630.4 497.9L634.4 496.8M618.4 501.8L617.2 496.7L615.8 491.7M634.4 496.8L633.1 492.9L629.7 490.1L627.4 486.6L626.9 482.4M615.8 491.7L617.5 488.5L619.5 485.5L620.5 482.0M620.5 482.0L626.9 482.4M603.2 487.7L607.4 489.1L611.8 489.8L615.8 491.7M618.6 478.1L620.5 482.0M633.3 479.0L630.9 482.2L626.9 482.4M651.6 506.7L648.3 508.9L644.7 510.4L640.4 510.6L640.3 510.7M651.6 506.7L648.5 504.1L646.2 500.5L642.8 498.4L639.2 496.4M637.8 505.7L637.9 505.2L637.7 501.2L637.5 497.2M639.2 496.4L637.5 497.2M644.1 489.6L641.5 492.8L639.2 496.4M644.1 489.6L641.3 487.0L638.8 484.0L637.2 480.4M634.4 496.8L637.5 497.2M617.9 504.5L617.5 503.9M616.7 504.6L617.5 503.9M618.4 501.8L617.5 503.9M653.0 519.7L648.7 518.7L644.4 518.3L639.8 519.9L638.0 518.9M601.3 502.1L604.3 504.7L608.2 503.9L612.0 503.6L613.6 504.9M658.3 493.8L662.3 495.4L666.8 495.8L670.6 497.9L674.0 500.9M658.3 493.8L657.1 497.1L655.9 500.4L654.6 503.7L654.2 507.3M654.2 507.3L657.6 512.6M657.6 512.6L661.2 510.8L663.8 507.6L668.0 506.7L670.8 503.8L673.8 501.2M644.1 489.6L648.1 489.2L651.4 486.9L655.3 486.2M655.3 486.2L657.5 489.7L658.3 493.8M651.6 506.7L654.2 507.3M657.9 516.6L657.6 512.6M674.8 518.0L676.2 513.7L674.2 509.6L675.1 505.3L673.8 501.2M655.3 486.2L656.1 484.7M646.7 471.0L650.6 472.0L652.8 475.4M656.1 484.7L653.7 480.3L652.8 475.4M703.2 487.0L705.9 483.6L705.5 479.4L705.2 475.2L707.3 471.6M703.2 487.0L706.9 488.1L710.5 489.4L714.3 490.0L718.0 491.0M727.2 480.6L722.7 478.2L720.0 473.9M720.0 473.9L715.6 474.2L711.5 472.8L707.3 471.6M691.8 450.5L694.2 449.5M691.8 450.5L692.8 454.0L692.1 457.8L692.6 461.4L693.9 464.9M703.4 451.6L705.5 456.2L710.0 458.5M710.0 458.5L708.9 463.6L705.8 468.0M705.8 468.0L702.1 466.2L698.0 466.3L694.2 465.2M671.7 484.5L671.8 488.6L672.4 492.7L673.3 496.8L674.0 500.8M671.7 484.5L676.3 482.4M676.3 482.4L680.1 483.8L682.1 487.3M682.1 487.3L683.3 491.4L683.8 495.5M683.8 495.5L679.7 500.2M674.0 500.8L679.7 500.2M656.1 484.7L659.9 483.6L663.7 482.4M663.7 482.4L667.8 482.9L671.7 484.5M702.1 488.0L697.7 487.4L694.5 484.2L690.6 482.3M702.1 488.0L700.7 491.8M700.7 491.8L696.6 493.0L692.4 494.4L688.1 495.0L683.8 495.5M690.6 482.3L685.9 484.0L682.1 487.3M685.2 520.5L680.1 521.0M685.2 520.5L683.0 516.5L682.7 512.1L685.0 507.5L682.7 503.5M682.7 503.5L679.7 500.2M701.7 386.0L697.9 386.9L695.5 389.5L693.0 392.0L690.6 394.6M701.7 386.0L706.7 385.4L711.1 387.9M711.1 387.9L710.6 391.1M710.6 391.1L706.0 392.2L702.4 394.8L699.0 397.9M699.0 397.9L695.3 395.7L690.9 395.3M693.2 378.1L695.0 381.9L698.2 384.1L701.7 386.0M689.6 393.6L690.6 394.6M780.6 503.8L784.3 503.3L787.8 504.0L790.8 506.7L794.4 506.7M780.6 503.8L780.4 507.5L777.9 510.7L777.9 514.5L776.5 517.9M776.5 517.9L779.8 521.8M794.4 506.7L795.9 510.3L795.8 514.0L794.3 517.6M794.3 517.6L790.7 518.8L787.5 521.1L783.4 520.7L779.8 521.8M794.4 506.7L800.3 503.2M809.4 514.8L805.2 516.8L800.6 517.7L796.6 520.1M809.4 514.8L811.1 511.2M811.1 511.2L810.3 507.6L810.0 503.9M810.0 503.9L807.9 502.3M794.3 517.6L796.6 520.1M800.3 503.2L804.2 503.8L807.9 502.3M817.9 482.0L813.7 483.9L810.6 487.0L808.1 490.7M810.0 503.9L813.6 503.4L816.7 501.0L820.4 500.8L824.0 500.7M807.9 502.3L806.3 498.4L808.9 494.6L808.1 490.7M805.0 477.1L803.6 481.5L802.1 485.9M808.1 490.7L805.4 487.9L802.1 485.9M749.2 479.9L746.1 482.5L741.5 482.1L738.7 485.3M749.2 479.9L750.4 483.5L753.5 485.6M738.7 485.3L743.0 486.6L744.3 491.6L748.5 492.9M753.5 485.6L752.7 491.8M748.5 492.9L752.7 491.8M757.7 501.2L756.1 494.8M757.7 501.2L755.3 505.7M755.3 505.7L751.1 505.3L747.3 507.4M756.1 494.8L752.7 491.8M748.5 492.9L746.2 497.1L743.4 501.0M747.3 507.4L745.8 503.9L743.4 501.0M738.7 485.3L735.6 485.5M734.6 491.4L735.3 495.3L737.4 498.6M737.4 498.6L743.4 501.0M700.7 491.8L701.5 497.5M682.7 503.5L686.5 503.8L690.3 503.9L693.4 506.5M701.5 497.5L698.6 500.3L694.9 502.4L693.4 506.5M685.2 520.5L689.0 521.5M689.0 521.5L691.0 518.2L693.8 515.4M693.4 506.5L694.6 510.9L693.8 515.4M770.6 421.7L773.5 425.1L777.1 427.2L781.3 428.4M770.6 421.7L766.6 424.0L762.6 426.2L759.7 430.0M781.3 428.4L779.6 431.8L777.2 434.6L774.0 436.7L770.5 438.4L768.5 441.7M768.5 441.7L766.6 438.6L765.3 435.0L762.6 432.4L759.7 430.0M802.2 472.4L798.4 471.3L794.4 471.5M801.8 454.3L800.2 458.0L796.3 459.6L794.1 462.8M794.4 471.5L793.1 467.2L794.1 462.8M785.4 451.2L785.4 455.9L787.3 460.2M794.1 462.8L791.2 460.0L787.3 460.2M785.4 451.2L782.0 453.6L777.2 452.7L774.0 455.8M774.0 455.8L777.3 459.3L780.1 463.3M787.3 460.2L783.7 461.6L780.1 463.3M780.6 503.8L780.2 503.0M776.5 517.9L772.6 520.0L768.4 519.3L764.3 519.0M764.3 519.0L762.4 513.9M762.4 513.9L765.8 511.6L766.1 507.3L768.1 504.1L770.7 501.3M780.2 503.0L775.2 503.3L770.7 501.3M757.7 501.2L761.2 500.7L764.6 499.2L768.2 499.6M756.1 494.8L758.8 491.4L763.4 491.3L766.5 488.6M766.5 488.6L767.6 492.2L766.3 496.2L768.2 499.6M762.4 513.9L760.2 511.1L758.2 508.0L755.3 505.7M770.7 501.3L768.2 499.6M850.2 485.0L854.8 487.3L858.7 490.7M861.2 472.7L862.4 473.6M858.7 490.7L860.0 486.5L861.2 482.3L860.5 477.7L862.4 473.6M873.4 502.0L873.0 502.1M884.4 485.0L880.2 488.1M878.2 496.9L878.8 495.4L879.9 491.8L880.2 488.1M982.8 387.1L986.7 390.0L989.3 394.2M982.8 387.1L979.9 389.2L976.7 390.6L973.3 391.6L969.5 391.5L966.4 393.3M989.3 394.2L985.4 393.7L982.0 395.1L979.3 398.7L975.3 398.2M966.4 393.3L971.1 395.4L975.3 398.2M981.2 378.5L983.0 382.6L982.8 387.1M964.2 393.2L966.4 393.3M987.0 404.2L985.3 405.4M985.3 405.4L981.2 404.4L976.9 404.2M976.9 404.2L975.3 398.2M963.6 404.3L965.9 407.8L969.1 410.5M976.9 404.2L972.5 406.7L969.1 410.5M933.7 436.2L937.7 434.6L940.0 430.4L944.1 428.9M933.7 436.2L934.8 432.4L935.5 428.6L932.9 424.7L934.1 420.9M934.1 420.9L937.6 419.3M937.6 419.3L940.0 420.4M940.0 420.4L941.6 424.9L944.1 428.9M950.1 438.9L949.7 437.3L950.0 433.5M933.3 437.0L935.5 440.3L935.3 444.2M933.3 437.0L933.7 436.2M950.0 433.5L946.4 432.0L944.1 428.9M928.1 378.5L924.8 380.3L923.6 383.8M941.2 384.6L938.1 387.8L934.9 390.8M934.9 390.8L931.9 387.2L928.0 385.1L923.6 383.8M911.8 380.8L917.1 385.2M917.1 385.2L922.3 384.5M922.3 384.5L923.6 383.8M897.5 337.7L894.4 338.8M897.5 337.7L898.8 333.7L900.8 329.9L901.5 325.7M901.5 325.7L897.2 328.0L892.3 327.7M892.3 327.7L891.6 332.4L892.0 337.2M894.4 338.8L892.0 337.2M907.0 342.2L903.5 341.3L900.3 339.8L897.5 337.7M894.4 345.9L894.4 342.3L894.4 338.8M902.4 325.2L901.5 325.7M884.4 325.2L888.5 326.0L892.3 327.7M887.6 352.1L886.1 347.7L885.4 343.2L884.6 338.7M887.6 352.1L883.3 351.8L881.1 347.3L876.4 347.9L873.6 344.5L869.6 343.5M869.7 342.4L869.6 343.5M869.7 342.4L874.0 341.0L878.5 340.1L881.9 336.6M881.9 336.6L884.6 338.7M888.8 353.6L887.6 352.1M892.0 337.2L888.2 337.4L884.6 338.7M868.1 347.1L869.6 343.5M868.9 330.9L867.0 334.7L867.4 338.9M867.4 338.9L869.7 342.4M882.6 325.8L881.8 329.4L882.6 333.1L881.9 336.6M917.1 385.2L915.1 388.9L914.3 392.8L914.5 397.0M900.4 383.5L899.1 388.0L898.8 392.7M898.8 392.7L900.4 395.7M900.4 395.7L903.9 396.9L907.6 394.7L910.8 398.0L914.5 397.0M872.9 418.0L877.0 418.3L880.1 415.7M875.5 434.1L881.5 431.0M885.9 424.8L884.1 428.2L881.5 431.0M885.9 424.8L882.5 421.0L881.2 416.1M880.1 415.7L881.2 416.1M870.9 393.5L875.6 395.2M880.1 415.7L879.8 411.4L878.6 407.4L876.9 403.5L876.0 399.4L875.6 395.2M888.7 381.3L887.2 384.9L885.6 388.5L883.1 391.5L880.6 394.6M875.6 395.2L880.6 394.6M898.8 392.7L895.2 392.2L891.7 392.5L888.3 394.3L884.6 393.1L881.3 394.8M855.2 335.6L854.8 339.6L854.2 343.6L854.5 347.6M855.0 335.4L851.0 335.1L847.1 335.5M847.4 345.8L851.4 345.2L854.5 347.6M847.4 345.8L844.8 339.5M847.1 335.5L844.9 338.4M844.8 339.5L844.9 338.4M857.0 351.4L861.4 352.7M857.0 351.4L854.5 347.6M867.4 338.9L863.4 337.8L859.6 335.6L855.2 335.6M861.4 352.7L863.5 352.1M857.0 326.6L854.7 330.7L855.0 335.4M843.9 329.2L845.5 332.4L847.1 335.5M844.7 351.4L847.4 345.8M849.9 355.1L853.9 354.1L857.0 351.4M834.1 351.4L837.4 349.1L838.9 345.0L842.2 342.6L844.8 339.5M832.6 337.4L836.8 336.5L840.9 336.5L844.9 338.4M863.0 367.4L860.3 363.8L859.2 359.5M863.0 367.4L857.8 368.1L853.0 370.1M859.2 359.5L855.9 363.1L851.3 364.5M851.3 364.5L852.2 369.8M872.0 370.9L867.9 368.0L863.0 367.4M861.4 352.7L861.3 356.4L859.2 359.5M857.8 377.3L854.4 374.3L853.0 370.1M848.4 361.6L851.3 364.5M843.6 375.9L846.3 373.6L849.7 372.2L852.2 369.8M883.8 473.1L884.1 469.0L884.0 464.9L885.9 461.1M882.9 474.5L878.8 475.6L874.8 473.2L870.7 472.7L866.6 472.7L862.5 473.7M864.0 453.1L867.5 454.2L871.4 454.2L874.7 456.2L878.5 456.4L882.2 457.1L885.2 459.8M885.9 461.1L885.2 459.8M923.1 401.5L922.5 406.0L924.5 410.0M923.1 401.5L929.0 398.9M924.5 410.0L928.6 407.9L933.2 410.3L937.2 408.3M929.0 398.9L933.9 399.1M933.9 399.1L936.6 401.5M936.6 401.5L937.9 406.2M937.2 408.3L937.9 406.2M922.3 384.5L925.5 387.4L926.1 391.5L928.2 394.9L929.0 398.9M914.5 397.0L915.6 399.4M915.6 399.4L919.8 398.8L923.1 401.5M934.9 390.8L934.6 395.0L933.9 399.1M950.1 392.4L946.5 394.3L943.3 396.9L939.0 397.8L936.6 401.5M950.1 406.9L946.1 405.6L942.0 405.7L937.9 406.2M953.1 409.4L954.0 413.0L952.4 416.4M937.6 419.3L935.9 415.7L936.2 412.0L937.2 408.3M952.4 416.4L948.8 419.2L944.2 419.2L940.0 420.4M912.8 405.5L915.6 399.4M912.8 405.5L912.4 409.5L914.7 412.9M924.2 410.6L919.8 413.2L914.7 412.9M732.0 481.2L733.2 477.6L736.0 474.8L736.7 471.0M720.0 473.9L723.8 471.2L725.2 466.8M725.2 466.8L730.1 467.8L735.0 466.9M735.0 466.9L736.7 471.0M750.1 475.7L745.8 473.8L742.1 470.9M750.1 475.7L753.2 473.4M753.2 473.4L756.0 469.7L756.1 465.1M756.1 465.1L752.0 463.0L747.5 462.0M747.5 462.0L744.3 466.2L742.1 470.9M749.2 479.9L750.1 475.7M742.1 470.9L736.7 471.0M846.9 490.3L848.7 493.5L851.0 496.1L855.4 496.7L856.8 500.3M842.9 491.7L842.4 495.8L843.9 499.6M856.8 500.3L855.2 502.9M855.2 502.9L853.5 504.1M853.5 504.1L850.1 504.1M848.7 502.4L847.5 500.2L843.9 499.6M839.3 502.1L839.9 501.8L843.9 499.6M684.9 355.3L690.1 355.0M686.4 335.9L690.6 337.6M690.6 337.6L689.3 341.9L690.7 346.3L688.8 350.6L690.1 355.0M690.1 355.0L696.0 356.6M697.1 337.2L690.6 337.6M697.1 337.2L702.0 339.6M696.0 356.6L697.4 353.2L700.8 351.1L702.1 347.6L703.6 344.2M702.0 339.6L703.6 344.2M712.2 282.5L707.7 283.2L703.4 282.5L699.1 281.1M696.0 275.0L697.5 279.1M697.5 279.1L699.1 281.1M666.6 305.5L667.4 305.9M666.6 305.5L663.9 300.0M667.4 305.9L670.6 303.1L674.9 302.4L679.0 301.2L682.1 298.3M663.9 300.0L665.5 296.0L666.0 291.7L669.2 288.2L669.4 283.8M672.3 284.4L669.5 283.6M672.3 284.4L676.2 286.4L677.7 290.8L681.4 292.9M681.4 292.9L682.1 298.3M653.8 312.5L656.6 310.0L659.5 307.8L662.7 305.9L666.6 305.5M668.9 309.0L667.4 305.9M648.2 293.7L651.6 296.7L655.9 297.3L659.8 299.0L663.9 300.0M647.3 289.1L651.3 289.6L654.5 286.8L657.9 284.8L661.7 284.1L665.5 284.1L669.4 283.8M694.5 273.8L691.0 274.6L688.8 278.2L684.4 277.0L681.6 279.5L678.0 280.1L675.8 283.6L672.3 284.4M668.1 278.5L669.5 283.6M697.5 279.1L695.6 282.4L692.8 284.4L688.4 284.8L687.1 288.6L683.8 290.2L681.4 292.9M784.2 391.0L782.6 394.2L780.6 397.1L776.5 398.2L776.2 402.6L772.7 404.2M762.8 389.5L762.8 390.5M762.8 390.5L765.9 393.5L767.3 397.6L770.3 400.7L772.7 404.2M783.4 409.3L779.9 408.3L776.2 408.9L772.9 407.3M770.6 421.7L768.4 416.9L769.4 411.7M783.5 428.6L781.3 428.4M772.9 407.3L769.4 411.7M772.9 407.3L772.7 404.2M745.6 420.3L744.2 419.5M745.6 420.3L749.5 419.4L752.8 416.9L757.0 416.7L760.5 414.7L764.1 413.0L767.8 411.5M767.8 411.5L763.8 410.5L761.3 407.0L757.9 405.0L754.2 403.6M744.2 419.5L746.7 416.6L749.5 413.9L749.3 409.4L751.9 406.6L754.2 403.6M762.8 390.5L759.2 393.2L755.9 396.2L753.8 400.2M769.4 411.7L767.8 411.5M754.2 403.6L753.8 400.2M755.6 370.7L752.6 372.7L749.9 375.3L746.0 375.7M758.7 386.5L753.9 387.1L749.3 385.4M749.3 385.4L747.2 380.7L746.0 375.7M739.7 366.2L736.9 363.1M739.7 366.2L743.5 363.5L748.1 362.7M736.9 363.1L738.5 359.8L738.7 356.2M748.1 362.7L747.9 357.5L745.3 353.0M745.3 353.0L741.5 353.6L738.7 356.2M717.3 373.7L720.1 371.2L724.2 370.5L726.2 366.8L730.1 365.9L732.6 362.9M717.3 373.7L717.8 375.2M717.8 375.2L721.4 375.1L725.0 374.2L728.5 374.2L732.1 374.5L735.7 373.0L739.3 374.5M732.6 362.9L736.9 363.1M739.8 374.1L740.5 370.1L739.7 366.2M754.2 364.8L748.1 362.7M746.0 375.7L739.8 374.1M750.7 343.2L747.6 345.7L748.3 350.4L745.3 353.0M743.7 338.6L741.5 342.5L738.3 345.2L734.5 347.2L731.0 349.6M731.0 349.6L733.8 354.1L738.7 356.2M662.6 236.7L666.9 239.6M662.6 236.7L660.1 239.4L657.6 242.1L656.3 245.7L652.5 247.2L650.7 250.6M666.9 239.6L664.0 243.0L665.3 247.7L662.5 251.1L661.9 255.3L660.3 259.1M650.7 250.6L654.4 252.9L657.5 255.9L660.3 259.1M661.1 234.4L662.6 236.7M672.6 240.6L666.9 239.6M647.2 250.0L650.7 250.6M686.8 186.0L689.2 188.7L692.2 190.8L694.8 193.3M686.8 186.0L690.1 184.1L693.7 183.4L697.6 183.6L700.6 181.0L704.5 181.1L707.9 179.8M694.8 193.3L698.8 192.2L700.8 188.2L704.5 186.6L707.8 184.6M707.9 179.8L707.8 184.6M684.9 185.1L686.8 186.0M696.2 198.5L694.8 193.3M708.3 178.7L707.9 179.8M712.5 196.3L710.9 192.4L710.5 188.0L707.8 184.6M520.0 402.7L518.6 398.4L520.8 394.2L521.6 390.0L520.8 385.7M520.0 402.7L523.9 402.8L526.7 400.0L529.8 397.9L533.6 397.8L536.8 395.9M520.8 385.7L524.1 387.0L527.3 388.4L531.0 388.8L533.9 390.9L536.9 392.7M536.8 395.9L537.6 393.4M536.9 392.7L537.6 393.4M519.1 403.8L520.0 402.7M519.3 383.0L520.8 385.7M539.7 405.2L536.7 401.1L536.8 395.9M530.8 374.8L531.6 378.6L531.8 382.5L534.2 385.6L536.7 388.8L536.9 392.7M556.6 395.1L553.0 391.5M541.0 391.7L537.6 393.4M560.8 536.4L563.2 536.9M562.8 555.4L566.3 551.3L567.0 545.9M563.2 536.9L565.1 541.4L567.0 545.9M567.0 545.9L570.7 548.0L574.8 549.5L576.9 550.6M565.4 487.5L562.5 487.7M563.7 469.9L559.6 472.5L555.6 475.2M555.0 480.0L555.0 479.8L555.6 475.2M547.3 464.3L546.7 467.0M555.6 475.2L553.1 472.3L549.2 471.8L548.0 471.0M579.5 408.8L581.9 404.5L582.5 399.9L581.8 395.1M595.9 409.7L595.1 406.1L596.4 402.2L594.1 398.6L594.4 394.9M594.4 394.9L590.2 394.4L586.0 395.0L581.8 395.1M562.6 396.6L566.1 395.3L569.6 394.0L572.5 391.6L575.8 389.8M581.8 395.1L578.7 392.5L575.8 389.8M566.6 374.0L568.1 377.2L571.0 379.6L571.3 383.4L573.5 386.2L575.7 389.0M575.8 389.8L575.7 389.0M610.4 400.6L610.3 396.2L610.0 391.8M628.0 409.5L630.4 407.6M621.4 394.0L617.6 392.9L615.1 389.7M615.1 389.7L611.1 390.9M611.1 390.9L610.0 391.8M594.4 394.9L597.4 393.1M610.0 391.8L605.8 392.2L601.8 394.0L597.4 393.1M618.9 375.9L619.9 372.0L624.1 370.3L625.4 366.6M618.9 375.9L619.3 381.2L617.3 386.2M617.3 386.2L621.5 385.5L625.0 382.4L629.4 382.5L633.6 381.8M629.6 367.2L625.4 366.6M629.6 367.2L630.2 371.2L632.6 374.3L634.4 377.7M634.4 377.7L633.6 381.8M615.1 389.7L617.3 386.2M635.9 390.8L638.1 387.7M638.1 387.7L637.2 383.7L633.6 381.8M634.3 364.7L629.6 367.2M615.2 352.6L618.3 355.7L619.1 360.5L622.7 363.2L625.4 366.6M646.7 375.0L642.8 376.5L638.8 378.0L634.4 377.7M653.0 383.1L648.7 388.2M648.7 388.2L645.1 389.5L641.6 387.4L638.1 387.7M275.5 388.8L271.4 392.7M275.5 388.8L280.1 389.2L284.3 387.2M273.7 398.2L271.4 392.7M273.7 398.2L276.9 400.0L281.0 398.5L283.9 401.2L287.4 401.9M287.7 401.7L287.4 397.7L288.2 393.8L290.2 390.2M290.2 390.2L284.3 387.2M270.3 378.7L272.3 381.9L273.9 385.3L275.5 388.8M263.3 391.9L267.3 392.8L271.4 392.7M280.9 377.1L283.0 380.1L281.9 384.2L284.3 387.2M269.0 409.1L271.6 406.6L273.0 402.6L273.7 398.2M280.4 411.3L281.8 407.5L284.7 404.8L287.4 401.9M295.9 407.6L292.8 403.4L287.7 401.7M298.2 385.9L293.8 387.4L290.2 390.2M406.5 394.2L409.5 398.3L411.4 401.0M488.8 349.1L487.7 344.6L484.5 340.9L484.3 336.2M493.8 351.5L495.7 348.0L494.7 343.5L497.5 340.3M484.3 336.2L489.0 334.6M489.0 334.6L493.4 337.1L497.5 340.3M510.1 344.8L507.9 341.5L504.1 340.5L501.3 338.1M501.3 338.1L497.5 340.3M512.5 314.6L508.7 317.9L505.1 321.3M498.1 310.0L497.6 313.1M497.6 313.1L501.3 314.7L502.5 318.6L505.1 321.3M489.0 334.6L490.8 330.3L494.8 327.8M501.3 338.1L500.5 333.6L502.6 329.4M494.8 327.8L498.6 329.0L502.6 329.4M508.7 328.5L505.6 327.7M505.1 321.3L505.6 327.7M505.6 327.7L502.6 329.4M490.8 292.8L487.9 295.6L484.4 297.8L480.8 299.7L477.9 302.6L475.7 306.2M491.5 305.8L487.0 306.3L482.6 307.0L478.3 308.4M478.3 308.4L475.7 306.2M458.1 315.2L461.5 316.6L464.7 318.6M472.4 303.1L474.3 305.6M474.3 305.6L471.3 308.3L469.2 311.8L468.2 316.2L464.7 318.6M474.3 305.6L475.7 306.2M458.2 329.7L461.8 326.8L462.3 322.2L464.7 318.6M407.8 341.9L408.2 345.8L406.4 349.1L405.4 352.6M407.8 341.9L406.4 338.5M406.4 338.5L400.9 339.2M400.9 339.2L401.2 343.7L397.8 347.4L398.3 351.9M398.3 351.9L402.7 355.4M402.7 355.4L405.4 352.6M418.0 349.1L413.6 348.1L410.9 344.7L407.8 341.9M417.2 351.2L413.4 352.9L409.2 351.1L405.4 352.6M409.7 333.9L406.4 338.5M391.1 336.4L396.2 337.3L400.9 339.2M391.2 350.9L394.7 351.5L398.3 351.9M403.6 362.5L403.4 358.9L402.7 355.4M367.4 366.1L365.0 362.3L364.2 358.0L363.0 353.7M367.4 366.1L369.5 366.7M371.9 365.6L369.5 366.7M371.9 365.6L373.7 361.5L373.6 357.0M373.6 357.0L369.5 355.4L367.5 351.5M367.5 351.5L363.7 351.2M363.7 351.2L363.0 353.7M364.3 367.6L367.4 366.1M354.9 362.0L356.6 358.3L361.0 357.2L363.0 353.7M372.7 381.2L370.6 377.9L370.5 374.1L371.6 370.1L369.5 366.7M379.0 366.3L375.6 365.3L371.9 365.6M380.0 357.1L373.6 357.0M381.2 344.2L378.1 346.7L374.3 347.7L370.9 349.6L367.5 351.5M360.5 346.6L363.7 351.2M338.8 233.4L334.4 231.6L329.7 232.4M328.0 236.2L329.0 233.0M329.7 232.4L329.0 233.0M345.0 211.3L342.1 214.3L338.1 215.6L334.6 217.7L331.1 219.7M329.7 232.4L330.6 228.2L331.7 224.1L331.1 219.7M321.8 201.6L322.1 205.8L323.6 209.7L324.2 213.8L326.8 217.3M326.8 217.3L331.1 219.7M310.4 211.5L311.9 215.3L316.7 215.8L318.4 219.5M326.8 217.3L322.7 218.8L318.4 219.5M403.4 144.0L403.5 144.2M391.3 140.4L389.9 143.2M389.9 143.2L392.7 146.3L397.0 146.8M403.5 144.2L399.7 144.2L397.0 146.8M404.9 144.5L403.5 144.2M384.8 145.3L389.9 143.2M398.2 154.7L397.0 150.9L397.0 146.8M610.3 143.3L608.6 138.6M608.6 138.6L606.3 136.7M622.9 131.4L620.9 129.7M608.6 138.6L611.2 135.7L615.6 135.2L617.2 131.0L620.9 129.7M660.7 533.2L664.2 533.3L665.3 534.2M674.1 533.2L674.3 535.7M640.2 462.9L641.0 458.8L644.3 456.2M644.2 466.2L647.4 464.6L650.8 463.5L653.9 461.7M653.9 461.7L653.3 455.4M644.3 456.2L648.9 456.8L653.3 455.4M636.2 400.0L639.9 398.1L644.0 397.8L648.1 397.5M631.2 406.4L634.8 406.1L638.4 404.9L642.0 405.3L645.6 406.5M645.6 406.5L648.0 402.3L648.1 397.5M648.7 388.2L650.1 392.4L648.9 396.6M648.1 397.5L648.9 396.6M710.0 458.5L714.2 457.2L716.5 453.6M725.2 466.8L723.8 460.1M707.3 471.6L705.8 468.0M723.8 460.1L719.3 457.8L716.5 453.6M710.4 439.0L703.8 440.4M717.8 448.0L717.3 451.7M717.3 451.7L716.5 453.6M663.7 482.4L665.6 478.9L667.5 475.5L667.9 471.5M652.8 475.4L655.3 471.2L658.8 467.8M658.8 467.8L662.9 470.8L667.9 471.5M653.9 461.7L659.0 464.2M658.8 467.8L659.0 464.2M678.7 477.5L683.6 478.3L688.5 479.2M678.7 477.5L678.1 473.0M678.1 473.0L682.1 471.1L686.1 469.4L690.5 469.3M688.5 479.2L688.8 474.1L690.5 469.3M690.6 482.3L688.5 479.2M676.3 482.4L678.7 477.5M703.2 487.0L702.1 488.0M694.2 465.2L690.5 469.3M710.6 391.1L713.0 394.6L712.5 398.8M699.0 397.9L700.8 404.5M700.8 404.5L704.5 406.6L708.8 405.6M712.5 398.8L710.1 401.9L708.8 405.6M801.9 527.4L799.9 530.8L797.5 533.7L796.4 534.2M801.9 527.4L798.2 525.9L797.0 522.1M797.0 522.1L793.4 523.6L792.6 527.9L789.0 529.4L787.1 532.6M787.1 532.6L787.2 533.0M802.8 528.1L801.9 527.4M809.6 521.3L810.0 518.6L809.4 514.8M796.6 520.1L797.0 522.1M780.4 524.7L779.8 521.8M780.4 524.7L783.1 529.2L787.1 532.6M772.8 533.7L773.0 533.1L774.1 532.0M775.1 531.1L775.8 530.6L778.6 528.1L780.4 524.7M797.7 485.3L793.9 487.0L792.5 490.9M797.7 485.3L794.6 482.4L794.4 477.8L791.5 474.8M791.5 474.8L787.5 475.8M787.5 475.8L787.0 479.7L783.2 482.4L781.8 486.0L782.0 490.2M792.5 490.9L787.4 490.3L782.3 491.0M782.3 491.0L782.0 490.2M800.3 503.2L799.3 499.5L797.5 496.3L795.6 493.2L792.5 490.9M802.1 485.9L797.7 485.3M794.4 471.5L791.5 474.8M780.2 503.0L780.5 498.9L781.7 495.0L782.3 491.0M701.5 497.5L703.8 501.2L707.9 503.7L709.9 507.8M693.8 515.4L697.3 515.3L700.9 515.5L704.2 514.1L707.7 513.5M709.9 507.8L707.7 513.5M721.6 497.5L721.1 501.5L721.3 505.5M709.9 507.8L714.0 508.5L717.3 505.2L721.3 505.5M759.0 455.9L762.6 456.3L766.3 457.2L769.7 454.2L773.4 455.2M759.0 455.9L756.8 449.8M756.8 449.8L761.2 448.1L765.2 445.8L768.6 442.6M773.4 455.2L772.9 450.2L771.5 445.5M771.5 445.5L768.6 442.6M758.0 463.9L761.0 466.2L764.9 466.5M758.0 463.9L760.2 460.1L759.0 455.9M773.7 455.7L770.2 458.3L769.9 463.2L766.7 466.0M764.9 466.5L766.7 466.0M784.6 443.6L780.4 445.4L776.0 445.7L771.5 445.5M768.5 441.7L768.6 442.6M747.4 449.2L752.0 450.0L756.6 449.7M747.4 449.2L746.6 444.6L745.9 439.9M756.6 449.7L755.1 445.8L756.6 441.6L756.7 437.5L755.9 433.5L754.1 429.6M745.9 439.9L747.2 435.5L749.7 432.1L753.2 429.3M753.2 429.3L754.1 429.6M759.7 430.0L754.1 429.6M745.6 420.3L748.6 422.9L749.4 427.4L753.2 429.3M786.3 475.2L785.2 471.5L780.7 470.7L779.4 467.1M786.3 475.2L782.7 475.2L779.7 477.9L775.8 476.2L772.6 478.2M779.4 467.1L774.1 469.5M772.6 478.2L774.3 474.0L774.1 469.5M780.1 463.3L779.4 467.1M787.5 475.8L786.3 475.2M766.7 466.0L770.4 467.6L774.1 469.5M767.3 486.5L770.7 484.5M767.3 486.5L761.2 483.7M761.2 483.7L759.8 480.5L759.5 476.9M771.1 480.1L768.6 476.9L765.3 474.4M771.1 480.1L770.7 484.5M759.5 476.9L765.3 474.4M766.5 488.6L767.3 486.5M782.0 490.2L777.8 489.1L774.5 486.2L770.7 484.5M753.5 485.6L757.3 484.5L761.2 483.7M753.2 473.4L757.1 473.8L759.5 476.9M764.9 466.5L764.8 470.5L765.3 474.4M772.6 478.2L771.1 480.1M756.1 465.1L758.0 463.9M811.1 511.2L814.9 513.6L816.5 515.8M827.8 503.2L828.2 506.4M878.0 488.5L874.5 490.6L872.6 494.6L870.2 494.7M878.0 488.5L872.7 488.3L867.7 486.4M867.7 486.4L865.5 489.6L863.5 493.1L861.2 496.2M862.1 497.3L861.2 497.0M880.2 488.1L878.0 488.5M862.5 473.7L865.4 477.4L865.4 482.4L867.7 486.4M858.7 490.7L861.2 496.2M855.3 503.1L855.2 502.9M856.8 500.3L861.2 497.0M985.3 405.4L982.8 408.1L982.4 411.8M969.1 410.5L970.0 413.8M970.0 413.8L974.2 413.7L978.5 413.9L982.4 411.8M992.3 418.2L986.2 420.7M982.4 411.8L983.6 416.6L986.2 420.7M986.2 420.7L985.8 421.4M956.1 426.8L953.7 422.6L953.7 417.7M956.1 426.8L960.2 425.7L964.1 426.9L965.3 427.3M953.7 417.7L957.8 418.4L961.6 415.8L965.5 415.6L969.6 416.7M968.1 425.9L968.2 424.7L970.8 421.5L969.8 417.6M969.8 417.6L969.6 416.7M952.4 416.4L953.7 417.7M950.0 433.5L952.8 429.9L956.1 426.8M970.0 413.8L969.6 416.7M980.4 422.0L977.8 419.0L973.2 420.4L969.8 417.6M902.6 407.0L899.3 401.7M902.6 407.0L903.2 412.2L900.7 416.9M899.3 401.7L894.5 402.3L890.7 405.4M900.7 416.9L897.3 414.5L892.7 414.4L889.7 411.4M889.7 411.4L890.7 405.4M900.4 395.7L899.3 401.7M912.8 405.5L907.7 405.8L902.6 407.0M903.2 422.3L907.3 421.3L911.3 422.6M903.2 422.3L900.7 416.9M911.4 422.6L914.0 418.1L914.7 412.9M881.3 394.8L884.3 396.8L885.2 400.8L887.6 403.4L890.7 405.4M885.9 424.8L889.6 426.7L893.7 427.3L897.8 427.6M881.2 416.1L885.2 413.3L889.7 411.4M897.8 427.6L900.6 425.1L903.2 422.3M885.8 445.5L887.1 450.6M885.8 445.5L889.0 442.9L889.7 438.9M887.1 450.6L890.3 448.5L894.3 448.9L897.3 446.3L901.4 446.8L904.5 444.4M889.7 438.9L893.8 437.1L897.3 434.4M897.3 434.4L899.9 437.6L903.3 440.2L904.5 444.4M874.9 439.3L877.9 442.4L882.2 443.4L885.8 445.5M885.2 459.8L884.9 455.0L887.1 450.6M881.5 431.0L883.4 434.5L886.4 436.8L889.7 438.9M897.8 427.6L897.3 434.4M885.9 461.1L889.8 462.4L893.7 461.3L897.6 460.5L901.4 460.7M904.5 444.4L906.1 445.3M906.1 445.3L906.3 449.6L903.9 453.1L901.5 456.5L901.4 460.7M908.5 472.8L908.5 472.1L910.8 469.0M901.4 460.7L905.1 462.8L907.2 466.7L910.8 469.0M924.6 466.9L922.2 465.9M922.2 465.9L917.6 465.5M910.8 469.0L914.2 467.2L917.6 465.5M929.5 421.2L927.6 420.4M929.5 421.2L928.9 425.4L926.7 429.1L925.1 433.0M927.6 420.4L923.5 419.6L919.8 421.8L916.2 423.7L912.0 422.7M912.0 422.7L914.9 425.4L918.8 427.0L920.9 430.7L923.9 433.3M925.1 433.0L923.9 433.3M934.1 420.9L929.5 421.2M924.2 410.6L924.4 416.0L927.6 420.4M933.3 437.0L929.7 434.0L925.1 433.0M845.9 511.2L845.0 511.5L844.8 511.5M853.5 504.1L853.0 505.1M720.7 344.5L716.8 345.8L712.9 346.9M720.7 344.5L722.4 348.2L725.7 350.3M712.9 346.9L713.3 351.1L712.8 355.1L712.6 359.2L709.2 362.9L710.3 367.2M725.7 350.3L725.6 351.4M725.6 351.4L722.3 353.6L720.8 356.9L719.6 360.3L718.4 363.7L715.7 366.3L714.4 369.6M714.4 369.6L710.3 367.2M734.3 327.5L730.2 329.1L728.7 333.8L725.1 335.9L721.7 338.3M731.0 349.6L725.7 350.3M721.7 338.3L720.7 344.5M708.3 366.8L710.3 367.2M703.6 344.2L708.5 344.8L712.9 346.9M732.6 362.9L730.4 358.9L729.2 354.4L725.6 351.4M717.3 373.7L714.4 369.6M717.8 375.2L717.5 380.7M717.5 380.7L714.0 384.0L711.1 387.9M715.6 333.5L711.7 333.9L707.8 334.3L704.4 336.7M715.6 333.5L714.3 328.3M714.3 328.3L710.4 325.8L705.8 326.6M704.4 336.7L706.1 331.8L705.8 326.6M721.7 338.3L718.4 336.2L715.6 333.5M702.0 339.6L704.4 336.7M721.8 316.2L720.5 316.6M720.5 316.6L719.3 321.0L716.8 324.6L714.3 328.3M720.5 316.6L716.5 316.2L712.6 315.5M705.8 326.6L705.2 325.6M712.6 315.5L709.3 318.2L708.7 323.0L705.2 325.6M697.1 337.2L697.9 333.5L698.6 329.8L695.6 326.1L696.9 322.3M705.2 325.6L700.8 324.7L696.9 322.3M683.8 329.9L686.9 327.8L690.3 326.2L693.7 324.5L696.3 321.6M696.9 322.3L696.3 321.6M715.1 290.9L711.5 293.2L709.7 297.6L705.3 299.1M699.1 281.1L700.8 285.1L700.5 289.4L699.9 293.7L700.8 297.9M700.8 297.9L705.3 299.1M719.5 301.7L715.6 301.1L711.5 302.4L707.7 300.7M705.3 299.1L707.7 300.7M712.6 315.5L711.1 314.5M707.7 300.7L707.4 304.4L710.3 307.4L711.1 310.8L711.1 314.5M753.8 400.2L750.9 397.7L747.0 397.5M749.3 385.4L746.0 388.0M747.0 397.5L745.8 392.9L746.0 388.0M739.3 374.5L738.7 378.7L738.8 383.1L737.2 387.1M746.0 388.0L741.6 386.9L737.2 387.1M717.5 380.7L722.3 382.4L725.0 386.7M725.0 386.7L729.0 388.1L733.1 386.9L737.2 387.2M566.7 518.4L567.5 519.8L571.3 523.2M563.2 536.9L568.0 535.2M568.0 535.2L570.7 531.6L569.3 526.9L571.3 523.2M580.5 518.4L578.7 522.9M571.3 523.2L575.0 522.7L578.7 522.9M593.6 379.9L596.8 378.0L600.3 376.9L603.2 374.5M593.6 379.9L591.0 376.9L587.7 374.7M587.6 370.9L590.8 368.3L595.2 367.9L598.1 364.7L602.1 363.6M587.6 370.9L587.7 374.7M603.2 374.5L602.5 370.5L603.5 366.6M603.5 366.6L602.4 363.6M611.1 390.9L608.8 388.0L609.3 383.7L606.9 380.8L605.9 377.3L603.2 374.5M597.4 393.1L597.0 388.4L593.3 384.7L593.6 379.9M575.7 389.0L578.9 386.8L581.2 383.9L583.1 380.6L586.1 378.3L587.7 374.7M588.9 352.2L591.9 355.4L595.8 357.5L598.6 361.1L602.1 363.6M579.9 364.7L583.1 368.6L587.6 370.9M618.9 375.9L616.0 373.8L612.9 371.8L609.9 369.9L605.9 369.5L603.5 366.6M614.3 352.3L612.5 356.4L609.0 358.7L605.6 361.0L602.4 363.6M502.6 587.2L497.9 582.9M494.6 584.6L497.9 582.9M509.4 570.9L505.5 572.0L504.6 576.6L502.0 579.3L498.2 580.6M504.6 563.8L504.2 563.9M496.3 576.2L497.2 576.6L498.2 580.6M498.2 580.6L497.9 582.9M497.6 313.1L494.4 316.3L491.2 319.4M478.3 308.4L479.4 311.4M479.4 311.4L482.3 313.4L485.2 315.6L488.1 317.7L491.2 319.4M494.8 327.8L492.8 324.3L491.1 320.6M491.1 320.6L491.2 319.4M317.9 223.4L320.4 226.7L322.3 230.3M317.9 223.4L314.5 224.8L311.0 225.8L307.7 227.5M322.3 230.3L318.9 232.2L315.4 233.9L311.4 233.7M311.4 233.7L307.5 233.1M307.5 233.1L307.3 228.1M329.0 233.0L325.6 231.7L322.3 230.3M318.4 219.5L317.9 223.4M309.5 212.3L310.5 216.2L308.9 219.9L307.8 223.6L307.7 227.5M318.5 241.1L314.5 237.8L311.4 233.7M306.9 233.8L307.5 233.1M304.0 226.7L307.3 228.1M620.9 129.7L620.8 129.0M632.4 444.0L635.5 442.0M644.3 456.2L643.7 451.8L644.1 447.5M644.1 447.5L640.4 443.9L635.5 442.0M624.8 425.6L631.3 427.2M631.3 427.2L633.2 430.7L636.6 433.4L637.0 437.8M635.5 442.0L637.0 437.8M653.3 455.4L655.2 453.2M644.1 447.5L647.3 445.0L651.4 445.4M651.4 445.4L654.9 446.4M654.9 446.4L655.2 453.2M663.5 441.0L660.3 438.8L656.7 437.1L654.0 434.1M651.4 445.4L649.1 440.5L648.7 435.2M654.9 446.4L659.3 443.9L663.6 441.5M654.0 434.1L648.7 435.2M637.0 437.8L641.1 435.8L644.9 433.3M648.7 435.2L644.9 433.3M690.9 395.3L689.5 399.5L688.8 403.9M700.8 404.5L697.6 406.5L695.3 409.4M695.3 409.4L692.7 406.0L688.8 403.9M736.0 459.6L740.0 459.2L743.4 457.1M736.0 459.6L735.3 459.0M735.3 459.0L732.3 453.0M746.2 450.2L744.4 453.5L743.4 457.1M746.2 450.2L742.1 449.3L738.7 446.3L734.5 445.9M734.5 445.9L732.6 449.2L732.3 453.0M735.0 466.9L735.9 463.3L736.0 459.6M747.5 462.0L743.4 457.1M723.8 460.1L727.7 460.9L731.3 457.8L735.3 459.0M717.3 451.7L721.2 450.5L724.9 451.8L728.5 454.1L732.3 453.0M747.4 449.2L746.2 450.2M730.6 437.4L732.8 441.5L734.5 445.9M730.6 437.4L734.4 438.0L738.3 438.1L742.1 439.1L745.9 439.9M708.8 405.6L709.6 410.7M695.6 412.1L695.3 409.4M695.6 412.1L699.9 412.9L704.1 414.2L708.5 414.3M709.6 410.7L708.5 414.3M704.5 424.9L709.1 427.1L712.3 431.0M704.5 424.9L706.1 420.0L708.8 415.6M708.8 415.6L712.8 415.7L715.7 418.3L719.1 419.6L723.2 419.5L725.9 422.6L729.4 423.7M744.2 419.5L739.3 417.5L734.1 418.1M729.4 423.7L732.2 421.2L734.1 418.1M764.3 519.0L761.0 523.1M767.3 538.3L764.7 536.5L764.7 532.2L761.7 530.1M761.7 530.1L760.9 523.4M750.7 536.4L746.5 533.2M750.7 536.4L750.7 536.7M739.3 534.9L741.5 534.9L746.5 533.2M761.7 530.1L758.3 532.6L753.9 533.5L750.7 536.4M748.4 526.6L752.8 526.4L756.7 524.5L760.9 523.4M748.4 526.6L746.5 533.2M737.4 498.6L734.8 503.2L730.2 505.8M721.3 505.5L722.6 506.5M730.2 505.8L726.5 507.5L722.6 506.5M913.0 441.6L910.7 444.7M913.0 441.6L919.6 439.3M910.7 444.7L913.6 447.4L916.0 450.6M916.0 450.6L920.1 448.8L924.5 449.6L928.8 449.0M919.6 439.3L922.1 441.9L924.5 444.7L929.0 444.4L931.3 447.3M928.8 449.0L931.3 447.3M911.3 422.6L912.2 426.4L911.3 430.3L913.6 433.9L913.0 437.8L913.0 441.6M906.1 445.3L910.7 444.7M923.9 433.3L921.6 436.2L919.6 439.3M917.6 465.5L917.6 461.7L916.3 458.1L914.8 454.5L916.0 450.6M922.2 465.9L922.8 462.2L926.1 459.6L926.7 456.0L927.4 452.4L928.8 449.0M933.6 446.9L931.3 447.3M687.6 302.0L691.7 300.7L695.6 298.4L700.1 298.5M687.6 302.0L686.8 305.5L688.2 309.2L686.7 312.7M700.1 298.5L698.5 302.4L700.0 306.3L699.0 310.1L699.9 314.0M686.7 312.7L689.6 314.8L693.5 315.0L695.9 317.9M695.9 317.9L699.9 314.0M682.1 298.3L687.6 302.0M700.8 297.9L700.1 298.5M679.0 316.9L682.4 313.9L686.7 312.7M711.1 314.5L707.3 314.6L703.6 314.6L699.9 314.0M696.3 321.6L695.9 317.9M737.3 394.5L742.3 399.3M737.3 394.5L734.1 396.1L731.1 398.1L728.0 399.9M742.3 399.3L741.6 403.3L737.3 405.5L736.2 409.3L735.4 413.2L733.6 416.6M728.0 399.9L726.8 405.3M726.8 405.3L728.4 409.4M733.6 416.6L730.7 413.2L728.4 409.4M747.0 397.5L742.3 399.3M737.2 387.2L737.1 390.8L737.3 394.5M725.0 386.7L726.9 390.9L725.9 395.8L728.0 399.9M734.1 418.1L733.6 416.6M712.5 398.8L716.4 399.8L719.8 401.9L723.5 403.3L726.8 405.3M709.6 410.7L713.3 410.3L717.0 409.0L720.9 410.6L724.7 410.0L728.4 409.4M708.8 415.6L708.5 414.3M568.0 535.2L570.9 535.5M570.9 535.5L574.8 537.8L575.6 542.3L579.5 544.5L580.4 547.1M590.5 535.9L586.7 536.9L582.3 538.0M582.3 538.0L583.1 541.7L582.5 545.0M587.1 528.9L583.1 532.2L578.2 534.1M587.1 528.9L583.4 525.5L579.0 523.4M579.0 523.4L579.0 527.1L578.1 530.5L576.3 533.7M578.2 534.1L576.3 533.7M593.3 529.4L587.1 528.9M582.3 538.0L578.2 534.1M570.9 535.5L576.3 533.7M390.8 398.1L390.9 401.8L394.4 404.5L393.2 408.7L396.3 411.4L396.4 411.5M483.7 324.7L480.9 322.3L477.3 321.4M483.7 324.7L482.6 328.3L482.7 332.0L483.2 335.8M472.0 333.6L475.8 333.7L478.6 336.3M472.0 333.6L472.5 329.3L472.5 325.0M472.5 325.0L477.3 321.4M478.6 336.3L483.2 335.8M479.4 311.4L478.5 316.4L477.3 321.4M491.1 320.6L487.2 322.3L483.7 324.7M484.3 336.2L483.2 335.8M463.2 337.6L467.4 335.1L472.0 333.6M475.7 352.6L476.2 348.5L477.8 344.6L477.5 340.3L478.6 336.3M464.7 318.6L467.6 323.0L472.5 325.0M659.0 464.2L661.3 461.9M655.2 453.2L658.1 456.1L662.2 456.8M661.3 461.9L662.2 456.8M693.0 418.1L687.7 418.3L682.9 416.2M693.0 418.1L695.6 412.1M688.8 403.9L684.9 405.2L681.3 407.1M682.9 416.2L681.9 411.7L681.3 407.1M688.3 438.4L685.4 434.8L683.8 430.5M688.3 438.4L693.0 438.2L697.6 437.0M683.8 430.5L688.0 429.2L692.3 427.8L695.3 424.3M697.6 437.0L697.0 433.3L697.7 429.7L698.2 426.0M698.2 426.0L695.3 424.3M704.5 424.9L698.2 426.0M699.4 439.2L697.6 437.0M693.0 418.1L695.3 424.3M742.2 520.1L745.6 514.5M742.2 520.1L737.2 520.6L733.3 523.8M733.3 523.8L734.7 519.3L732.9 514.4L734.6 509.9M734.6 509.9L738.4 509.4L742.0 511.7L745.8 510.3M745.8 510.3L745.6 514.5M748.4 526.6L745.4 523.3L742.2 520.1M761.0 523.1L757.7 521.8L755.2 519.0L752.1 517.5L748.3 516.9L745.6 514.5M747.3 507.4L745.8 510.3M730.2 505.8L734.6 509.9M707.7 513.5L708.5 516.6M722.6 506.5L722.6 510.6L725.3 514.3L725.6 518.4L726.1 522.4L726.0 526.5M708.5 516.6L710.0 520.2L714.4 521.2L715.1 525.4L718.0 527.7M718.0 527.7L721.9 526.4L726.0 526.5M710.8 540.6L711.1 539.7M711.1 539.7L715.7 540.3L719.8 542.0L719.9 542.1M730.9 539.6L730.4 538.3M725.3 543.4L728.0 542.1L730.4 538.3M733.3 523.8L728.7 527.7M728.7 527.7L726.0 526.5M731.9 533.6L731.7 533.5M728.7 527.7L731.7 533.5M731.7 533.5L730.4 538.3M671.1 465.2L672.6 461.1L673.0 456.6L675.6 452.9M671.1 465.2L671.6 468.8M677.3 471.8L679.0 468.2L680.5 464.5L683.2 461.5M677.3 471.8L671.6 468.8M683.2 461.5L680.5 458.8L677.1 456.7L675.6 452.9M667.9 471.5L671.6 468.8M661.3 461.9L666.6 462.3L671.1 465.2M693.9 464.9L690.7 462.4L686.4 463.9L683.2 461.5M678.1 473.0L677.3 471.8M675.3 446.0L679.0 443.1L683.5 441.9L687.6 440.1M675.3 446.0L673.0 449.0M673.2 449.5L675.6 452.7M675.6 452.7L679.4 451.3L683.4 451.3L687.7 452.5L691.4 450.3M691.4 450.3L689.6 447.1L690.2 443.0L687.6 440.1M679.1 429.2L679.1 433.6L678.4 437.9L677.9 442.2L675.3 446.0M679.1 429.2L683.8 430.5M688.3 438.4L687.6 440.1M663.6 441.5L665.7 445.2L670.6 445.5L673.0 449.0M662.2 456.8L665.9 454.5L670.1 452.9L673.2 449.5M635.7 423.5L640.8 422.8M635.7 423.5L634.9 419.3L635.6 414.8L633.3 410.9M640.8 422.8L641.4 418.8L641.7 414.9M633.3 410.9L637.3 413.4L641.7 414.9M631.3 427.2L635.7 423.5M644.9 433.3L645.4 429.5L646.0 425.6M646.0 425.6L640.8 422.8M630.4 407.6L633.3 410.9M666.4 390.8L666.9 395.2L664.4 398.7M648.9 396.6L654.7 400.4M664.4 398.7L659.5 399.3L654.7 400.4M646.0 425.6L649.2 423.7M641.7 414.9L647.2 412.9M649.2 423.7L647.1 420.4L647.5 416.6L647.2 412.9M654.0 434.1L656.2 430.9L656.5 427.2L657.3 423.6M649.2 423.7L653.2 422.6L657.3 423.6M663.5 441.0L664.9 437.5L665.7 433.8M665.7 433.8L662.7 430.6L662.5 425.8L659.2 422.8M659.2 422.8L657.3 423.6M645.6 406.5L648.1 411.6M654.7 400.4L654.7 404.0L654.4 407.6L655.6 411.1M655.6 411.1L651.9 411.2L648.1 411.6M648.1 411.6L647.2 412.9M679.1 429.2L678.5 428.6M682.9 416.2L680.6 418.8M680.6 418.8L678.1 423.4L678.5 428.6M665.7 433.8L669.9 433.4L673.2 431.0L676.4 428.5M676.4 428.5L678.5 428.6M678.0 392.9L676.7 398.0L677.3 403.2M664.4 398.7L666.4 402.8M677.3 403.2L673.6 403.6L670.0 403.4L666.4 402.8M681.3 407.1L679.7 406.4M677.3 403.2L679.7 406.4M711.0 538.8L713.4 535.9L715.1 532.7L716.3 529.3M711.0 538.8L707.4 537.9L704.1 536.0L700.5 535.0L696.9 534.1L693.6 532.1M716.3 529.3L712.0 529.2L708.0 527.3L703.5 528.8L699.4 527.2M699.4 527.2L693.6 529.5M693.6 532.1L693.6 529.5M718.0 527.7L716.3 529.3M711.1 539.7L711.0 538.8M690.8 538.1L693.6 532.1M708.5 516.6L705.6 520.2L702.3 523.6L699.4 527.2M689.0 521.5L692.4 524.9L693.6 529.5M665.1 408.3L667.9 410.9L671.2 412.7M665.1 408.3L662.3 411.3L658.5 412.9M658.5 412.9L658.9 417.2L660.0 421.4M671.5 415.6L668.0 420.6M671.5 415.6L671.2 412.7M660.0 421.4L664.0 420.8L668.0 420.6M679.7 406.4L676.7 408.3L673.9 410.5L671.2 412.7M666.4 402.8L665.1 408.3M655.6 411.1L658.5 412.9M659.2 422.8L660.0 421.4M680.6 418.8L675.8 417.9L671.5 415.6M676.4 428.5L673.2 426.2L671.3 422.6L668.0 420.6" fill="none" stroke="#17213a" stroke-width="0.6" stroke-opacity="0.66" stroke-dasharray="4 1"/>
<g fill="none" stroke="#141d36" stroke-width="1.6" stroke-linejoin="round" stroke-linecap="round">
<path d="M375.0 138.8 L373.8 150.0 L370.0 167.5 L375.0 177.5 L382.5 180.0 L386.0 192.5 L384.0 210.0 L380.0 225.0 L362.5 227.5 L360.0 237.5 L351.0 231.0 L353.8 242.5 L347.5 252.5"/>
<path d="M305.0 232.5 L320.0 235.0 L330.0 250.0 L347.5 252.5 L356.0 265.0"/>
<path d="M356.0 265.0 L366.0 266.0 L382.5 260.0 L398.8 258.8"/>
<path d="M356.0 265.0 L362.5 273.8 L360.0 283.8 L350.0 292.5 L342.5 300.0 L333.8 307.5 L332.5 312.5 L340.0 317.5 L342.5 328.8 L340.0 332.5"/>
<path d="M333.8 308.8 L320.0 310.0 L315.0 322.5 L318.8 332.5 L307.5 335.0 L295.0 338.8 L282.5 340.0 L280.0 362.5"/>
<path d="M245.0 342.5 L252.5 352.5 L267.5 360.0 L280.0 362.5"/>
<path d="M280.0 362.5 L297.5 380.0 L307.5 377.5 L320.0 390.0 L325.0 405.0 L328.8 415.0"/>
<path d="M340.0 332.5 L355.0 337.5 L356.2 352.5 L365.0 355.0 L372.5 367.5 L375.0 377.5"/>
<path d="M375.0 377.5 L360.0 390.0 L352.5 400.0 L342.5 415.0 L345.0 427.5"/>
<path d="M375.0 377.5 L385.0 372.5 L392.5 370.0 L395.0 375.0 L405.0 377.5 L417.5 380.0 L427.5 373.8 L452.5 370.0 L456.0 381.0"/>
<path d="M398.8 258.8 L399.5 305.0 L398.8 337.5 L401.0 370.0 L395.0 375.0"/>
<path d="M398.8 258.8 L405.0 255.0 L415.0 250.0 L425.0 240.0 L442.5 236.0"/>
<path d="M465.0 165.0 L457.5 175.0 L455.0 190.0 L447.5 200.0 L445.0 210.0 L447.5 225.0 L442.5 236.0"/>
<path d="M442.5 236.0 L447.5 250.0 L463.8 262.5 L460.0 282.5 L472.5 295.0"/>
<path d="M472.5 295.0 L470.0 325.0 L453.8 342.5 L452.5 370.0"/>
<path d="M472.5 295.0 L502.5 290.0 L518.8 283.8 L523.8 302.5 L545.0 301.2"/>
<path d="M540.0 175.0 L538.8 190.0 L545.0 202.5 L542.5 212.5 L550.0 222.5 L545.0 240.0 L547.5 260.0 L552.5 267.5 L546.2 287.5 L545.0 301.2"/>
<path d="M545.0 301.2 L550.0 315.0 L547.5 322.5 L555.0 330.0 L551.2 341.2 L560.0 356.2 L568.8 370.0 L568.0 380.0"/>
<path d="M568.0 380.0 L593.8 374.4 L596.2 363.8 L600.0 361.2 L631.2 363.0 L638.8 353.8 L665.0 351.2 L670.0 340.0 L680.0 346.0 L695.0 349.0 L705.0 344.0"/>
<path d="M568.0 380.0 L561.2 387.5 L558.8 392.5 L558.0 398.8 L553.8 400.0 L552.5 406.2 L540.0 406.2 L527.5 401.2 L518.8 405.0"/>
<path d="M558.0 398.8 L567.5 397.5 L571.2 402.5 L580.0 403.8 L615.0 397.5 L622.5 403.8 L635.0 405.0 L636.2 408.8 L642.5 403.8 L652.5 417.5 L651.2 426.2 L665.0 428.8 L680.0 426.0 L695.0 431.0 L705.7 429.0"/>
<path d="M580.0 403.8 L578.8 408.8 L582.5 420.0 L585.0 426.2 L588.8 427.5 L590.0 440.0 L600.0 447.0 L606.0 462.0 L603.0 478.0 L612.0 490.0 L618.0 503.0"/>
<path d="M596.0 202.5 L602.5 217.5 L615.0 225.0 L622.5 235.0 L630.0 240.0 L652.5 233.8 L660.0 242.5 L670.0 248.8 L680.0 246.2 L695.0 247.5 L710.0 237.5"/>
<path d="M720.0 107.5 L718.8 120.0 L726.2 127.5 L717.5 137.5 L707.5 147.5 L711.2 162.5 L707.5 177.5 L702.5 197.5 L712.5 210.0 L715.0 230.0 L710.0 237.5"/>
<path d="M710.0 237.5 L730.0 240.0 L757.5 238.8 L765.0 250.0 L775.0 265.0 L790.0 265.0 L805.0 257.5 L820.0 249.0"/>
<path d="M790.0 265.0 L787.5 277.5 L800.0 285.0 L812.5 310.0 L805.0 315.0 L802.5 325.0 L795.0 322.5 L792.5 335.0 L762.5 340.0 L757.5 360.0"/>
<path d="M670.0 248.8 L662.5 260.0 L675.0 277.5 L680.0 290.0 L690.0 307.5"/>
<path d="M662.5 260.0 L655.0 272.0 L640.0 280.0 L638.0 288.0"/>
<path d="M632.0 291.0 L620.0 300.0 L605.0 312.0 L590.0 318.0 L570.0 322.0 L555.0 330.0"/>
<path d="M792.5 335.0 L808.5 340.0 L818.7 352.0 L834.2 346.0 L841.0 358.8 L851.3 376.0"/>
<path d="M851.3 376.0 L859.9 369.1 L870.1 372.5 L869.3 360.6 L883.8 362.3 L894.1 350.3 L907.8 340.0 L910.0 330.0 L922.5 330.0"/>
<path d="M927.5 278.8 L931.2 286.2 L926.2 293.8 L930.0 300.0 L922.5 312.5 L926.2 328.8 L922.5 330.0"/>
<path d="M922.5 330.0 L930.0 340.0 L930.0 347.5 L940.0 350.0 L940.0 370.0 L942.5 382.5"/>
<path d="M851.3 376.8 L875.3 378.5 L878.7 399.1 L877.0 408.5 L865.0 420.5 L871.8 437.6 L894.1 449.6 L887.3 459.9 L878.7 466.8 L889.0 481.0 L893.0 487.0"/>
<path d="M800.0 428.0 L812.0 412.0 L825.6 404.2 L840.2 408.5 L842.7 422.2 L865.0 420.5"/>
<path d="M731.4 358.8 L740.0 365.7 L726.2 376.0 L728.0 396.5 L716.8 405.0 L712.5 403.4 L704.0 415.4 L705.7 429.0 L709.0 436.0 L714.3 446.2 L706.5 451.3 L710.8 463.3 L702.3 471.9 L709.0 481.0 L706.0 492.0"/>
<path d="M714.3 446.2 L730.0 448.0 L746.0 450.0"/>
<path d="M770.8 449.6 L772.5 460.0 L776.0 470.0 L774.0 481.0 L783.0 495.0 L780.0 510.0 L790.0 522.0 L788.0 532.0"/>
</g>
<g fill="#141d36">
<path d="M593.8 185.0 L596.2 200.0 L595.0 222.5 L588.8 222.5 L587.5 207.5 L581.0 203.8 L590.0 197.5Z"/>
<path d="M631.5 273.0 L636.0 271.0 L639.5 280.0 L638.5 290.0 L634.0 291.0 L631.0 283.0Z"/>
<path d="M660.0 307.5 L675.0 310.0 L690.0 307.5 L696.2 315.0 L700.0 325.0 L715.0 335.0 L712.5 342.5 L700.0 346.2 L690.0 337.5 L677.5 325.0 L667.5 317.5Z"/>
<path d="M748.5 355.4 L753.7 348.6 L757.9 357.1 L748.5 359.7Z"/>
<path d="M637.5 505.0 L655.0 500.0 L657.5 490.0 L655.0 480.0 L658.8 480.0 L661.2 490.0 L660.0 500.0 L675.0 507.5 L690.0 500.0 L707.5 493.8 L707.5 496.2 L692.5 503.8 L677.5 513.8 L662.5 510.0 L647.5 508.8 L641.0 512.0Z"/>
<path d="M799.9 427.4 L798.2 435.9 L791.3 441.1 L781.1 440.2 L769.1 438.5 L760.5 441.9 L751.9 441.1 L746.8 444.5 L746.0 453.0 L744.2 459.9 L738.2 466.8 L733.1 477.0 L736.5 478.7 L741.7 471.9 L748.5 461.6 L750.2 454.8 L757.1 451.3 L762.2 446.2 L772.5 442.8 L782.8 446.2 L791.3 453.0 L799.9 449.6 L806.8 441.1Z"/>
</g>
<g fill="none" stroke="#141d36" stroke-linecap="round" stroke-linejoin="round">
<path d="M713.0 339.0 L725.0 343.0 L737.0 348.0 L750.0 356.0" stroke-width="2.6"/>
<path d="M595.0 222.0 L597.0 235.0 L600.0 250.0 L607.0 265.0 L617.0 274.0 L627.0 277.0 L632.0 276.0" stroke-width="2.2"/>
<path d="M638.0 290.0 L648.0 298.0 L660.0 308.0" stroke-width="2.0"/>
<path d="M758.0 358.0 L768.0 366.0 L776.0 374.0 L786.0 380.0 L792.0 392.0 L790.0 404.0 L796.0 415.0 L800.0 428.0" stroke-width="2.0"/>
<path d="M734.0 477.0 L730.0 490.0 L722.0 496.0 L708.0 495.0" stroke-width="2.0"/>
</g>
<g class="city">
<text x="343" y="217.5" textLength="34" lengthAdjust="spacingAndGlyphs">Луцьк</text>
<text x="385" y="225.5" textLength="32" lengthAdjust="spacingAndGlyphs">Рівне</text>
<text x="605" y="163.5" textLength="45" lengthAdjust="spacingAndGlyphs">Чернігів</text>
<text x="771" y="205.5" textLength="29.5" lengthAdjust="spacingAndGlyphs">Суми</text>
<text x="832" y="270.5" textLength="36.5" lengthAdjust="spacingAndGlyphs">Харків</text>
<text x="750" y="297.5" textLength="46.5" lengthAdjust="spacingAndGlyphs">Полтава</text>
<text x="640" y="309.5" textLength="44.5" lengthAdjust="spacingAndGlyphs">Черкаси</text>
<text x="480" y="322.5" textLength="43.5" lengthAdjust="spacingAndGlyphs">Вінниця</text>
<text x="344" y="300.5" textLength="56" lengthAdjust="spacingAndGlyphs">Тернопіль</text>
<text x="285" y="281.5" textLength="32.5" lengthAdjust="spacingAndGlyphs">Львів</text>
<text x="284" y="344.5" textLength="97" lengthAdjust="spacingAndGlyphs">Івано-Франківськ</text>
<text x="199" y="363.5" textLength="48.5" lengthAdjust="spacingAndGlyphs">Ужгород</text>
<text x="962" y="368.5" textLength="51" lengthAdjust="spacingAndGlyphs">Луганськ</text>
<text x="774" y="374.5" textLength="38" lengthAdjust="spacingAndGlyphs">Дніпро</text>
<text x="770" y="416.5" textLength="60" lengthAdjust="spacingAndGlyphs">Запоріжжя</text>
<text x="633" y="475.5" textLength="52.5" lengthAdjust="spacingAndGlyphs">Миколаїв</text>
<text x="667" y="495.5" textLength="40.5" lengthAdjust="spacingAndGlyphs">Херсон</text>
<text x="717" y="605.5" textLength="72.3" lengthAdjust="spacingAndGlyphs">Сімферополь</text>
<text x="692" y="627.5" textLength="69" lengthAdjust="spacingAndGlyphs">Севастополь</text>
</g>
<g class="bub">
<circle cx="339.6" cy="192.4" r="20" fill="rgb(169, 235, 190)" fill-opacity="0.87"/>
<text x="339.6" y="195.8" text-anchor="middle" style="fill:rgb(66, 130, 113);stroke:rgb(66, 130, 113)">58</text>
<circle cx="407.8" cy="203.2" r="26" fill="rgb(92, 206, 157)" fill-opacity="0.87"/>
<text x="407.8" y="206.5" text-anchor="middle" style="fill:rgb(38, 115, 95);stroke:rgb(38, 115, 95)">101</text>
<circle cx="501.1" cy="231.9" r="23" fill="rgb(140, 221, 174)" fill-opacity="0.87"/>
<text x="501.1" y="235.2" text-anchor="middle" style="fill:rgb(55, 123, 104);stroke:rgb(55, 123, 104)">82</text>
<circle cx="594.0" cy="245.2" r="23" fill="rgb(140, 221, 174)" fill-opacity="0.87"/>
<text x="594.0" y="248.5" text-anchor="middle" style="fill:rgb(55, 123, 104);stroke:rgb(55, 123, 104)">85</text>
<circle cx="583.0" cy="290.7" r="26" fill="rgb(140, 221, 174)" fill-opacity="0.87"/>
<text x="583.0" y="294.0" text-anchor="middle" style="fill:rgb(55, 123, 104);stroke:rgb(55, 123, 104)">99</text>
<circle cx="297.1" cy="296.2" r="23" fill="rgb(140, 221, 174)" fill-opacity="0.87"/>
<text x="297.1" y="299.5" text-anchor="middle" style="fill:rgb(55, 123, 104);stroke:rgb(55, 123, 104)">86</text>
<circle cx="659.5" cy="180.7" r="26" fill="rgb(140, 221, 174)" fill-opacity="0.87"/>
<text x="659.5" y="184.0" text-anchor="middle" style="fill:rgb(55, 123, 104);stroke:rgb(55, 123, 104)">88</text>
<circle cx="754.3" cy="198.7" r="29" fill="rgb(92, 206, 157)" fill-opacity="0.87"/>
<text x="754.3" y="202.0" text-anchor="middle" style="fill:rgb(38, 115, 95);stroke:rgb(38, 115, 95)">111</text>
<circle cx="738.8" cy="295.2" r="23" fill="rgb(140, 221, 174)" fill-opacity="0.87"/>
<text x="738.8" y="298.5" text-anchor="middle" style="fill:rgb(55, 123, 104);stroke:rgb(55, 123, 104)">79</text>
<circle cx="861.3" cy="303.7" r="29" fill="rgb(92, 206, 157)" fill-opacity="0.87"/>
<text x="861.3" y="307.0" text-anchor="middle" style="fill:rgb(38, 115, 95);stroke:rgb(38, 115, 95)">125</text>
<circle cx="973.5" cy="346.4" r="17.5" fill="rgb(197, 247, 208)" fill-opacity="0.87"/>
<text x="973.5" y="349.8" text-anchor="middle" style="fill:rgb(76, 136, 123);stroke:rgb(76, 136, 123)">16</text>
<circle cx="786.5" cy="393.5" r="34" fill="rgb(13, 179, 135)" fill-opacity="0.87"/>
<text x="786.5" y="396.8" text-anchor="middle" style="fill:rgb(9, 101, 83);stroke:rgb(9, 101, 83)">204</text>
<circle cx="630.3" cy="327.7" r="26" fill="rgb(140, 221, 174)" fill-opacity="0.87"/>
<text x="630.3" y="331.0" text-anchor="middle" style="fill:rgb(55, 123, 104);stroke:rgb(55, 123, 104)">98</text>
<circle cx="663.3" cy="381.7" r="29" fill="rgb(92, 206, 157)" fill-opacity="0.87"/>
<text x="663.3" y="385.0" text-anchor="middle" style="fill:rgb(38, 115, 95);stroke:rgb(38, 115, 95)">121</text>
<circle cx="374.6" cy="318.2" r="20.5" fill="rgb(169, 235, 190)" fill-opacity="0.87"/>
<text x="374.6" y="321.5" text-anchor="middle" style="fill:rgb(66, 130, 113);stroke:rgb(66, 130, 113)">57</text>
<circle cx="431.8" cy="311.2" r="20" fill="rgb(169, 235, 190)" fill-opacity="0.87"/>
<text x="431.8" y="314.5" text-anchor="middle" style="fill:rgb(66, 130, 113);stroke:rgb(66, 130, 113)">55</text>
<circle cx="510.6" cy="351.4" r="34" fill="rgb(92, 206, 157)" fill-opacity="0.87"/>
<text x="510.6" y="354.8" text-anchor="middle" style="fill:rgb(38, 115, 95);stroke:rgb(38, 115, 95)">139</text>
<circle cx="328.3" cy="366.2" r="17.5" fill="rgb(169, 235, 190)" fill-opacity="0.87"/>
<text x="328.3" y="369.5" text-anchor="middle" style="fill:rgb(66, 130, 113);stroke:rgb(66, 130, 113)">50</text>
<circle cx="268.1" cy="386.2" r="20" fill="rgb(169, 235, 190)" fill-opacity="0.87"/>
<text x="268.1" y="389.5" text-anchor="middle" style="fill:rgb(66, 130, 113);stroke:rgb(66, 130, 113)">51</text>
<circle cx="389.3" cy="395.2" r="17.5" fill="rgb(197, 247, 208)" fill-opacity="0.87"/>
<text x="389.3" y="398.5" text-anchor="middle" style="fill:rgb(76, 136, 123);stroke:rgb(76, 136, 123)">36</text>
<circle cx="649.0" cy="450.7" r="23" fill="rgb(140, 221, 174)" fill-opacity="0.87"/>
<text x="649.0" y="454.0" text-anchor="middle" style="fill:rgb(55, 123, 104);stroke:rgb(55, 123, 104)">82</text>
<circle cx="588.0" cy="489.4" r="17.5" fill="rgb(169, 235, 190)" fill-opacity="0.87"/>
<text x="588.0" y="492.8" text-anchor="middle" style="fill:rgb(66, 130, 113);stroke:rgb(66, 130, 113)">46</text>
<circle cx="727.8" cy="501.2" r="23.5" fill="rgb(169, 235, 190)" fill-opacity="0.87"/>
<text x="727.8" y="504.5" text-anchor="middle" style="fill:rgb(66, 130, 113);stroke:rgb(66, 130, 113)">66</text>
<circle cx="825.6" cy="462.4" r="26" fill="rgb(140, 221, 174)" fill-opacity="0.87"/>
<text x="825.6" y="465.7" text-anchor="middle" style="fill:rgb(55, 123, 104);stroke:rgb(55, 123, 104)">99</text>
<path d="M759.7 188 L761.6 176.5 L777 186Z" fill="#2a8a6a" fill-opacity="0.16"/>
<circle cx="913.6" cy="410.2" r="23.2" fill="rgb(140,228,176)" fill-opacity="0.78"/>
<circle cx="913.6" cy="410.2" r="14.5" fill="rgb(152,230,180)" fill-opacity="0.95"/>
<text x="913.6" y="413.9" text-anchor="middle">1</text>
</g>
<text class="attr" x="1122" y="809" text-anchor="end">©OpenStreetMap contributors</text>
</svg>
 </div>
 <div class="ctl" style="top:369.5px;height:31.5px"><svg style="position:absolute;left:5.2px;top:6px" width="21.4" height="21.4" viewBox="0 0 24 24" fill="none" stroke="#1a85f5" stroke-width="2" stroke-linecap="round" stroke-linejoin="round"><polyline points="23 4 23 10 17 10"/><path d="M20.49 15a9 9 0 1 1-2.12-9.36L23 10"/></svg></div>
 <div class="ctl" style="top:417.2px;height:64.2px"><svg style="position:absolute;left:5.1px;top:5.6px" width="21.4" height="21.4" viewBox="0 0 24 24" fill="none" stroke="#1a85f5" stroke-width="2" stroke-linecap="round"><path d="M12 5V19M5 12H19"/></svg><svg style="position:absolute;left:5.1px;top:38.1px" width="21.4" height="21.4" viewBox="0 0 24 24" fill="none" stroke="#1a85f5" stroke-width="2" stroke-linecap="round"><path d="M5 12H19"/></svg><i style="position:absolute;left:0;top:32px;width:31px;height:1px;background:#273250"></i></div>
</div>
<div class="panel">
 <svg style="position:absolute;left:17px;top:20px" width="16" height="14" viewBox="0 0 16 14" fill="none" stroke="#e8636f" stroke-width="2" stroke-linecap="round"><path d="M1 1.5 H15 M1 7 H11.5 M1 12.5 H8"/></svg>
 <div class="pt">Ранкінг</div>
 <svg style="position:absolute;left:327px;top:20px" width="13" height="13" viewBox="0 0 13 13" fill="none" stroke="#5c6784" stroke-width="1.6" stroke-linecap="round"><path d="M1.5 1.5 L11.5 11.5 M11.5 1.5 L1.5 11.5"/></svg>
 <div class="ul"></div>
 <div class="search"><svg style="position:absolute;left:10px;top:11px" width="17" height="17" viewBox="0 0 17 17" fill="none" stroke="#1a85f5" stroke-width="1.8" stroke-linecap="round"><circle cx="7.5" cy="7.5" r="5.8"/><path d="M12 12 L15.5 15.5"/></svg><span>Пошук</span></div>
 <div class="tot">Україна<b>2 120</b></div>
 <div class="totbar"></div>
 <div class="th">Регіони<svg style="position:absolute;left:46px;top:2px" width="11" height="12" viewBox="0 0 11 12" fill="none" stroke="#4d5875" stroke-width="1.3" stroke-linecap="round" stroke-linejoin="round"><path d="M3 1 V11 M1 9 L3 11 M8 11 V1 M6 3 L8 1 L10 3"/></svg><span class="r">К-сть</span><svg style="position:absolute;right:0px;top:2px" width="9" height="12" viewBox="0 0 9 12" fill="none" stroke="#1a85f5" stroke-width="1.8" stroke-linecap="round" stroke-linejoin="round"><path d="M4.5 1.5 V10.5 M1.5 7.5 L4.5 10.5 L7.5 7.5"/></svg></div>
 <svg style="position:absolute;left:328px;top:192px" width="11" height="7" viewBox="0 0 11 7" fill="none" stroke="#3a4563" stroke-width="1.6" stroke-linecap="round" stroke-linejoin="round"><path d="M1.5 5.5 L5.5 1.5 L9.5 5.5"/></svg>
 <div class="sb"></div>
 <svg style="position:absolute;left:328px;top:785px" width="11" height="7" viewBox="0 0 11 7" fill="none" stroke="#3a4563" stroke-width="1.6" stroke-linecap="round" stroke-linejoin="round"><path d="M1.5 1.5 L5.5 5.5 L9.5 1.5"/></svg>
 <div class="list">
<div class="row"><div class="rl"><span class="rn">Дніпропетровська область</span><span class="rv">204</span></div><div class="bar"><i style="width:304px"></i></div></div>
<div class="row"><div class="rl"><span class="rn">Вінницька область</span><span class="rv">139</span></div><div class="bar"><i style="width:207px"></i></div></div>
<div class="row"><div class="rl"><span class="rn">Харківська область</span><span class="rv">125</span></div><div class="bar"><i style="width:186px"></i></div></div>
<div class="row"><div class="rl"><span class="rn">Кіровоградська область</span><span class="rv">121</span></div><div class="bar"><i style="width:180px"></i></div></div>
<div class="row"><div class="rl"><span class="rn">Сумська область</span><span class="rv">111</span></div><div class="bar"><i style="width:165px"></i></div></div>
<div class="row"><div class="rl"><span class="rn">Рівненська область</span><span class="rv">101</span></div><div class="bar"><i style="width:151px"></i></div></div>
<div class="row"><div class="rl"><span class="rn">Запорізька область</span><span class="rv">99</span></div><div class="bar"><i style="width:148px"></i></div></div>
<div class="row"><div class="rl"><span class="rn">Київська область</span><span class="rv">99</span></div><div class="bar"><i style="width:148px"></i></div></div>
<div class="row"><div class="rl"><span class="rn">Черкаська область</span><span class="rv">98</span></div><div class="bar"><i style="width:146px"></i></div></div>
<div class="row"><div class="rl"><span class="rn">Чернігівська область</span><span class="rv">88</span></div><div class="bar"><i style="width:131px"></i></div></div>
<div class="row"><div class="rl"><span class="rn">Львівська область</span><span class="rv">86</span></div><div class="bar"><i style="width:128px"></i></div></div>
<div class="row"><div class="rl"><span class="rn">Донецька область</span><span class="rv">85</span></div><div class="bar"><i style="width:127px"></i></div></div>
<div class="row"><div class="rl"><span class="rn">м. Київ</span><span class="rv">85</span></div><div class="bar"><i style="width:127px"></i></div></div>

 </div>
</div>
</body></html>
